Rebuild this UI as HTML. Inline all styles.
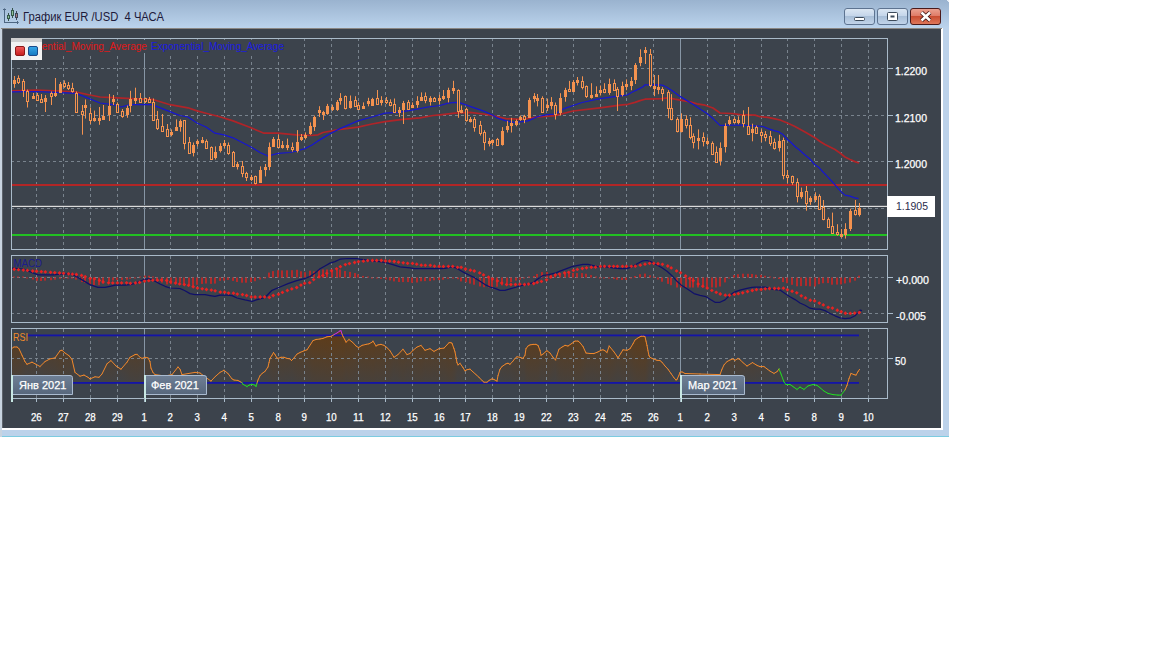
<!DOCTYPE html>
<html><head><meta charset="utf-8">
<style>
html,body{margin:0;padding:0;background:#fff;width:1152px;height:648px;overflow:hidden}
svg{display:block;position:absolute;left:0;top:0}
text{font-family:"Liberation Sans",sans-serif}
</style></head><body>
<svg width="1152" height="648" viewBox="0 0 1152 648">
<defs>
<linearGradient id="tb" x1="0" y1="0" x2="0" y2="1">
<stop offset="0" stop-color="#9ab3cf"/><stop offset="1" stop-color="#bbd3ec"/>
</linearGradient>
<linearGradient id="colg" x1="0" y1="0" x2="0" y2="1"><stop offset="0" stop-color="#6a3a08" stop-opacity="0.75"/><stop offset="1" stop-color="#6a3a08" stop-opacity="0.3"/></linearGradient>
<linearGradient id="rsifill" gradientUnits="userSpaceOnUse" x1="0" y1="330" x2="0" y2="384">
<stop offset="0" stop-color="#5e3810"/><stop offset="0.5" stop-color="#4e3b26"/><stop offset="1" stop-color="#42403e"/>
</linearGradient>
<linearGradient id="btn" x1="0" y1="0" x2="0" y2="1">
<stop offset="0" stop-color="#dce7f3"/><stop offset="0.45" stop-color="#c5d6ea"/><stop offset="0.5" stop-color="#a9bfd8"/><stop offset="1" stop-color="#c3d5ea"/>
</linearGradient>
<linearGradient id="btnc" x1="0" y1="0" x2="0" y2="1">
<stop offset="0" stop-color="#eba393"/><stop offset="0.45" stop-color="#e07c68"/><stop offset="0.5" stop-color="#c94d32"/><stop offset="1" stop-color="#e07a5c"/>
</linearGradient>
<linearGradient id="lbl" x1="0" y1="0" x2="0" y2="1">
<stop offset="0" stop-color="#6e7f95"/><stop offset="1" stop-color="#57677c"/>
</linearGradient>
<linearGradient id="sqr" x1="0" y1="0" x2="0" y2="1">
<stop offset="0" stop-color="#f25a5a"/><stop offset="1" stop-color="#c41c1c"/>
</linearGradient>
<linearGradient id="sqb" x1="0" y1="0" x2="0" y2="1">
<stop offset="0" stop-color="#38a8e8"/><stop offset="1" stop-color="#1478c0"/>
</linearGradient>
<clipPath id="cmain"><rect x="12" y="39" width="875" height="210"/></clipPath>
<clipPath id="cmacd"><rect x="12" y="256" width="875" height="66"/></clipPath>
<clipPath id="crsi"><rect x="12" y="329" width="875" height="69"/></clipPath>
</defs>

<rect x="0" y="0" width="949" height="437" fill="#bcd2ea"/>
<rect x="0" y="0" width="949" height="28" fill="url(#tb)"/>
<rect x="0" y="436" width="949" height="1" fill="#7ccbe0"/>
<rect x="947" y="0" width="2" height="1" fill="#e8f0f8"/><rect x="948" y="1" width="1" height="1" fill="#e8f0f8"/>
<rect x="0" y="28" width="2" height="409" fill="#c8d4e0"/>
<rect x="2" y="28" width="941" height="402" fill="#ffffff"/>
<rect x="1" y="28" width="941" height="1" fill="#8a8682"/>
<rect x="2" y="29" width="939" height="399" fill="#3c434c"/>
<rect x="2" y="29" width="1" height="399" fill="#5e646c"/>
<g shape-rendering="crispEdges">
<rect x="4" y="9" width="1" height="14" fill="#4d6682"/><rect x="3" y="9" width="3" height="1" fill="#4d6682"/><rect x="4" y="8" width="1" height="1" fill="#6f86a0"/>
<rect x="4" y="22" width="15" height="1" fill="#4d6682"/><rect x="17" y="21" width="1" height="3" fill="#4d6682"/><rect x="18" y="22" width="1" height="1" fill="#6f86a0"/>
<rect x="8" y="13" width="1" height="8" fill="#35524a"/><rect x="7" y="15" width="3" height="4" fill="#35584a"/><rect x="8" y="16" width="1" height="2" fill="#90c098"/>
<rect x="12" y="8" width="1" height="10" fill="#35524a"/><rect x="11" y="10" width="3" height="6" fill="#35584a"/><rect x="12" y="11" width="1" height="4" fill="#90c098"/>
<rect x="16" y="11" width="1" height="9" fill="#3c4656"/><rect x="15" y="13" width="3" height="5" fill="#3c4656"/><rect x="16" y="14" width="1" height="3" fill="#a87880"/>
</g>

<text x="23" y="21" font-size="12" fill="#1e1a3a" textLength="141" lengthAdjust="spacingAndGlyphs">График EUR /USD&#160; 4 ЧАСА</text>
<rect x="844.5" y="8.5" width="30" height="16" rx="2.5" fill="url(#btn)" stroke="#5d7390"/>
<rect x="854.5" y="17.5" width="10" height="3" rx="1" fill="#fff" stroke="#3c4a5a"/>
<rect x="877.5" y="8.5" width="30" height="16" rx="2.5" fill="url(#btn)" stroke="#5d7390"/>
<rect x="887.5" y="12.5" width="10" height="8" rx="1" fill="#fff" stroke="#3c4a5a"/><rect x="890.5" y="15.5" width="4" height="2" fill="#3c4a5a"/>
<rect x="910.5" y="8.5" width="30" height="16" rx="2.5" fill="url(#btnc)" stroke="#4a1a1a"/>
<path d="M921.5 12.5 L930 20.5 M930 12.5 L921.5 20.5" stroke="#3a1010" stroke-width="4.2"/>
<path d="M921.5 12.5 L930 20.5 M930 12.5 L921.5 20.5" stroke="#ffffff" stroke-width="2.6"/>
<line x1="36.5" y1="38" x2="36.5" y2="249" stroke="#79838d" stroke-width="1" stroke-dasharray="3,3"/>
<line x1="63.5" y1="38" x2="63.5" y2="249" stroke="#79838d" stroke-width="1" stroke-dasharray="3,3"/>
<line x1="90.5" y1="38" x2="90.5" y2="249" stroke="#79838d" stroke-width="1" stroke-dasharray="3,3"/>
<line x1="117.5" y1="38" x2="117.5" y2="249" stroke="#79838d" stroke-width="1" stroke-dasharray="3,3"/>
<line x1="144.5" y1="38" x2="144.5" y2="249" stroke="#8796a5" stroke-width="1"/>
<line x1="170.5" y1="38" x2="170.5" y2="249" stroke="#79838d" stroke-width="1" stroke-dasharray="3,3"/>
<line x1="197.5" y1="38" x2="197.5" y2="249" stroke="#79838d" stroke-width="1" stroke-dasharray="3,3"/>
<line x1="224.5" y1="38" x2="224.5" y2="249" stroke="#79838d" stroke-width="1" stroke-dasharray="3,3"/>
<line x1="251.5" y1="38" x2="251.5" y2="249" stroke="#79838d" stroke-width="1" stroke-dasharray="3,3"/>
<line x1="278.5" y1="38" x2="278.5" y2="249" stroke="#79838d" stroke-width="1" stroke-dasharray="3,3"/>
<line x1="304.5" y1="38" x2="304.5" y2="249" stroke="#79838d" stroke-width="1" stroke-dasharray="3,3"/>
<line x1="331.5" y1="38" x2="331.5" y2="249" stroke="#79838d" stroke-width="1" stroke-dasharray="3,3"/>
<line x1="358.5" y1="38" x2="358.5" y2="249" stroke="#79838d" stroke-width="1" stroke-dasharray="3,3"/>
<line x1="385.5" y1="38" x2="385.5" y2="249" stroke="#79838d" stroke-width="1" stroke-dasharray="3,3"/>
<line x1="412.5" y1="38" x2="412.5" y2="249" stroke="#79838d" stroke-width="1" stroke-dasharray="3,3"/>
<line x1="439.5" y1="38" x2="439.5" y2="249" stroke="#79838d" stroke-width="1" stroke-dasharray="3,3"/>
<line x1="465.5" y1="38" x2="465.5" y2="249" stroke="#79838d" stroke-width="1" stroke-dasharray="3,3"/>
<line x1="492.5" y1="38" x2="492.5" y2="249" stroke="#79838d" stroke-width="1" stroke-dasharray="3,3"/>
<line x1="519.5" y1="38" x2="519.5" y2="249" stroke="#79838d" stroke-width="1" stroke-dasharray="3,3"/>
<line x1="546.5" y1="38" x2="546.5" y2="249" stroke="#79838d" stroke-width="1" stroke-dasharray="3,3"/>
<line x1="573.5" y1="38" x2="573.5" y2="249" stroke="#79838d" stroke-width="1" stroke-dasharray="3,3"/>
<line x1="600.5" y1="38" x2="600.5" y2="249" stroke="#79838d" stroke-width="1" stroke-dasharray="3,3"/>
<line x1="626.5" y1="38" x2="626.5" y2="249" stroke="#79838d" stroke-width="1" stroke-dasharray="3,3"/>
<line x1="653.5" y1="38" x2="653.5" y2="249" stroke="#79838d" stroke-width="1" stroke-dasharray="3,3"/>
<line x1="680.5" y1="38" x2="680.5" y2="249" stroke="#8796a5" stroke-width="1"/>
<line x1="707.5" y1="38" x2="707.5" y2="249" stroke="#79838d" stroke-width="1" stroke-dasharray="3,3"/>
<line x1="734.5" y1="38" x2="734.5" y2="249" stroke="#79838d" stroke-width="1" stroke-dasharray="3,3"/>
<line x1="761.5" y1="38" x2="761.5" y2="249" stroke="#79838d" stroke-width="1" stroke-dasharray="3,3"/>
<line x1="787.5" y1="38" x2="787.5" y2="249" stroke="#79838d" stroke-width="1" stroke-dasharray="3,3"/>
<line x1="814.5" y1="38" x2="814.5" y2="249" stroke="#79838d" stroke-width="1" stroke-dasharray="3,3"/>
<line x1="841.5" y1="38" x2="841.5" y2="249" stroke="#79838d" stroke-width="1" stroke-dasharray="3,3"/>
<line x1="868.5" y1="38" x2="868.5" y2="249" stroke="#79838d" stroke-width="1" stroke-dasharray="3,3"/>
<line x1="11" y1="68.5" x2="887" y2="68.5" stroke="#79838d" stroke-width="1" stroke-dasharray="3,3"/>
<line x1="11" y1="115.5" x2="887" y2="115.5" stroke="#79838d" stroke-width="1" stroke-dasharray="3,3"/>
<line x1="11" y1="161.5" x2="887" y2="161.5" stroke="#79838d" stroke-width="1" stroke-dasharray="3,3"/>
<line x1="11" y1="208.5" x2="887" y2="208.5" stroke="#79838d" stroke-width="1" stroke-dasharray="3,3"/>
<rect x="12" y="184" width="875" height="2" fill="#b22626"/>
<rect x="12" y="206" width="875" height="1" fill="#dcdcdc"/><rect x="12" y="205" width="875" height="1" fill="#5c6168"/>
<rect x="12" y="234" width="875" height="2" fill="#22c022"/>
<g clip-path="url(#cmain)">
<polyline points="11,91 36,90 60,91 76,92 90,95 100,97 113,97.7 145,99.3 152,99.3 170,104.7 188,107.8 197,110.9 206,113.2 218,116.2 233,120.9 251,127.8 264,133.2 278,133.2 296,134.8 311,135.5 318,134.8 323,132.5 340,129.4 358,127.1 372,124 385,121.7 403,119.4 420,117.8 433,115.5 440,114.8 455,113.2 470,112.4 483,114 492,115.5 506,118.6 520,119.4 538,117 555,115.6 573,111 600,107.9 620,105.2 628,104.3 635,102.4 640,100.6 645,99.2 655,98.9 662,98.7 668,97.8 675,99.2 683,100.6 690,101.9 697,103.8 705,105.2 713,108 720,113 732,113.5 740,114.6 755,115.1 760,116.7 768,117.3 775,118.9 780,120 788,123.2 795,126.5 805,131.9 815,137.8 820,141.5 825,144.5 830,147 835,149.5 840,153 845,157 850,159.5 855,161.6 859,163" fill="none" stroke="#b02428" stroke-width="1.7" stroke-linejoin="round"/>
<polyline points="11,91.9 36,91.5 60,92.7 76,93.3 90,98.9 100,103 113,104.7 121,107 130,104.7 145,104.7 152,104.7 170,111.6 175,113.7 180,115.5 188,117 197,123 206,127 215,133.2 224,134.8 233,137.8 251,147 260,152.5 268,156 278,153.3 290,152.5 296.7,151 305,148.6 312,145 318,140.9 323,137.9 331,133.3 340,128.6 358,120.9 372,117 385,113.2 398,112.4 412,110.1 428,107 440,105.5 448,103.2 455,102.4 461,103.2 470,106.3 483,110.9 492,114.8 497,117.8 506,120.9 515,122.5 528,120.9 538,116.5 546,114.8 555,114 564,108.7 582,102.5 600,98.6 620,95.9 627,95 632,92.2 638,89.4 643,86.7 645,84.8 660,84.8 663,85.3 668,88 673,91.3 680,96.4 687,100.6 693,104.3 700,108.9 707,113.5 713,118.6 720,125.4 740,125 755,125.9 763,126.5 768,128.6 775,130.8 779,131.9 783,134.6 788,140 790,141.5 795,146.5 800,150.5 805,155 810,159 814.6,164.6 819,167.6 823,172 828,177.1 833,182.6 837,187.1 841,191.6 845,195.1 850,196.1 854,197.6 858.5,198.6" fill="none" stroke="#1616d0" stroke-width="1.25" stroke-linejoin="round"/>
<line x1="14.5" y1="76" x2="14.5" y2="87.8" stroke="#f4924f" stroke-width="1"/>
<rect x="13" y="80" width="3" height="4" fill="#f4924f"/>
<line x1="18.5" y1="75.4" x2="18.5" y2="84" stroke="#f4924f" stroke-width="1"/>
<rect x="17.5" y="78.5" width="2" height="4" fill="#3c434c" stroke="#f4924f" stroke-width="1"/>
<line x1="23.5" y1="79" x2="23.5" y2="97" stroke="#f4924f" stroke-width="1"/>
<rect x="22.5" y="81.5" width="2" height="9" fill="#3c434c" stroke="#f4924f" stroke-width="1"/>
<line x1="27.5" y1="89.6" x2="27.5" y2="107.5" stroke="#f4924f" stroke-width="1"/>
<rect x="26.5" y="91.5" width="2" height="10" fill="#3c434c" stroke="#f4924f" stroke-width="1"/>
<line x1="33.5" y1="93" x2="33.5" y2="99" stroke="#f4924f" stroke-width="1"/>
<rect x="32" y="96" width="3" height="3" fill="#f4924f"/>
<line x1="37.5" y1="93" x2="37.5" y2="100.7" stroke="#f4924f" stroke-width="1"/>
<rect x="36.5" y="95.5" width="2" height="5" fill="#3c434c" stroke="#f4924f" stroke-width="1"/>
<line x1="41.5" y1="94" x2="41.5" y2="103" stroke="#f4924f" stroke-width="1"/>
<rect x="40.5" y="99.5" width="2" height="3" fill="#3c434c" stroke="#f4924f" stroke-width="1"/>
<line x1="45.5" y1="95" x2="45.5" y2="112" stroke="#f4924f" stroke-width="1"/>
<rect x="44" y="98" width="3" height="4" fill="#f4924f"/>
<line x1="51.5" y1="91.5" x2="51.5" y2="105" stroke="#f4924f" stroke-width="1"/>
<rect x="50.5" y="93.5" width="2" height="3" fill="#3c434c" stroke="#f4924f" stroke-width="1"/>
<line x1="55.5" y1="78" x2="55.5" y2="97" stroke="#f4924f" stroke-width="1"/>
<rect x="54" y="93" width="3" height="3" fill="#f4924f"/>
<line x1="60.5" y1="82" x2="60.5" y2="92" stroke="#f4924f" stroke-width="1"/>
<rect x="59" y="84" width="3" height="9" fill="#f4924f"/>
<line x1="64.5" y1="80.4" x2="64.5" y2="87.8" stroke="#f4924f" stroke-width="1"/>
<rect x="63.5" y="83.5" width="2" height="3" fill="#3c434c" stroke="#f4924f" stroke-width="1"/>
<line x1="68.5" y1="82" x2="68.5" y2="90" stroke="#f4924f" stroke-width="1"/>
<rect x="67.5" y="85.5" width="2" height="3" fill="#3c434c" stroke="#f4924f" stroke-width="1"/>
<line x1="72.5" y1="82.8" x2="72.5" y2="92.7" stroke="#f4924f" stroke-width="1"/>
<rect x="71.5" y="88.5" width="2" height="3" fill="#3c434c" stroke="#f4924f" stroke-width="1"/>
<line x1="76.5" y1="91.5" x2="76.5" y2="112.5" stroke="#f4924f" stroke-width="1"/>
<rect x="75.5" y="93.5" width="2" height="19" fill="#3c434c" stroke="#f4924f" stroke-width="1"/>
<line x1="82.5" y1="105" x2="82.5" y2="134.7" stroke="#f4924f" stroke-width="1"/>
<rect x="81.5" y="111.5" width="2" height="3" fill="#3c434c" stroke="#f4924f" stroke-width="1"/>
<line x1="85.5" y1="99.5" x2="85.5" y2="118.6" stroke="#f4924f" stroke-width="1"/>
<rect x="84" y="105" width="3" height="3" fill="#f4924f"/>
<line x1="90.5" y1="107.5" x2="90.5" y2="124" stroke="#f4924f" stroke-width="1"/>
<rect x="89.5" y="113.5" width="2" height="7" fill="#3c434c" stroke="#f4924f" stroke-width="1"/>
<line x1="94.5" y1="110.6" x2="94.5" y2="121.7" stroke="#f4924f" stroke-width="1"/>
<rect x="93" y="118" width="3" height="3" fill="#f4924f"/>
<line x1="99.5" y1="107" x2="99.5" y2="124.8" stroke="#f4924f" stroke-width="1"/>
<rect x="98" y="118" width="3" height="3" fill="#f4924f"/>
<line x1="103.5" y1="105" x2="103.5" y2="120" stroke="#f4924f" stroke-width="1"/>
<rect x="102" y="116" width="3" height="4" fill="#f4924f"/>
<line x1="109.5" y1="94" x2="109.5" y2="121" stroke="#f4924f" stroke-width="1"/>
<rect x="108" y="106" width="3" height="9" fill="#f4924f"/>
<line x1="113.5" y1="95" x2="113.5" y2="105" stroke="#f4924f" stroke-width="1"/>
<rect x="112" y="99" width="3" height="3" fill="#f4924f"/>
<line x1="117.5" y1="102.4" x2="117.5" y2="113" stroke="#f4924f" stroke-width="1"/>
<rect x="116.5" y="104.5" width="2" height="8" fill="#3c434c" stroke="#f4924f" stroke-width="1"/>
<line x1="122.5" y1="109" x2="122.5" y2="117.8" stroke="#f4924f" stroke-width="1"/>
<rect x="121.5" y="111.5" width="2" height="5" fill="#3c434c" stroke="#f4924f" stroke-width="1"/>
<line x1="127.5" y1="105.5" x2="127.5" y2="117.8" stroke="#f4924f" stroke-width="1"/>
<rect x="126" y="108" width="3" height="7" fill="#f4924f"/>
<line x1="130.5" y1="90.8" x2="130.5" y2="112.4" stroke="#f4924f" stroke-width="1"/>
<rect x="129" y="99" width="3" height="7" fill="#f4924f"/>
<line x1="135.5" y1="87.7" x2="135.5" y2="104" stroke="#f4924f" stroke-width="1"/>
<rect x="134" y="98" width="3" height="3" fill="#f4924f"/>
<line x1="140.5" y1="93" x2="140.5" y2="103" stroke="#f4924f" stroke-width="1"/>
<rect x="139.5" y="98.5" width="2" height="4" fill="#3c434c" stroke="#f4924f" stroke-width="1"/>
<line x1="145.5" y1="97.7" x2="145.5" y2="103" stroke="#f4924f" stroke-width="1"/>
<rect x="144.5" y="98.5" width="2" height="3" fill="#3c434c" stroke="#f4924f" stroke-width="1"/>
<line x1="149.5" y1="97" x2="149.5" y2="103" stroke="#f4924f" stroke-width="1"/>
<rect x="148.5" y="99.5" width="2" height="3" fill="#3c434c" stroke="#f4924f" stroke-width="1"/>
<line x1="153.5" y1="98.5" x2="153.5" y2="121" stroke="#f4924f" stroke-width="1"/>
<rect x="152.5" y="102.5" width="2" height="18" fill="#3c434c" stroke="#f4924f" stroke-width="1"/>
<line x1="157.5" y1="110.9" x2="157.5" y2="130" stroke="#f4924f" stroke-width="1"/>
<rect x="156.5" y="119.5" width="2" height="9" fill="#3c434c" stroke="#f4924f" stroke-width="1"/>
<line x1="162.5" y1="114" x2="162.5" y2="131.7" stroke="#f4924f" stroke-width="1"/>
<rect x="161.5" y="126.5" width="2" height="5" fill="#3c434c" stroke="#f4924f" stroke-width="1"/>
<line x1="167.5" y1="124" x2="167.5" y2="136.3" stroke="#f4924f" stroke-width="1"/>
<rect x="166.5" y="129.5" width="2" height="7" fill="#3c434c" stroke="#f4924f" stroke-width="1"/>
<line x1="171.5" y1="129.4" x2="171.5" y2="136.3" stroke="#f4924f" stroke-width="1"/>
<rect x="170" y="132" width="3" height="3" fill="#f4924f"/>
<line x1="176.5" y1="119.4" x2="176.5" y2="131" stroke="#f4924f" stroke-width="1"/>
<rect x="175" y="127" width="3" height="4" fill="#f4924f"/>
<line x1="180.5" y1="119.4" x2="180.5" y2="131.7" stroke="#f4924f" stroke-width="1"/>
<rect x="179" y="121" width="3" height="6" fill="#f4924f"/>
<line x1="184.5" y1="120" x2="184.5" y2="149.4" stroke="#f4924f" stroke-width="1"/>
<rect x="183.5" y="120.5" width="2" height="23" fill="#3c434c" stroke="#f4924f" stroke-width="1"/>
<line x1="189.5" y1="137" x2="189.5" y2="154" stroke="#f4924f" stroke-width="1"/>
<rect x="188.5" y="142.5" width="2" height="11" fill="#3c434c" stroke="#f4924f" stroke-width="1"/>
<line x1="193.5" y1="142.5" x2="193.5" y2="156.4" stroke="#f4924f" stroke-width="1"/>
<rect x="192" y="145" width="3" height="8" fill="#f4924f"/>
<line x1="197.5" y1="139.4" x2="197.5" y2="146.4" stroke="#f4924f" stroke-width="1"/>
<rect x="196" y="141" width="3" height="3" fill="#f4924f"/>
<line x1="202.5" y1="137" x2="202.5" y2="143.3" stroke="#f4924f" stroke-width="1"/>
<rect x="201" y="140" width="3" height="3" fill="#f4924f"/>
<line x1="206.5" y1="139.4" x2="206.5" y2="148.7" stroke="#f4924f" stroke-width="1"/>
<rect x="205.5" y="141.5" width="2" height="7" fill="#3c434c" stroke="#f4924f" stroke-width="1"/>
<line x1="211.5" y1="146.4" x2="211.5" y2="159.5" stroke="#f4924f" stroke-width="1"/>
<rect x="210.5" y="147.5" width="2" height="12" fill="#3c434c" stroke="#f4924f" stroke-width="1"/>
<line x1="215.5" y1="146.4" x2="215.5" y2="159.5" stroke="#f4924f" stroke-width="1"/>
<rect x="214" y="152" width="3" height="6" fill="#f4924f"/>
<line x1="220.5" y1="143.2" x2="220.5" y2="152.5" stroke="#f4924f" stroke-width="1"/>
<rect x="219" y="146" width="3" height="5" fill="#f4924f"/>
<line x1="224.5" y1="140" x2="224.5" y2="147.9" stroke="#f4924f" stroke-width="1"/>
<rect x="223" y="143" width="3" height="3" fill="#f4924f"/>
<line x1="228.5" y1="142.5" x2="228.5" y2="154.8" stroke="#f4924f" stroke-width="1"/>
<rect x="227.5" y="145.5" width="2" height="8" fill="#3c434c" stroke="#f4924f" stroke-width="1"/>
<line x1="233.5" y1="151" x2="233.5" y2="167" stroke="#f4924f" stroke-width="1"/>
<rect x="232.5" y="152.5" width="2" height="14" fill="#3c434c" stroke="#f4924f" stroke-width="1"/>
<line x1="237.5" y1="161.8" x2="237.5" y2="169.5" stroke="#f4924f" stroke-width="1"/>
<rect x="236" y="164" width="3" height="3" fill="#f4924f"/>
<line x1="242.5" y1="161" x2="242.5" y2="177.2" stroke="#f4924f" stroke-width="1"/>
<rect x="241.5" y="166.5" width="2" height="7" fill="#3c434c" stroke="#f4924f" stroke-width="1"/>
<line x1="246.5" y1="171.8" x2="246.5" y2="181" stroke="#f4924f" stroke-width="1"/>
<rect x="245.5" y="173.5" width="2" height="4" fill="#3c434c" stroke="#f4924f" stroke-width="1"/>
<line x1="251.5" y1="174.9" x2="251.5" y2="181" stroke="#f4924f" stroke-width="1"/>
<rect x="250" y="177" width="3" height="3" fill="#f4924f"/>
<line x1="255.5" y1="175.6" x2="255.5" y2="184.4" stroke="#f4924f" stroke-width="1"/>
<rect x="254.5" y="176.5" width="2" height="7" fill="#3c434c" stroke="#f4924f" stroke-width="1"/>
<line x1="260.5" y1="166.4" x2="260.5" y2="182.6" stroke="#f4924f" stroke-width="1"/>
<rect x="259" y="170" width="3" height="13" fill="#f4924f"/>
<line x1="265.5" y1="164" x2="265.5" y2="176.4" stroke="#f4924f" stroke-width="1"/>
<rect x="264" y="167" width="3" height="3" fill="#f4924f"/>
<line x1="269.5" y1="142.5" x2="269.5" y2="170.2" stroke="#f4924f" stroke-width="1"/>
<rect x="268" y="147" width="3" height="20" fill="#f4924f"/>
<line x1="273.5" y1="137" x2="273.5" y2="147" stroke="#f4924f" stroke-width="1"/>
<rect x="272" y="139" width="3" height="8" fill="#f4924f"/>
<line x1="278.5" y1="134.8" x2="278.5" y2="147.9" stroke="#f4924f" stroke-width="1"/>
<rect x="277.5" y="139.5" width="2" height="8" fill="#3c434c" stroke="#f4924f" stroke-width="1"/>
<line x1="282.5" y1="141" x2="282.5" y2="148.6" stroke="#f4924f" stroke-width="1"/>
<rect x="281" y="145" width="3" height="3" fill="#f4924f"/>
<line x1="287.5" y1="138.6" x2="287.5" y2="150.2" stroke="#f4924f" stroke-width="1"/>
<rect x="286" y="145" width="3" height="3" fill="#f4924f"/>
<line x1="292.5" y1="142.5" x2="292.5" y2="151.7" stroke="#f4924f" stroke-width="1"/>
<rect x="291.5" y="147.5" width="2" height="2" fill="#3c434c" stroke="#f4924f" stroke-width="1"/>
<line x1="297.5" y1="130.1" x2="297.5" y2="152.5" stroke="#f4924f" stroke-width="1"/>
<rect x="296" y="142" width="3" height="9" fill="#f4924f"/>
<line x1="301.5" y1="134" x2="301.5" y2="141" stroke="#f4924f" stroke-width="1"/>
<rect x="300" y="137" width="3" height="3" fill="#f4924f"/>
<line x1="305.5" y1="132.4" x2="305.5" y2="139.4" stroke="#f4924f" stroke-width="1"/>
<rect x="304" y="135" width="3" height="3" fill="#f4924f"/>
<line x1="310.5" y1="122.4" x2="310.5" y2="134.8" stroke="#f4924f" stroke-width="1"/>
<rect x="309" y="126" width="3" height="8" fill="#f4924f"/>
<line x1="314.5" y1="115.5" x2="314.5" y2="130.9" stroke="#f4924f" stroke-width="1"/>
<rect x="313" y="117" width="3" height="10" fill="#f4924f"/>
<line x1="319.5" y1="106.2" x2="319.5" y2="117" stroke="#f4924f" stroke-width="1"/>
<rect x="318" y="110" width="3" height="3" fill="#f4924f"/>
<line x1="323.5" y1="110.8" x2="323.5" y2="120" stroke="#f4924f" stroke-width="1"/>
<rect x="322" y="112" width="3" height="3" fill="#f4924f"/>
<line x1="327.5" y1="103.9" x2="327.5" y2="114.8" stroke="#f4924f" stroke-width="1"/>
<rect x="326" y="106" width="3" height="8" fill="#f4924f"/>
<line x1="332.5" y1="104.7" x2="332.5" y2="110.9" stroke="#f4924f" stroke-width="1"/>
<rect x="331" y="107" width="3" height="3" fill="#f4924f"/>
<line x1="337.5" y1="100" x2="337.5" y2="110.9" stroke="#f4924f" stroke-width="1"/>
<rect x="336" y="102" width="3" height="8" fill="#f4924f"/>
<line x1="340.5" y1="93.1" x2="340.5" y2="104.7" stroke="#f4924f" stroke-width="1"/>
<rect x="339" y="98" width="3" height="3" fill="#f4924f"/>
<line x1="345.5" y1="95.5" x2="345.5" y2="109.4" stroke="#f4924f" stroke-width="1"/>
<rect x="344.5" y="96.5" width="2" height="12" fill="#3c434c" stroke="#f4924f" stroke-width="1"/>
<line x1="350.5" y1="95.5" x2="350.5" y2="108.6" stroke="#f4924f" stroke-width="1"/>
<rect x="349" y="101" width="3" height="7" fill="#f4924f"/>
<line x1="355.5" y1="96.2" x2="355.5" y2="106.3" stroke="#f4924f" stroke-width="1"/>
<rect x="354.5" y="100.5" width="2" height="6" fill="#3c434c" stroke="#f4924f" stroke-width="1"/>
<line x1="358.5" y1="102.4" x2="358.5" y2="108.6" stroke="#f4924f" stroke-width="1"/>
<rect x="357.5" y="105.5" width="2" height="4" fill="#3c434c" stroke="#f4924f" stroke-width="1"/>
<line x1="363.5" y1="102.4" x2="363.5" y2="108.6" stroke="#f4924f" stroke-width="1"/>
<rect x="362" y="106" width="3" height="3" fill="#f4924f"/>
<line x1="368.5" y1="97.8" x2="368.5" y2="106.3" stroke="#f4924f" stroke-width="1"/>
<rect x="367" y="101" width="3" height="3" fill="#f4924f"/>
<line x1="372.5" y1="97.8" x2="372.5" y2="105.5" stroke="#f4924f" stroke-width="1"/>
<rect x="371" y="99" width="3" height="7" fill="#f4924f"/>
<line x1="377.5" y1="90" x2="377.5" y2="104.7" stroke="#f4924f" stroke-width="1"/>
<rect x="376.5" y="98.5" width="2" height="6" fill="#3c434c" stroke="#f4924f" stroke-width="1"/>
<line x1="381.5" y1="96.2" x2="381.5" y2="105.5" stroke="#f4924f" stroke-width="1"/>
<rect x="380" y="100" width="3" height="3" fill="#f4924f"/>
<line x1="386.5" y1="97" x2="386.5" y2="104" stroke="#f4924f" stroke-width="1"/>
<rect x="385.5" y="100.5" width="2" height="2" fill="#3c434c" stroke="#f4924f" stroke-width="1"/>
<line x1="390.5" y1="99.3" x2="390.5" y2="106.3" stroke="#f4924f" stroke-width="1"/>
<rect x="389.5" y="102.5" width="2" height="3" fill="#3c434c" stroke="#f4924f" stroke-width="1"/>
<line x1="394.5" y1="98.5" x2="394.5" y2="112.4" stroke="#f4924f" stroke-width="1"/>
<rect x="393.5" y="104.5" width="2" height="8" fill="#3c434c" stroke="#f4924f" stroke-width="1"/>
<line x1="399.5" y1="107" x2="399.5" y2="117" stroke="#f4924f" stroke-width="1"/>
<rect x="398" y="110" width="3" height="3" fill="#f4924f"/>
<line x1="403.5" y1="100.9" x2="403.5" y2="124" stroke="#f4924f" stroke-width="1"/>
<rect x="402" y="103" width="3" height="7" fill="#f4924f"/>
<line x1="408.5" y1="100" x2="408.5" y2="110.1" stroke="#f4924f" stroke-width="1"/>
<rect x="407.5" y="102.5" width="2" height="7" fill="#3c434c" stroke="#f4924f" stroke-width="1"/>
<line x1="412.5" y1="102.4" x2="412.5" y2="107" stroke="#f4924f" stroke-width="1"/>
<rect x="411" y="105" width="3" height="3" fill="#f4924f"/>
<line x1="417.5" y1="96.2" x2="417.5" y2="107.8" stroke="#f4924f" stroke-width="1"/>
<rect x="416" y="101" width="3" height="4" fill="#f4924f"/>
<line x1="421.5" y1="92.4" x2="421.5" y2="100.9" stroke="#f4924f" stroke-width="1"/>
<rect x="420" y="97" width="3" height="4" fill="#f4924f"/>
<line x1="425.5" y1="92.4" x2="425.5" y2="103.2" stroke="#f4924f" stroke-width="1"/>
<rect x="424.5" y="96.5" width="2" height="4" fill="#3c434c" stroke="#f4924f" stroke-width="1"/>
<line x1="430.5" y1="96.2" x2="430.5" y2="105.5" stroke="#f4924f" stroke-width="1"/>
<rect x="429" y="98" width="3" height="4" fill="#f4924f"/>
<line x1="434.5" y1="97" x2="434.5" y2="101.6" stroke="#f4924f" stroke-width="1"/>
<rect x="433.5" y="98.5" width="2" height="3" fill="#3c434c" stroke="#f4924f" stroke-width="1"/>
<line x1="439.5" y1="94.7" x2="439.5" y2="104" stroke="#f4924f" stroke-width="1"/>
<rect x="438" y="98" width="3" height="3" fill="#f4924f"/>
<line x1="443.5" y1="90" x2="443.5" y2="100" stroke="#f4924f" stroke-width="1"/>
<rect x="442" y="96" width="3" height="3" fill="#f4924f"/>
<line x1="448.5" y1="87.7" x2="448.5" y2="102.4" stroke="#f4924f" stroke-width="1"/>
<rect x="447" y="90" width="3" height="8" fill="#f4924f"/>
<line x1="453.5" y1="80.8" x2="453.5" y2="93.9" stroke="#f4924f" stroke-width="1"/>
<rect x="452" y="88" width="3" height="3" fill="#f4924f"/>
<line x1="458.5" y1="89.3" x2="458.5" y2="117.8" stroke="#f4924f" stroke-width="1"/>
<rect x="457.5" y="90.5" width="2" height="21" fill="#3c434c" stroke="#f4924f" stroke-width="1"/>
<line x1="461.5" y1="105.5" x2="461.5" y2="113.2" stroke="#f4924f" stroke-width="1"/>
<rect x="460" y="110" width="3" height="3" fill="#f4924f"/>
<line x1="466.5" y1="107.8" x2="466.5" y2="121.7" stroke="#f4924f" stroke-width="1"/>
<rect x="465.5" y="109.5" width="2" height="11" fill="#3c434c" stroke="#f4924f" stroke-width="1"/>
<line x1="470.5" y1="117" x2="470.5" y2="122.5" stroke="#f4924f" stroke-width="1"/>
<rect x="469" y="119" width="3" height="3" fill="#f4924f"/>
<line x1="474.5" y1="117" x2="474.5" y2="131.7" stroke="#f4924f" stroke-width="1"/>
<rect x="473.5" y="119.5" width="2" height="8" fill="#3c434c" stroke="#f4924f" stroke-width="1"/>
<line x1="480.5" y1="120.9" x2="480.5" y2="135.6" stroke="#f4924f" stroke-width="1"/>
<rect x="479.5" y="125.5" width="2" height="8" fill="#3c434c" stroke="#f4924f" stroke-width="1"/>
<line x1="484.5" y1="130.2" x2="484.5" y2="150.2" stroke="#f4924f" stroke-width="1"/>
<rect x="483.5" y="132.5" width="2" height="10" fill="#3c434c" stroke="#f4924f" stroke-width="1"/>
<line x1="489.5" y1="137.9" x2="489.5" y2="146.4" stroke="#f4924f" stroke-width="1"/>
<rect x="488" y="141" width="3" height="3" fill="#f4924f"/>
<line x1="492.5" y1="139.4" x2="492.5" y2="145.6" stroke="#f4924f" stroke-width="1"/>
<rect x="491" y="140" width="3" height="3" fill="#f4924f"/>
<line x1="497.5" y1="137.9" x2="497.5" y2="145.6" stroke="#f4924f" stroke-width="1"/>
<rect x="496.5" y="139.5" width="2" height="6" fill="#3c434c" stroke="#f4924f" stroke-width="1"/>
<line x1="502.5" y1="127.1" x2="502.5" y2="145.6" stroke="#f4924f" stroke-width="1"/>
<rect x="501" y="131" width="3" height="14" fill="#f4924f"/>
<line x1="507.5" y1="120.9" x2="507.5" y2="132.5" stroke="#f4924f" stroke-width="1"/>
<rect x="506" y="126" width="3" height="4" fill="#f4924f"/>
<line x1="511.5" y1="117.8" x2="511.5" y2="132.5" stroke="#f4924f" stroke-width="1"/>
<rect x="510" y="123" width="3" height="3" fill="#f4924f"/>
<line x1="516.5" y1="119.4" x2="516.5" y2="126.3" stroke="#f4924f" stroke-width="1"/>
<rect x="515" y="121" width="3" height="4" fill="#f4924f"/>
<line x1="520.5" y1="115.5" x2="520.5" y2="120.9" stroke="#f4924f" stroke-width="1"/>
<rect x="519" y="117" width="3" height="3" fill="#f4924f"/>
<line x1="524.5" y1="114.8" x2="524.5" y2="123.2" stroke="#f4924f" stroke-width="1"/>
<rect x="523.5" y="116.5" width="2" height="3" fill="#3c434c" stroke="#f4924f" stroke-width="1"/>
<line x1="529.5" y1="97.8" x2="529.5" y2="117.8" stroke="#f4924f" stroke-width="1"/>
<rect x="528" y="100" width="3" height="18" fill="#f4924f"/>
<line x1="534.5" y1="93.1" x2="534.5" y2="102.4" stroke="#f4924f" stroke-width="1"/>
<rect x="533" y="96" width="3" height="3" fill="#f4924f"/>
<line x1="537.5" y1="94" x2="537.5" y2="106.4" stroke="#f4924f" stroke-width="1"/>
<rect x="536" y="98" width="3" height="3" fill="#f4924f"/>
<line x1="542.5" y1="96.3" x2="542.5" y2="112.5" stroke="#f4924f" stroke-width="1"/>
<rect x="541.5" y="98.5" width="2" height="14" fill="#3c434c" stroke="#f4924f" stroke-width="1"/>
<line x1="547.5" y1="98.6" x2="547.5" y2="111" stroke="#f4924f" stroke-width="1"/>
<rect x="546" y="105" width="3" height="3" fill="#f4924f"/>
<line x1="551.5" y1="97.1" x2="551.5" y2="109.4" stroke="#f4924f" stroke-width="1"/>
<rect x="550" y="102" width="3" height="4" fill="#f4924f"/>
<line x1="555.5" y1="102.5" x2="555.5" y2="119.5" stroke="#f4924f" stroke-width="1"/>
<rect x="554.5" y="105.5" width="2" height="9" fill="#3c434c" stroke="#f4924f" stroke-width="1"/>
<line x1="560.5" y1="93.2" x2="560.5" y2="115.6" stroke="#f4924f" stroke-width="1"/>
<rect x="559" y="98" width="3" height="15" fill="#f4924f"/>
<line x1="565.5" y1="87.8" x2="565.5" y2="101.7" stroke="#f4924f" stroke-width="1"/>
<rect x="564" y="90" width="3" height="7" fill="#f4924f"/>
<line x1="569.5" y1="80.9" x2="569.5" y2="91.7" stroke="#f4924f" stroke-width="1"/>
<rect x="568.5" y="89.5" width="2" height="2" fill="#3c434c" stroke="#f4924f" stroke-width="1"/>
<line x1="573.5" y1="80.1" x2="573.5" y2="91.7" stroke="#f4924f" stroke-width="1"/>
<rect x="572" y="82" width="3" height="10" fill="#f4924f"/>
<line x1="577.5" y1="77" x2="577.5" y2="85.5" stroke="#f4924f" stroke-width="1"/>
<rect x="576" y="80" width="3" height="3" fill="#f4924f"/>
<line x1="582.5" y1="76.3" x2="582.5" y2="89.4" stroke="#f4924f" stroke-width="1"/>
<rect x="581.5" y="81.5" width="2" height="6" fill="#3c434c" stroke="#f4924f" stroke-width="1"/>
<line x1="586.5" y1="85.5" x2="586.5" y2="97.9" stroke="#f4924f" stroke-width="1"/>
<rect x="585.5" y="86.5" width="2" height="10" fill="#3c434c" stroke="#f4924f" stroke-width="1"/>
<line x1="591.5" y1="83.2" x2="591.5" y2="98.6" stroke="#f4924f" stroke-width="1"/>
<rect x="590" y="95" width="3" height="3" fill="#f4924f"/>
<line x1="596.5" y1="86.3" x2="596.5" y2="96.3" stroke="#f4924f" stroke-width="1"/>
<rect x="595" y="94" width="3" height="3" fill="#f4924f"/>
<line x1="600.5" y1="85.5" x2="600.5" y2="95.5" stroke="#f4924f" stroke-width="1"/>
<rect x="599" y="90" width="3" height="3" fill="#f4924f"/>
<line x1="604.5" y1="83.2" x2="604.5" y2="93.2" stroke="#f4924f" stroke-width="1"/>
<rect x="603.5" y="89.5" width="2" height="3" fill="#3c434c" stroke="#f4924f" stroke-width="1"/>
<line x1="609.5" y1="78.6" x2="609.5" y2="94.8" stroke="#f4924f" stroke-width="1"/>
<rect x="608" y="84" width="3" height="9" fill="#f4924f"/>
<line x1="614.5" y1="79.4" x2="614.5" y2="90.9" stroke="#f4924f" stroke-width="1"/>
<rect x="613.5" y="83.5" width="2" height="7" fill="#3c434c" stroke="#f4924f" stroke-width="1"/>
<line x1="617.5" y1="87" x2="617.5" y2="111" stroke="#f4924f" stroke-width="1"/>
<rect x="616.5" y="89.5" width="2" height="7" fill="#3c434c" stroke="#f4924f" stroke-width="1"/>
<line x1="622.5" y1="81.7" x2="622.5" y2="96.3" stroke="#f4924f" stroke-width="1"/>
<rect x="621" y="86" width="3" height="9" fill="#f4924f"/>
<line x1="626.5" y1="79.4" x2="626.5" y2="90.2" stroke="#f4924f" stroke-width="1"/>
<rect x="625" y="84" width="3" height="3" fill="#f4924f"/>
<line x1="631.5" y1="77" x2="631.5" y2="90.2" stroke="#f4924f" stroke-width="1"/>
<rect x="630" y="81" width="3" height="5" fill="#f4924f"/>
<line x1="635.5" y1="63.1" x2="635.5" y2="84" stroke="#f4924f" stroke-width="1"/>
<rect x="634" y="65" width="3" height="15" fill="#f4924f"/>
<line x1="640.5" y1="49.3" x2="640.5" y2="66.2" stroke="#f4924f" stroke-width="1"/>
<rect x="639" y="57" width="3" height="6" fill="#f4924f"/>
<line x1="645.5" y1="47" x2="645.5" y2="64" stroke="#f4924f" stroke-width="1"/>
<rect x="644" y="50" width="3" height="3" fill="#f4924f"/>
<line x1="650.5" y1="49" x2="650.5" y2="87.2" stroke="#f4924f" stroke-width="1"/>
<rect x="649.5" y="54.5" width="2" height="31" fill="#3c434c" stroke="#f4924f" stroke-width="1"/>
<line x1="654.5" y1="75" x2="654.5" y2="96.2" stroke="#f4924f" stroke-width="1"/>
<rect x="653" y="86" width="3" height="3" fill="#f4924f"/>
<line x1="658.5" y1="75" x2="658.5" y2="94.2" stroke="#f4924f" stroke-width="1"/>
<rect x="657" y="87" width="3" height="3" fill="#f4924f"/>
<line x1="662.5" y1="87.2" x2="662.5" y2="101.2" stroke="#f4924f" stroke-width="1"/>
<rect x="661.5" y="89.5" width="2" height="4" fill="#3c434c" stroke="#f4924f" stroke-width="1"/>
<line x1="668.5" y1="90.2" x2="668.5" y2="118.3" stroke="#f4924f" stroke-width="1"/>
<rect x="667.5" y="92.5" width="2" height="16" fill="#3c434c" stroke="#f4924f" stroke-width="1"/>
<line x1="671.5" y1="94.2" x2="671.5" y2="120.3" stroke="#f4924f" stroke-width="1"/>
<rect x="670.5" y="108.5" width="2" height="11" fill="#3c434c" stroke="#f4924f" stroke-width="1"/>
<line x1="677.5" y1="117.3" x2="677.5" y2="132.4" stroke="#f4924f" stroke-width="1"/>
<rect x="676.5" y="119.5" width="2" height="12" fill="#3c434c" stroke="#f4924f" stroke-width="1"/>
<line x1="681.5" y1="113.3" x2="681.5" y2="132.4" stroke="#f4924f" stroke-width="1"/>
<rect x="680" y="119" width="3" height="13" fill="#f4924f"/>
<line x1="686.5" y1="115.3" x2="686.5" y2="128.4" stroke="#f4924f" stroke-width="1"/>
<rect x="685.5" y="119.5" width="2" height="6" fill="#3c434c" stroke="#f4924f" stroke-width="1"/>
<line x1="690.5" y1="117.3" x2="690.5" y2="139.4" stroke="#f4924f" stroke-width="1"/>
<rect x="689.5" y="125.5" width="2" height="12" fill="#3c434c" stroke="#f4924f" stroke-width="1"/>
<line x1="693.5" y1="133.4" x2="693.5" y2="148.4" stroke="#f4924f" stroke-width="1"/>
<rect x="692.5" y="136.5" width="2" height="6" fill="#3c434c" stroke="#f4924f" stroke-width="1"/>
<line x1="698.5" y1="129.4" x2="698.5" y2="149.4" stroke="#f4924f" stroke-width="1"/>
<rect x="697" y="138" width="3" height="3" fill="#f4924f"/>
<line x1="703.5" y1="132.4" x2="703.5" y2="146.4" stroke="#f4924f" stroke-width="1"/>
<rect x="702.5" y="137.5" width="2" height="4" fill="#3c434c" stroke="#f4924f" stroke-width="1"/>
<line x1="707.5" y1="137.4" x2="707.5" y2="145.4" stroke="#f4924f" stroke-width="1"/>
<rect x="706" y="141" width="3" height="3" fill="#f4924f"/>
<line x1="712.5" y1="141.4" x2="712.5" y2="154.5" stroke="#f4924f" stroke-width="1"/>
<rect x="711.5" y="143.5" width="2" height="11" fill="#3c434c" stroke="#f4924f" stroke-width="1"/>
<line x1="716.5" y1="146.4" x2="716.5" y2="162.5" stroke="#f4924f" stroke-width="1"/>
<rect x="715.5" y="152.5" width="2" height="10" fill="#3c434c" stroke="#f4924f" stroke-width="1"/>
<line x1="720.5" y1="142.4" x2="720.5" y2="165.5" stroke="#f4924f" stroke-width="1"/>
<rect x="719" y="148" width="3" height="13" fill="#f4924f"/>
<line x1="725.5" y1="123.3" x2="725.5" y2="152.5" stroke="#f4924f" stroke-width="1"/>
<rect x="724" y="126" width="3" height="21" fill="#f4924f"/>
<line x1="729.5" y1="116.3" x2="729.5" y2="125.3" stroke="#f4924f" stroke-width="1"/>
<rect x="728" y="120" width="3" height="4" fill="#f4924f"/>
<line x1="734.5" y1="117.3" x2="734.5" y2="123.3" stroke="#f4924f" stroke-width="1"/>
<rect x="733.5" y="119.5" width="2" height="3" fill="#3c434c" stroke="#f4924f" stroke-width="1"/>
<line x1="738.5" y1="116.3" x2="738.5" y2="124.3" stroke="#f4924f" stroke-width="1"/>
<rect x="737" y="120" width="3" height="3" fill="#f4924f"/>
<line x1="743.5" y1="110.3" x2="743.5" y2="127.3" stroke="#f4924f" stroke-width="1"/>
<rect x="742.5" y="115.5" width="2" height="8" fill="#3c434c" stroke="#f4924f" stroke-width="1"/>
<line x1="748.5" y1="107" x2="748.5" y2="134.8" stroke="#f4924f" stroke-width="1"/>
<rect x="747.5" y="126.5" width="2" height="8" fill="#3c434c" stroke="#f4924f" stroke-width="1"/>
<line x1="752.5" y1="123.7" x2="752.5" y2="141.3" stroke="#f4924f" stroke-width="1"/>
<rect x="751" y="129" width="3" height="4" fill="#f4924f"/>
<line x1="756.5" y1="125.6" x2="756.5" y2="133.9" stroke="#f4924f" stroke-width="1"/>
<rect x="755.5" y="127.5" width="2" height="6" fill="#3c434c" stroke="#f4924f" stroke-width="1"/>
<line x1="761.5" y1="129.3" x2="761.5" y2="142.2" stroke="#f4924f" stroke-width="1"/>
<rect x="760.5" y="132.5" width="2" height="3" fill="#3c434c" stroke="#f4924f" stroke-width="1"/>
<line x1="765.5" y1="131.1" x2="765.5" y2="141.3" stroke="#f4924f" stroke-width="1"/>
<rect x="764.5" y="134.5" width="2" height="3" fill="#3c434c" stroke="#f4924f" stroke-width="1"/>
<line x1="770.5" y1="131.1" x2="770.5" y2="145.9" stroke="#f4924f" stroke-width="1"/>
<rect x="769.5" y="136.5" width="2" height="7" fill="#3c434c" stroke="#f4924f" stroke-width="1"/>
<line x1="774.5" y1="138.5" x2="774.5" y2="149.6" stroke="#f4924f" stroke-width="1"/>
<rect x="773.5" y="142.5" width="2" height="6" fill="#3c434c" stroke="#f4924f" stroke-width="1"/>
<line x1="779.5" y1="134.8" x2="779.5" y2="151.5" stroke="#f4924f" stroke-width="1"/>
<rect x="778" y="141" width="3" height="7" fill="#f4924f"/>
<line x1="783.5" y1="137.6" x2="783.5" y2="179.3" stroke="#f4924f" stroke-width="1"/>
<rect x="782.5" y="140.5" width="2" height="35" fill="#3c434c" stroke="#f4924f" stroke-width="1"/>
<line x1="787.5" y1="170" x2="787.5" y2="183" stroke="#f4924f" stroke-width="1"/>
<rect x="786.5" y="175.5" width="2" height="2" fill="#3c434c" stroke="#f4924f" stroke-width="1"/>
<line x1="792.5" y1="175.6" x2="792.5" y2="184.8" stroke="#f4924f" stroke-width="1"/>
<rect x="791.5" y="176.5" width="2" height="6" fill="#3c434c" stroke="#f4924f" stroke-width="1"/>
<line x1="797.5" y1="178.3" x2="797.5" y2="202.4" stroke="#f4924f" stroke-width="1"/>
<rect x="796.5" y="182.5" width="2" height="14" fill="#3c434c" stroke="#f4924f" stroke-width="1"/>
<line x1="801.5" y1="187.6" x2="801.5" y2="198.7" stroke="#f4924f" stroke-width="1"/>
<rect x="800" y="192" width="3" height="5" fill="#f4924f"/>
<line x1="806.5" y1="186" x2="806.5" y2="210.7" stroke="#f4924f" stroke-width="1"/>
<rect x="805.5" y="191.5" width="2" height="12" fill="#3c434c" stroke="#f4924f" stroke-width="1"/>
<line x1="810.5" y1="196.2" x2="810.5" y2="204.9" stroke="#f4924f" stroke-width="1"/>
<rect x="809" y="198" width="3" height="4" fill="#f4924f"/>
<line x1="815.5" y1="192.3" x2="815.5" y2="202" stroke="#f4924f" stroke-width="1"/>
<rect x="814" y="196" width="3" height="4" fill="#f4924f"/>
<line x1="819.5" y1="194.3" x2="819.5" y2="209.7" stroke="#f4924f" stroke-width="1"/>
<rect x="818.5" y="196.5" width="2" height="13" fill="#3c434c" stroke="#f4924f" stroke-width="1"/>
<line x1="823.5" y1="200" x2="823.5" y2="220.3" stroke="#f4924f" stroke-width="1"/>
<rect x="822.5" y="207.5" width="2" height="12" fill="#3c434c" stroke="#f4924f" stroke-width="1"/>
<line x1="828.5" y1="217.4" x2="828.5" y2="228" stroke="#f4924f" stroke-width="1"/>
<rect x="827.5" y="219.5" width="2" height="8" fill="#3c434c" stroke="#f4924f" stroke-width="1"/>
<line x1="832.5" y1="212.6" x2="832.5" y2="233.8" stroke="#f4924f" stroke-width="1"/>
<rect x="831.5" y="226.5" width="2" height="7" fill="#3c434c" stroke="#f4924f" stroke-width="1"/>
<line x1="837.5" y1="224.2" x2="837.5" y2="235.7" stroke="#f4924f" stroke-width="1"/>
<rect x="836.5" y="232.5" width="2" height="2" fill="#3c434c" stroke="#f4924f" stroke-width="1"/>
<line x1="841.5" y1="229" x2="841.5" y2="237.7" stroke="#f4924f" stroke-width="1"/>
<rect x="840" y="234" width="3" height="3" fill="#f4924f"/>
<line x1="845.5" y1="223.2" x2="845.5" y2="238.6" stroke="#f4924f" stroke-width="1"/>
<rect x="844" y="229" width="3" height="6" fill="#f4924f"/>
<line x1="850.5" y1="208.7" x2="850.5" y2="231" stroke="#f4924f" stroke-width="1"/>
<rect x="849" y="211" width="3" height="18" fill="#f4924f"/>
<line x1="855.5" y1="200" x2="855.5" y2="215.5" stroke="#f4924f" stroke-width="1"/>
<rect x="854.5" y="210.5" width="2" height="4" fill="#3c434c" stroke="#f4924f" stroke-width="1"/>
<line x1="859.5" y1="203" x2="859.5" y2="216.5" stroke="#f4924f" stroke-width="1"/>
<rect x="858" y="208" width="3" height="7" fill="#f4924f"/>
</g>
<rect x="11.5" y="38.5" width="876" height="211" fill="none" stroke="#a9bac9" stroke-width="1"/>
<rect x="11" y="38" width="31" height="22" fill="#f2f2f2"/><rect x="11" y="38" width="31" height="4" fill="#cfcfcf"/>
<rect x="15.5" y="46.5" width="9" height="9" rx="1.5" fill="url(#sqr)" stroke="#8a1a1a"/>
<rect x="28.5" y="46.5" width="9" height="9" rx="1.5" fill="url(#sqb)" stroke="#1a4a8a"/>
<clipPath id="leg"><rect x="42" y="38" width="300" height="21"/></clipPath>
<rect x="42" y="40" width="244" height="13" fill="#3c434c"/>
<text x="13" y="50" font-size="11" fill="#e01818" clip-path="url(#leg)" textLength="134" lengthAdjust="spacingAndGlyphs">Exponential_Moving_Average</text>
<text x="151" y="50" font-size="11" fill="#1a1ae0" textLength="133" lengthAdjust="spacingAndGlyphs">Exponential_Moving_Average</text>
<line x1="888" y1="68.5" x2="893" y2="68.5" stroke="#a9bac9"/>
<text x="895" y="75" font-size="11" fill="#ffffff" stroke="#ffffff" stroke-width="0.25" textLength="32" lengthAdjust="spacingAndGlyphs">1.2200</text>
<line x1="888" y1="115.5" x2="893" y2="115.5" stroke="#a9bac9"/>
<text x="895" y="122" font-size="11" fill="#ffffff" stroke="#ffffff" stroke-width="0.25" textLength="32" lengthAdjust="spacingAndGlyphs">1.2100</text>
<line x1="888" y1="161.5" x2="893" y2="161.5" stroke="#a9bac9"/>
<text x="895" y="168" font-size="11" fill="#ffffff" stroke="#ffffff" stroke-width="0.25" textLength="32" lengthAdjust="spacingAndGlyphs">1.2000</text>
<rect x="887" y="196" width="48" height="21" fill="#ffffff"/>
<text x="896" y="210" font-size="11" fill="#2a2a4a" textLength="32" lengthAdjust="spacingAndGlyphs">1.1905</text>
<line x1="36.5" y1="256" x2="36.5" y2="322" stroke="#79838d" stroke-width="1" stroke-dasharray="3,3"/>
<line x1="63.5" y1="256" x2="63.5" y2="322" stroke="#79838d" stroke-width="1" stroke-dasharray="3,3"/>
<line x1="90.5" y1="256" x2="90.5" y2="322" stroke="#79838d" stroke-width="1" stroke-dasharray="3,3"/>
<line x1="117.5" y1="256" x2="117.5" y2="322" stroke="#79838d" stroke-width="1" stroke-dasharray="3,3"/>
<line x1="144.5" y1="256" x2="144.5" y2="322" stroke="#8796a5" stroke-width="1"/>
<line x1="170.5" y1="256" x2="170.5" y2="322" stroke="#79838d" stroke-width="1" stroke-dasharray="3,3"/>
<line x1="197.5" y1="256" x2="197.5" y2="322" stroke="#79838d" stroke-width="1" stroke-dasharray="3,3"/>
<line x1="224.5" y1="256" x2="224.5" y2="322" stroke="#79838d" stroke-width="1" stroke-dasharray="3,3"/>
<line x1="251.5" y1="256" x2="251.5" y2="322" stroke="#79838d" stroke-width="1" stroke-dasharray="3,3"/>
<line x1="278.5" y1="256" x2="278.5" y2="322" stroke="#79838d" stroke-width="1" stroke-dasharray="3,3"/>
<line x1="304.5" y1="256" x2="304.5" y2="322" stroke="#79838d" stroke-width="1" stroke-dasharray="3,3"/>
<line x1="331.5" y1="256" x2="331.5" y2="322" stroke="#79838d" stroke-width="1" stroke-dasharray="3,3"/>
<line x1="358.5" y1="256" x2="358.5" y2="322" stroke="#79838d" stroke-width="1" stroke-dasharray="3,3"/>
<line x1="385.5" y1="256" x2="385.5" y2="322" stroke="#79838d" stroke-width="1" stroke-dasharray="3,3"/>
<line x1="412.5" y1="256" x2="412.5" y2="322" stroke="#79838d" stroke-width="1" stroke-dasharray="3,3"/>
<line x1="439.5" y1="256" x2="439.5" y2="322" stroke="#79838d" stroke-width="1" stroke-dasharray="3,3"/>
<line x1="465.5" y1="256" x2="465.5" y2="322" stroke="#79838d" stroke-width="1" stroke-dasharray="3,3"/>
<line x1="492.5" y1="256" x2="492.5" y2="322" stroke="#79838d" stroke-width="1" stroke-dasharray="3,3"/>
<line x1="519.5" y1="256" x2="519.5" y2="322" stroke="#79838d" stroke-width="1" stroke-dasharray="3,3"/>
<line x1="546.5" y1="256" x2="546.5" y2="322" stroke="#79838d" stroke-width="1" stroke-dasharray="3,3"/>
<line x1="573.5" y1="256" x2="573.5" y2="322" stroke="#79838d" stroke-width="1" stroke-dasharray="3,3"/>
<line x1="600.5" y1="256" x2="600.5" y2="322" stroke="#79838d" stroke-width="1" stroke-dasharray="3,3"/>
<line x1="626.5" y1="256" x2="626.5" y2="322" stroke="#79838d" stroke-width="1" stroke-dasharray="3,3"/>
<line x1="653.5" y1="256" x2="653.5" y2="322" stroke="#79838d" stroke-width="1" stroke-dasharray="3,3"/>
<line x1="680.5" y1="256" x2="680.5" y2="322" stroke="#8796a5" stroke-width="1"/>
<line x1="707.5" y1="256" x2="707.5" y2="322" stroke="#79838d" stroke-width="1" stroke-dasharray="3,3"/>
<line x1="734.5" y1="256" x2="734.5" y2="322" stroke="#79838d" stroke-width="1" stroke-dasharray="3,3"/>
<line x1="761.5" y1="256" x2="761.5" y2="322" stroke="#79838d" stroke-width="1" stroke-dasharray="3,3"/>
<line x1="787.5" y1="256" x2="787.5" y2="322" stroke="#79838d" stroke-width="1" stroke-dasharray="3,3"/>
<line x1="814.5" y1="256" x2="814.5" y2="322" stroke="#79838d" stroke-width="1" stroke-dasharray="3,3"/>
<line x1="841.5" y1="256" x2="841.5" y2="322" stroke="#79838d" stroke-width="1" stroke-dasharray="3,3"/>
<line x1="868.5" y1="256" x2="868.5" y2="322" stroke="#79838d" stroke-width="1" stroke-dasharray="3,3"/>
<line x1="11" y1="277.5" x2="887" y2="277.5" stroke="#79838d" stroke-width="1" stroke-dasharray="3,3"/>
<line x1="11" y1="313.5" x2="887" y2="313.5" stroke="#79838d" stroke-width="1" stroke-dasharray="3,3"/>
<g clip-path="url(#cmacd)">
<rect x="13" y="276.5" width="2" height="1" fill="#b32a2a"/>
<rect x="17" y="276.4" width="2" height="1.1" fill="#b32a2a"/>
<rect x="22" y="276.5" width="2" height="1" fill="#b32a2a"/>
<rect x="26" y="277.5" width="2" height="1" fill="#b32a2a"/>
<rect x="32" y="277.5" width="2" height="2" fill="#b32a2a"/>
<rect x="36" y="277.5" width="2" height="3.3" fill="#b32a2a"/>
<rect x="40" y="277.5" width="2" height="3.5" fill="#b32a2a"/>
<rect x="44" y="277.5" width="2" height="3.1" fill="#b32a2a"/>
<rect x="50" y="277.5" width="2" height="2.7" fill="#b32a2a"/>
<rect x="54" y="277.5" width="2" height="2.2" fill="#b32a2a"/>
<rect x="59" y="277.5" width="2" height="1.3" fill="#b32a2a"/>
<rect x="63" y="277.5" width="2" height="1" fill="#b32a2a"/>
<rect x="67" y="277.5" width="2" height="1" fill="#b32a2a"/>
<rect x="71" y="277.5" width="2" height="1" fill="#b32a2a"/>
<rect x="75" y="277.5" width="2" height="2.1" fill="#b32a2a"/>
<rect x="81" y="277.5" width="2" height="4.6" fill="#b32a2a"/>
<rect x="84" y="277.5" width="2" height="5.5" fill="#b32a2a"/>
<rect x="89" y="277.5" width="2" height="6.7" fill="#b32a2a"/>
<rect x="93" y="277.5" width="2" height="7.9" fill="#b32a2a"/>
<rect x="98" y="277.5" width="2" height="7.7" fill="#b32a2a"/>
<rect x="102" y="277.5" width="2" height="6.1" fill="#b32a2a"/>
<rect x="108" y="277.5" width="2" height="4.1" fill="#b32a2a"/>
<rect x="112" y="277.5" width="2" height="3" fill="#b32a2a"/>
<rect x="116" y="277.5" width="2" height="2.4" fill="#b32a2a"/>
<rect x="121" y="277.5" width="2" height="2.4" fill="#b32a2a"/>
<rect x="126" y="277.5" width="2" height="2.2" fill="#b32a2a"/>
<rect x="129" y="277.5" width="2" height="1.3" fill="#b32a2a"/>
<rect x="134" y="277.5" width="2" height="1" fill="#b32a2a"/>
<rect x="139" y="276.5" width="2" height="1" fill="#b32a2a"/>
<rect x="144" y="275.6" width="2" height="1.9" fill="#b32a2a"/>
<rect x="148" y="275.7" width="2" height="1.8" fill="#b32a2a"/>
<rect x="152" y="276.5" width="2" height="1" fill="#b32a2a"/>
<rect x="156" y="277.5" width="2" height="2.7" fill="#b32a2a"/>
<rect x="161" y="277.5" width="2" height="5.1" fill="#b32a2a"/>
<rect x="166" y="277.5" width="2" height="6.9" fill="#b32a2a"/>
<rect x="170" y="277.5" width="2" height="6.7" fill="#b32a2a"/>
<rect x="175" y="277.5" width="2" height="5.8" fill="#b32a2a"/>
<rect x="179" y="277.5" width="2" height="5" fill="#b32a2a"/>
<rect x="183" y="277.5" width="2" height="6.6" fill="#b32a2a"/>
<rect x="188" y="277.5" width="2" height="8.2" fill="#b32a2a"/>
<rect x="192" y="277.5" width="2" height="8.3" fill="#b32a2a"/>
<rect x="196" y="277.5" width="2" height="7.3" fill="#b32a2a"/>
<rect x="201" y="277.5" width="2" height="6.4" fill="#b32a2a"/>
<rect x="205" y="277.5" width="2" height="6" fill="#b32a2a"/>
<rect x="210" y="277.5" width="2" height="6.4" fill="#b32a2a"/>
<rect x="214" y="277.5" width="2" height="6.1" fill="#b32a2a"/>
<rect x="219" y="277.5" width="2" height="3.4" fill="#b32a2a"/>
<rect x="223" y="277.5" width="2" height="3.2" fill="#b32a2a"/>
<rect x="227" y="277.5" width="2" height="2.4" fill="#b32a2a"/>
<rect x="232" y="277.5" width="2" height="3.4" fill="#b32a2a"/>
<rect x="236" y="277.5" width="2" height="4.5" fill="#b32a2a"/>
<rect x="241" y="277.5" width="2" height="5.2" fill="#b32a2a"/>
<rect x="245" y="277.5" width="2" height="5.2" fill="#b32a2a"/>
<rect x="250" y="277.5" width="2" height="4.6" fill="#b32a2a"/>
<rect x="254" y="277.5" width="2" height="3.7" fill="#b32a2a"/>
<rect x="259" y="277.5" width="2" height="2" fill="#b32a2a"/>
<rect x="264" y="277.5" width="2" height="1" fill="#b32a2a"/>
<rect x="268" y="272.6" width="2" height="4.9" fill="#b32a2a"/>
<rect x="272" y="271.1" width="2" height="6.4" fill="#b32a2a"/>
<rect x="277" y="270.2" width="2" height="7.3" fill="#b32a2a"/>
<rect x="281" y="270.4" width="2" height="7.1" fill="#b32a2a"/>
<rect x="286" y="270.3" width="2" height="7.2" fill="#b32a2a"/>
<rect x="291" y="270.2" width="2" height="7.3" fill="#b32a2a"/>
<rect x="296" y="269.8" width="2" height="7.7" fill="#b32a2a"/>
<rect x="300" y="271.3" width="2" height="6.2" fill="#b32a2a"/>
<rect x="304" y="272.2" width="2" height="5.3" fill="#b32a2a"/>
<rect x="309" y="270.7" width="2" height="6.8" fill="#b32a2a"/>
<rect x="313" y="271.3" width="2" height="6.2" fill="#b32a2a"/>
<rect x="318" y="269.5" width="2" height="8" fill="#b32a2a"/>
<rect x="322" y="269.5" width="2" height="8" fill="#b32a2a"/>
<rect x="326" y="269.5" width="2" height="8" fill="#b32a2a"/>
<rect x="331" y="269.5" width="2" height="8" fill="#b32a2a"/>
<rect x="336" y="269.5" width="2" height="8" fill="#b32a2a"/>
<rect x="339" y="269.5" width="2" height="8" fill="#b32a2a"/>
<rect x="344" y="271" width="2" height="6.5" fill="#b32a2a"/>
<rect x="349" y="271.9" width="2" height="5.6" fill="#b32a2a"/>
<rect x="354" y="273" width="2" height="4.5" fill="#b32a2a"/>
<rect x="357" y="274.4" width="2" height="3.1" fill="#b32a2a"/>
<rect x="362" y="275.9" width="2" height="1.6" fill="#b32a2a"/>
<rect x="367" y="276.5" width="2" height="1" fill="#b32a2a"/>
<rect x="371" y="277.5" width="2" height="1" fill="#b32a2a"/>
<rect x="376" y="277.5" width="2" height="1" fill="#b32a2a"/>
<rect x="380" y="277.5" width="2" height="1.4" fill="#b32a2a"/>
<rect x="385" y="277.5" width="2" height="1.8" fill="#b32a2a"/>
<rect x="389" y="277.5" width="2" height="2.9" fill="#b32a2a"/>
<rect x="393" y="277.5" width="2" height="3.9" fill="#b32a2a"/>
<rect x="398" y="277.5" width="2" height="4.5" fill="#b32a2a"/>
<rect x="402" y="277.5" width="2" height="4.6" fill="#b32a2a"/>
<rect x="407" y="277.5" width="2" height="4.6" fill="#b32a2a"/>
<rect x="411" y="277.5" width="2" height="5.3" fill="#b32a2a"/>
<rect x="416" y="277.5" width="2" height="5" fill="#b32a2a"/>
<rect x="420" y="277.5" width="2" height="3.8" fill="#b32a2a"/>
<rect x="424" y="277.5" width="2" height="3.6" fill="#b32a2a"/>
<rect x="429" y="277.5" width="2" height="3.6" fill="#b32a2a"/>
<rect x="433" y="277.5" width="2" height="2.8" fill="#b32a2a"/>
<rect x="438" y="277.5" width="2" height="2.6" fill="#b32a2a"/>
<rect x="442" y="277.5" width="2" height="2.2" fill="#b32a2a"/>
<rect x="447" y="277.5" width="2" height="1.3" fill="#b32a2a"/>
<rect x="452" y="277.5" width="2" height="1" fill="#b32a2a"/>
<rect x="457" y="277.5" width="2" height="1.7" fill="#b32a2a"/>
<rect x="460" y="277.5" width="2" height="3.9" fill="#b32a2a"/>
<rect x="465" y="277.5" width="2" height="4.7" fill="#b32a2a"/>
<rect x="469" y="277.5" width="2" height="6.1" fill="#b32a2a"/>
<rect x="473" y="277.5" width="2" height="7.2" fill="#b32a2a"/>
<rect x="479" y="277.5" width="2" height="8.9" fill="#b32a2a"/>
<rect x="483" y="277.5" width="2" height="9.7" fill="#b32a2a"/>
<rect x="488" y="277.5" width="2" height="10" fill="#b32a2a"/>
<rect x="491" y="277.5" width="2" height="9.4" fill="#b32a2a"/>
<rect x="496" y="277.5" width="2" height="9.2" fill="#b32a2a"/>
<rect x="501" y="277.5" width="2" height="7.9" fill="#b32a2a"/>
<rect x="506" y="277.5" width="2" height="5.8" fill="#b32a2a"/>
<rect x="510" y="277.5" width="2" height="4.5" fill="#b32a2a"/>
<rect x="515" y="277.5" width="2" height="3.1" fill="#b32a2a"/>
<rect x="519" y="277.5" width="2" height="2.1" fill="#b32a2a"/>
<rect x="523" y="277.5" width="2" height="1" fill="#b32a2a"/>
<rect x="528" y="276.5" width="2" height="1" fill="#b32a2a"/>
<rect x="533" y="276" width="2" height="1.5" fill="#b32a2a"/>
<rect x="536" y="274" width="2" height="3.5" fill="#b32a2a"/>
<rect x="541" y="272.1" width="2" height="5.4" fill="#b32a2a"/>
<rect x="546" y="272.1" width="2" height="5.4" fill="#b32a2a"/>
<rect x="550" y="274.3" width="2" height="3.2" fill="#b32a2a"/>
<rect x="554" y="275.3" width="2" height="2.2" fill="#b32a2a"/>
<rect x="559" y="274.5" width="2" height="3" fill="#b32a2a"/>
<rect x="564" y="273.6" width="2" height="3.9" fill="#b32a2a"/>
<rect x="568" y="272.6" width="2" height="4.9" fill="#b32a2a"/>
<rect x="572" y="273" width="2" height="4.5" fill="#b32a2a"/>
<rect x="576" y="273.1" width="2" height="4.4" fill="#b32a2a"/>
<rect x="581" y="273.1" width="2" height="4.4" fill="#b32a2a"/>
<rect x="585" y="273.7" width="2" height="3.8" fill="#b32a2a"/>
<rect x="590" y="275.1" width="2" height="2.4" fill="#b32a2a"/>
<rect x="595" y="276.5" width="2" height="1" fill="#b32a2a"/>
<rect x="599" y="277.5" width="2" height="1" fill="#b32a2a"/>
<rect x="603" y="277.5" width="2" height="1" fill="#b32a2a"/>
<rect x="608" y="277.5" width="2" height="1" fill="#b32a2a"/>
<rect x="613" y="277.5" width="2" height="1.6" fill="#b32a2a"/>
<rect x="616" y="277.5" width="2" height="2.2" fill="#b32a2a"/>
<rect x="621" y="277.5" width="2" height="2.5" fill="#b32a2a"/>
<rect x="625" y="277.5" width="2" height="2.5" fill="#b32a2a"/>
<rect x="630" y="277.5" width="2" height="1" fill="#b32a2a"/>
<rect x="634" y="276" width="2" height="1.5" fill="#b32a2a"/>
<rect x="639" y="274.2" width="2" height="3.3" fill="#b32a2a"/>
<rect x="644" y="273.6" width="2" height="3.9" fill="#b32a2a"/>
<rect x="649" y="275.3" width="2" height="2.2" fill="#b32a2a"/>
<rect x="653" y="276.5" width="2" height="1" fill="#b32a2a"/>
<rect x="657" y="277.5" width="2" height="2" fill="#b32a2a"/>
<rect x="661" y="277.5" width="2" height="4.2" fill="#b32a2a"/>
<rect x="667" y="277.5" width="2" height="6.4" fill="#b32a2a"/>
<rect x="670" y="277.5" width="2" height="7.7" fill="#b32a2a"/>
<rect x="676" y="277.5" width="2" height="10" fill="#b32a2a"/>
<rect x="680" y="277.5" width="2" height="10" fill="#b32a2a"/>
<rect x="685" y="277.5" width="2" height="10" fill="#b32a2a"/>
<rect x="689" y="277.5" width="2" height="10" fill="#b32a2a"/>
<rect x="692" y="277.5" width="2" height="10" fill="#b32a2a"/>
<rect x="697" y="277.5" width="2" height="10" fill="#b32a2a"/>
<rect x="702" y="277.5" width="2" height="10" fill="#b32a2a"/>
<rect x="706" y="277.5" width="2" height="10" fill="#b32a2a"/>
<rect x="711" y="277.5" width="2" height="10" fill="#b32a2a"/>
<rect x="715" y="277.5" width="2" height="10" fill="#b32a2a"/>
<rect x="719" y="277.5" width="2" height="9" fill="#b32a2a"/>
<rect x="724" y="277.5" width="2" height="4.9" fill="#b32a2a"/>
<rect x="728" y="277.5" width="2" height="1" fill="#b32a2a"/>
<rect x="733" y="275.1" width="2" height="2.4" fill="#b32a2a"/>
<rect x="737" y="274.2" width="2" height="3.3" fill="#b32a2a"/>
<rect x="742" y="273.7" width="2" height="3.8" fill="#b32a2a"/>
<rect x="747" y="273.8" width="2" height="3.7" fill="#b32a2a"/>
<rect x="751" y="274" width="2" height="3.5" fill="#b32a2a"/>
<rect x="755" y="274.7" width="2" height="2.8" fill="#b32a2a"/>
<rect x="760" y="274.9" width="2" height="2.6" fill="#b32a2a"/>
<rect x="764" y="275.8" width="2" height="1.7" fill="#b32a2a"/>
<rect x="769" y="276.5" width="2" height="1" fill="#b32a2a"/>
<rect x="773" y="277.5" width="2" height="1" fill="#b32a2a"/>
<rect x="778" y="277.5" width="2" height="1.5" fill="#b32a2a"/>
<rect x="782" y="277.5" width="2" height="4.6" fill="#b32a2a"/>
<rect x="786" y="277.5" width="2" height="5.7" fill="#b32a2a"/>
<rect x="791" y="277.5" width="2" height="7.3" fill="#b32a2a"/>
<rect x="796" y="277.5" width="2" height="8.8" fill="#b32a2a"/>
<rect x="800" y="277.5" width="2" height="8.6" fill="#b32a2a"/>
<rect x="805" y="277.5" width="2" height="8.4" fill="#b32a2a"/>
<rect x="809" y="277.5" width="2" height="8.8" fill="#b32a2a"/>
<rect x="814" y="277.5" width="2" height="9" fill="#b32a2a"/>
<rect x="818" y="277.5" width="2" height="6.7" fill="#b32a2a"/>
<rect x="822" y="277.5" width="2" height="5.7" fill="#b32a2a"/>
<rect x="827" y="277.5" width="2" height="5.6" fill="#b32a2a"/>
<rect x="831" y="277.5" width="2" height="7.2" fill="#b32a2a"/>
<rect x="836" y="277.5" width="2" height="7.1" fill="#b32a2a"/>
<rect x="840" y="277.5" width="2" height="6.9" fill="#b32a2a"/>
<rect x="844" y="277.5" width="2" height="5.9" fill="#b32a2a"/>
<rect x="849" y="277.5" width="2" height="5" fill="#b32a2a"/>
<rect x="854" y="277.5" width="2" height="3.2" fill="#b32a2a"/>
<rect x="858" y="275.7" width="2" height="1.8" fill="#b32a2a"/>
<polyline points="11,268.1 23,269 38,274.8 53,274.8 63,273.9 72,273.9 80,278.6 90,284.6 95,286.3 98,287.4 105,287.4 110,286.3 115,285.1 125,285.1 130,284.6 135,283.4 140,281.2 144,279.5 148,278.9 152,279.5 156,281.8 160,284 165,286.3 170,288 180,288.5 185,290.8 190,293.6 195,294.7 205,294.7 210,295.6 215,296.4 220,295.1 227,295.1 232,295.6 237,298 245,299.9 252,301.3 258,299.4 265,297.5 272,290.3 280,287 288,283.7 296,280.8 305,278.4 310,276.5 315,273.1 320,268.8 325,266 330,263.1 335,261.6 340,259.2 348,258.5 357,258.5 360,259.2 370,260.6 380,261.6 385,262.5 392,264.4 400,266.8 410,267.8 414,268.7 425,268.7 440,268.7 445,268.4 452,266.9 456,267.9 460,270.3 465,273.1 470,275.5 475,277.9 480,281.3 485,284.6 490,287 495,288.4 500,290.3 505,290.3 510,288.9 515,287.5 520,286 525,284.6 530,283.7 533,282.7 537,279.4 543,275.5 549,274.6 556,272.9 560,271.2 566,268.9 572,266.7 578,265.3 583,264.4 588,264.4 592,265.3 597,266.7 605,266.7 613,267.8 620,268.7 627,268.7 632,266.7 638,263.3 643,260.8 647,260.5 652,262.2 657,265 662,267.8 667,271.2 672,275.7 677,281.3 681,284.9 687,288.8 694,293.6 700,295.3 706,296.7 710,299.2 715,302.3 720,302.3 725,299.9 730,295 735,291.9 740,290.1 747,288.4 752,287.4 755,287.2 765,287.2 770,288.6 775,289.6 780,290.1 785,293.4 790,296.7 795,299.6 800,303 805,305.3 810,308.2 815,309.2 820,309.2 825,310.6 830,313.5 835,315.8 840,317.8 845,318.7 850,318.2 855,315.8 858,312.5 860,310.1 862,310.6" fill="none" stroke="#10106a" stroke-width="1.25" stroke-linejoin="round"/>
<rect x="12.8" y="267.9" width="2.7" height="2.7" fill="#e82222" transform="rotate(45 14.2 269.3)"/>
<rect x="17.1" y="268.3" width="2.7" height="2.7" fill="#e82222" transform="rotate(45 18.5 269.7)"/>
<rect x="22" y="268.8" width="2.7" height="2.7" fill="#e82222" transform="rotate(45 23.4 270.1)"/>
<rect x="26" y="269.1" width="2.7" height="2.7" fill="#e82222" transform="rotate(45 27.4 270.5)"/>
<rect x="31.4" y="269.6" width="2.7" height="2.7" fill="#e82222" transform="rotate(45 32.7 270.9)"/>
<rect x="35.2" y="269.9" width="2.7" height="2.7" fill="#e82222" transform="rotate(45 36.6 271.3)"/>
<rect x="39.9" y="270.3" width="2.7" height="2.7" fill="#e82222" transform="rotate(45 41.3 271.7)"/>
<rect x="43.9" y="270.6" width="2.7" height="2.7" fill="#e82222" transform="rotate(45 45.3 272)"/>
<rect x="49.2" y="271" width="2.7" height="2.7" fill="#e82222" transform="rotate(45 50.6 272.4)"/>
<rect x="53.4" y="271.3" width="2.7" height="2.7" fill="#e82222" transform="rotate(45 54.7 272.7)"/>
<rect x="58.2" y="271.7" width="2.7" height="2.7" fill="#e82222" transform="rotate(45 59.6 273)"/>
<rect x="62.2" y="272" width="2.7" height="2.7" fill="#e82222" transform="rotate(45 63.6 273.4)"/>
<rect x="67.2" y="272.4" width="2.7" height="2.7" fill="#e82222" transform="rotate(45 68.5 273.8)"/>
<rect x="71.1" y="272.8" width="2.7" height="2.7" fill="#e82222" transform="rotate(45 72.4 274.1)"/>
<rect x="75" y="273.1" width="2.7" height="2.7" fill="#e82222" transform="rotate(45 76.3 274.5)"/>
<rect x="80.2" y="274" width="2.7" height="2.7" fill="#e82222" transform="rotate(45 81.5 275.4)"/>
<rect x="83.9" y="275.4" width="2.7" height="2.7" fill="#e82222" transform="rotate(45 85.2 276.7)"/>
<rect x="88.8" y="277.2" width="2.7" height="2.7" fill="#e82222" transform="rotate(45 90.1 278.6)"/>
<rect x="93.1" y="277.5" width="2.7" height="2.7" fill="#e82222" transform="rotate(45 94.4 278.9)"/>
<rect x="98.1" y="279" width="2.7" height="2.7" fill="#e82222" transform="rotate(45 99.4 280.4)"/>
<rect x="101.7" y="280.5" width="2.7" height="2.7" fill="#e82222" transform="rotate(45 103 281.9)"/>
<rect x="107.2" y="281.5" width="2.7" height="2.7" fill="#e82222" transform="rotate(45 108.6 282.9)"/>
<rect x="111.4" y="281.5" width="2.7" height="2.7" fill="#e82222" transform="rotate(45 112.7 282.9)"/>
<rect x="116" y="281.5" width="2.7" height="2.7" fill="#e82222" transform="rotate(45 117.3 282.9)"/>
<rect x="120.2" y="281.5" width="2.7" height="2.7" fill="#e82222" transform="rotate(45 121.5 282.9)"/>
<rect x="125.2" y="281.5" width="2.7" height="2.7" fill="#e82222" transform="rotate(45 126.6 282.9)"/>
<rect x="129.1" y="282" width="2.7" height="2.7" fill="#e82222" transform="rotate(45 130.4 283.3)"/>
<rect x="134.1" y="281.5" width="2.7" height="2.7" fill="#e82222" transform="rotate(45 135.4 282.9)"/>
<rect x="138.2" y="281" width="2.7" height="2.7" fill="#e82222" transform="rotate(45 139.5 282.4)"/>
<rect x="143.2" y="279.8" width="2.7" height="2.7" fill="#e82222" transform="rotate(45 144.6 281.1)"/>
<rect x="147.5" y="279.3" width="2.7" height="2.7" fill="#e82222" transform="rotate(45 148.8 280.6)"/>
<rect x="151.5" y="278.8" width="2.7" height="2.7" fill="#e82222" transform="rotate(45 152.8 280.1)"/>
<rect x="156.1" y="278.8" width="2.7" height="2.7" fill="#e82222" transform="rotate(45 157.4 280.1)"/>
<rect x="160.2" y="278.8" width="2.7" height="2.7" fill="#e82222" transform="rotate(45 161.6 280.1)"/>
<rect x="165.3" y="279.2" width="2.7" height="2.7" fill="#e82222" transform="rotate(45 166.7 280.6)"/>
<rect x="169.2" y="280.6" width="2.7" height="2.7" fill="#e82222" transform="rotate(45 170.6 281.9)"/>
<rect x="174.2" y="281.7" width="2.7" height="2.7" fill="#e82222" transform="rotate(45 175.5 283)"/>
<rect x="178.3" y="282.6" width="2.7" height="2.7" fill="#e82222" transform="rotate(45 179.7 283.9)"/>
<rect x="183" y="283.2" width="2.7" height="2.7" fill="#e82222" transform="rotate(45 184.3 284.5)"/>
<rect x="187.2" y="284" width="2.7" height="2.7" fill="#e82222" transform="rotate(45 188.6 285.4)"/>
<rect x="191.8" y="285.4" width="2.7" height="2.7" fill="#e82222" transform="rotate(45 193.2 286.8)"/>
<rect x="196.1" y="286.7" width="2.7" height="2.7" fill="#e82222" transform="rotate(45 197.4 288.1)"/>
<rect x="200.8" y="287.5" width="2.7" height="2.7" fill="#e82222" transform="rotate(45 202.2 288.9)"/>
<rect x="205.1" y="288.1" width="2.7" height="2.7" fill="#e82222" transform="rotate(45 206.4 289.5)"/>
<rect x="210" y="288.7" width="2.7" height="2.7" fill="#e82222" transform="rotate(45 211.3 290)"/>
<rect x="213.8" y="289.5" width="2.7" height="2.7" fill="#e82222" transform="rotate(45 215.2 290.8)"/>
<rect x="219" y="290.7" width="2.7" height="2.7" fill="#e82222" transform="rotate(45 220.3 292)"/>
<rect x="223.2" y="290.8" width="2.7" height="2.7" fill="#e82222" transform="rotate(45 224.5 292.2)"/>
<rect x="227.2" y="291.7" width="2.7" height="2.7" fill="#e82222" transform="rotate(45 228.5 293.1)"/>
<rect x="232.1" y="291.8" width="2.7" height="2.7" fill="#e82222" transform="rotate(45 233.4 293.2)"/>
<rect x="236" y="292.7" width="2.7" height="2.7" fill="#e82222" transform="rotate(45 237.3 294)"/>
<rect x="241.1" y="293.2" width="2.7" height="2.7" fill="#e82222" transform="rotate(45 242.4 294.6)"/>
<rect x="245.2" y="294.1" width="2.7" height="2.7" fill="#e82222" transform="rotate(45 246.5 295.5)"/>
<rect x="249.8" y="295.6" width="2.7" height="2.7" fill="#e82222" transform="rotate(45 251.2 297)"/>
<rect x="253.7" y="295.6" width="2.7" height="2.7" fill="#e82222" transform="rotate(45 255 297)"/>
<rect x="258.8" y="295.6" width="2.7" height="2.7" fill="#e82222" transform="rotate(45 260.1 297)"/>
<rect x="263.2" y="295.6" width="2.7" height="2.7" fill="#e82222" transform="rotate(45 264.6 297)"/>
<rect x="268" y="296.1" width="2.7" height="2.7" fill="#e82222" transform="rotate(45 269.4 297.4)"/>
<rect x="271.8" y="294.2" width="2.7" height="2.7" fill="#e82222" transform="rotate(45 273.2 295.6)"/>
<rect x="277.1" y="292.9" width="2.7" height="2.7" fill="#e82222" transform="rotate(45 278.5 294.3)"/>
<rect x="281.1" y="291.1" width="2.7" height="2.7" fill="#e82222" transform="rotate(45 282.5 292.4)"/>
<rect x="286" y="289.2" width="2.7" height="2.7" fill="#e82222" transform="rotate(45 287.4 290.5)"/>
<rect x="290.4" y="287.6" width="2.7" height="2.7" fill="#e82222" transform="rotate(45 291.8 289)"/>
<rect x="295.3" y="286.2" width="2.7" height="2.7" fill="#e82222" transform="rotate(45 296.7 287.6)"/>
<rect x="299.6" y="283.8" width="2.7" height="2.7" fill="#e82222" transform="rotate(45 301 285.1)"/>
<rect x="303.3" y="282" width="2.7" height="2.7" fill="#e82222" transform="rotate(45 304.7 283.3)"/>
<rect x="308.4" y="281.4" width="2.7" height="2.7" fill="#e82222" transform="rotate(45 309.8 282.7)"/>
<rect x="312.3" y="278.3" width="2.7" height="2.7" fill="#e82222" transform="rotate(45 313.7 279.6)"/>
<rect x="317.6" y="275.6" width="2.7" height="2.7" fill="#e82222" transform="rotate(45 319 277)"/>
<rect x="321.5" y="274.2" width="2.7" height="2.7" fill="#e82222" transform="rotate(45 322.9 275.5)"/>
<rect x="325.4" y="272" width="2.7" height="2.7" fill="#e82222" transform="rotate(45 326.8 273.4)"/>
<rect x="330.1" y="269.5" width="2.7" height="2.7" fill="#e82222" transform="rotate(45 331.5 270.9)"/>
<rect x="335.2" y="267.5" width="2.7" height="2.7" fill="#e82222" transform="rotate(45 336.6 268.9)"/>
<rect x="339" y="265.3" width="2.7" height="2.7" fill="#e82222" transform="rotate(45 340.4 266.7)"/>
<rect x="344" y="263.3" width="2.7" height="2.7" fill="#e82222" transform="rotate(45 345.4 264.6)"/>
<rect x="348.1" y="262.3" width="2.7" height="2.7" fill="#e82222" transform="rotate(45 349.5 263.6)"/>
<rect x="353.2" y="261.2" width="2.7" height="2.7" fill="#e82222" transform="rotate(45 354.6 262.6)"/>
<rect x="357.1" y="260.4" width="2.7" height="2.7" fill="#e82222" transform="rotate(45 358.5 261.7)"/>
<rect x="362" y="259.8" width="2.7" height="2.7" fill="#e82222" transform="rotate(45 363.4 261.2)"/>
<rect x="366.4" y="259.3" width="2.7" height="2.7" fill="#e82222" transform="rotate(45 367.8 260.6)"/>
<rect x="371" y="259.2" width="2.7" height="2.7" fill="#e82222" transform="rotate(45 372.4 260.6)"/>
<rect x="375.3" y="259.2" width="2.7" height="2.7" fill="#e82222" transform="rotate(45 376.7 260.6)"/>
<rect x="379.9" y="259.2" width="2.7" height="2.7" fill="#e82222" transform="rotate(45 381.3 260.6)"/>
<rect x="384.1" y="259.7" width="2.7" height="2.7" fill="#e82222" transform="rotate(45 385.5 261)"/>
<rect x="388.3" y="259.8" width="2.7" height="2.7" fill="#e82222" transform="rotate(45 389.7 261.1)"/>
<rect x="392.9" y="260.2" width="2.7" height="2.7" fill="#e82222" transform="rotate(45 394.3 261.5)"/>
<rect x="397.2" y="260.9" width="2.7" height="2.7" fill="#e82222" transform="rotate(45 398.6 262.2)"/>
<rect x="401.8" y="261.5" width="2.7" height="2.7" fill="#e82222" transform="rotate(45 403.2 262.9)"/>
<rect x="406.2" y="262" width="2.7" height="2.7" fill="#e82222" transform="rotate(45 407.6 263.4)"/>
<rect x="411.1" y="262.1" width="2.7" height="2.7" fill="#e82222" transform="rotate(45 412.5 263.5)"/>
<rect x="415.3" y="262.8" width="2.7" height="2.7" fill="#e82222" transform="rotate(45 416.7 264.2)"/>
<rect x="419.9" y="263.9" width="2.7" height="2.7" fill="#e82222" transform="rotate(45 421.3 265.2)"/>
<rect x="423.9" y="264" width="2.7" height="2.7" fill="#e82222" transform="rotate(45 425.3 265.4)"/>
<rect x="428.9" y="264" width="2.7" height="2.7" fill="#e82222" transform="rotate(45 430.3 265.4)"/>
<rect x="433.1" y="264.8" width="2.7" height="2.7" fill="#e82222" transform="rotate(45 434.5 266.2)"/>
<rect x="437.8" y="264.9" width="2.7" height="2.7" fill="#e82222" transform="rotate(45 439.1 266.3)"/>
<rect x="442" y="265.1" width="2.7" height="2.7" fill="#e82222" transform="rotate(45 443.4 266.5)"/>
<rect x="447" y="265.1" width="2.7" height="2.7" fill="#e82222" transform="rotate(45 448.4 266.5)"/>
<rect x="451.3" y="265.1" width="2.7" height="2.7" fill="#e82222" transform="rotate(45 452.7 266.5)"/>
<rect x="456.2" y="266" width="2.7" height="2.7" fill="#e82222" transform="rotate(45 457.6 267.3)"/>
<rect x="459.8" y="266" width="2.7" height="2.7" fill="#e82222" transform="rotate(45 461.2 267.4)"/>
<rect x="464.1" y="267.7" width="2.7" height="2.7" fill="#e82222" transform="rotate(45 465.5 269.1)"/>
<rect x="469" y="268.8" width="2.7" height="2.7" fill="#e82222" transform="rotate(45 470.4 270.2)"/>
<rect x="472.9" y="269.7" width="2.7" height="2.7" fill="#e82222" transform="rotate(45 474.3 271)"/>
<rect x="478.3" y="271.6" width="2.7" height="2.7" fill="#e82222" transform="rotate(45 479.7 273)"/>
<rect x="482.2" y="273.6" width="2.7" height="2.7" fill="#e82222" transform="rotate(45 483.6 274.9)"/>
<rect x="487.2" y="275.9" width="2.7" height="2.7" fill="#e82222" transform="rotate(45 488.6 277.2)"/>
<rect x="491.1" y="277.8" width="2.7" height="2.7" fill="#e82222" transform="rotate(45 492.5 279.1)"/>
<rect x="496" y="279.6" width="2.7" height="2.7" fill="#e82222" transform="rotate(45 497.4 281)"/>
<rect x="500.4" y="281.8" width="2.7" height="2.7" fill="#e82222" transform="rotate(45 501.8 283.1)"/>
<rect x="505.3" y="283.2" width="2.7" height="2.7" fill="#e82222" transform="rotate(45 506.7 284.5)"/>
<rect x="509.5" y="283.2" width="2.7" height="2.7" fill="#e82222" transform="rotate(45 510.9 284.6)"/>
<rect x="514.1" y="283.2" width="2.7" height="2.7" fill="#e82222" transform="rotate(45 515.5 284.5)"/>
<rect x="518.4" y="282.8" width="2.7" height="2.7" fill="#e82222" transform="rotate(45 519.8 284.2)"/>
<rect x="523.1" y="283.2" width="2.7" height="2.7" fill="#e82222" transform="rotate(45 524.5 284.6)"/>
<rect x="527.2" y="282.8" width="2.7" height="2.7" fill="#e82222" transform="rotate(45 528.6 284.1)"/>
<rect x="532.4" y="282.1" width="2.7" height="2.7" fill="#e82222" transform="rotate(45 533.7 283.5)"/>
<rect x="535.9" y="281.1" width="2.7" height="2.7" fill="#e82222" transform="rotate(45 537.3 282.4)"/>
<rect x="540.1" y="280.1" width="2.7" height="2.7" fill="#e82222" transform="rotate(45 541.5 281.4)"/>
<rect x="545.2" y="278.5" width="2.7" height="2.7" fill="#e82222" transform="rotate(45 546.6 279.9)"/>
<rect x="549.4" y="275.7" width="2.7" height="2.7" fill="#e82222" transform="rotate(45 550.7 277.1)"/>
<rect x="554" y="273.7" width="2.7" height="2.7" fill="#e82222" transform="rotate(45 555.4 275)"/>
<rect x="558.1" y="272.8" width="2.7" height="2.7" fill="#e82222" transform="rotate(45 559.5 274.1)"/>
<rect x="563.2" y="271.6" width="2.7" height="2.7" fill="#e82222" transform="rotate(45 564.6 273)"/>
<rect x="567.4" y="271" width="2.7" height="2.7" fill="#e82222" transform="rotate(45 568.8 272.3)"/>
<rect x="572" y="269.1" width="2.7" height="2.7" fill="#e82222" transform="rotate(45 573.4 270.5)"/>
<rect x="576" y="268.1" width="2.7" height="2.7" fill="#e82222" transform="rotate(45 577.4 269.4)"/>
<rect x="581" y="267.2" width="2.7" height="2.7" fill="#e82222" transform="rotate(45 582.4 268.5)"/>
<rect x="585.1" y="266.5" width="2.7" height="2.7" fill="#e82222" transform="rotate(45 586.5 267.9)"/>
<rect x="589.9" y="265.9" width="2.7" height="2.7" fill="#e82222" transform="rotate(45 591.3 267.3)"/>
<rect x="594.1" y="265.8" width="2.7" height="2.7" fill="#e82222" transform="rotate(45 595.5 267.2)"/>
<rect x="599" y="265.1" width="2.7" height="2.7" fill="#e82222" transform="rotate(45 600.4 266.5)"/>
<rect x="603.1" y="265" width="2.7" height="2.7" fill="#e82222" transform="rotate(45 604.5 266.4)"/>
<rect x="608" y="265" width="2.7" height="2.7" fill="#e82222" transform="rotate(45 609.4 266.4)"/>
<rect x="612.2" y="265" width="2.7" height="2.7" fill="#e82222" transform="rotate(45 613.6 266.4)"/>
<rect x="616" y="265" width="2.7" height="2.7" fill="#e82222" transform="rotate(45 617.4 266.4)"/>
<rect x="621.1" y="265" width="2.7" height="2.7" fill="#e82222" transform="rotate(45 622.5 266.4)"/>
<rect x="625" y="265" width="2.7" height="2.7" fill="#e82222" transform="rotate(45 626.4 266.4)"/>
<rect x="629.9" y="265" width="2.7" height="2.7" fill="#e82222" transform="rotate(45 631.3 266.4)"/>
<rect x="633.9" y="264.8" width="2.7" height="2.7" fill="#e82222" transform="rotate(45 635.3 266.2)"/>
<rect x="638.9" y="263.8" width="2.7" height="2.7" fill="#e82222" transform="rotate(45 640.3 265.2)"/>
<rect x="643.6" y="262.8" width="2.7" height="2.7" fill="#e82222" transform="rotate(45 645 264.2)"/>
<rect x="648.2" y="262" width="2.7" height="2.7" fill="#e82222" transform="rotate(45 649.6 263.4)"/>
<rect x="652.4" y="261.9" width="2.7" height="2.7" fill="#e82222" transform="rotate(45 653.7 263.3)"/>
<rect x="656.6" y="262.4" width="2.7" height="2.7" fill="#e82222" transform="rotate(45 658 263.8)"/>
<rect x="661.1" y="263" width="2.7" height="2.7" fill="#e82222" transform="rotate(45 662.5 264.3)"/>
<rect x="666.4" y="264.6" width="2.7" height="2.7" fill="#e82222" transform="rotate(45 667.7 266)"/>
<rect x="669.8" y="266.5" width="2.7" height="2.7" fill="#e82222" transform="rotate(45 671.1 267.9)"/>
<rect x="675.2" y="269.6" width="2.7" height="2.7" fill="#e82222" transform="rotate(45 676.6 271)"/>
<rect x="679.2" y="271.5" width="2.7" height="2.7" fill="#e82222" transform="rotate(45 680.6 272.8)"/>
<rect x="684.2" y="274.6" width="2.7" height="2.7" fill="#e82222" transform="rotate(45 685.6 276)"/>
<rect x="688.2" y="277.1" width="2.7" height="2.7" fill="#e82222" transform="rotate(45 689.6 278.5)"/>
<rect x="691.9" y="279.3" width="2.7" height="2.7" fill="#e82222" transform="rotate(45 693.2 280.6)"/>
<rect x="696.9" y="282.7" width="2.7" height="2.7" fill="#e82222" transform="rotate(45 698.2 284)"/>
<rect x="701.4" y="284.8" width="2.7" height="2.7" fill="#e82222" transform="rotate(45 702.7 286.2)"/>
<rect x="705.9" y="286.8" width="2.7" height="2.7" fill="#e82222" transform="rotate(45 707.3 288.1)"/>
<rect x="710.5" y="289.1" width="2.7" height="2.7" fill="#e82222" transform="rotate(45 711.9 290.4)"/>
<rect x="714.9" y="291" width="2.7" height="2.7" fill="#e82222" transform="rotate(45 716.3 292.3)"/>
<rect x="718.9" y="292.7" width="2.7" height="2.7" fill="#e82222" transform="rotate(45 720.3 294)"/>
<rect x="723.9" y="293.8" width="2.7" height="2.7" fill="#e82222" transform="rotate(45 725.3 295.2)"/>
<rect x="728" y="293.9" width="2.7" height="2.7" fill="#e82222" transform="rotate(45 729.4 295.3)"/>
<rect x="733" y="293.1" width="2.7" height="2.7" fill="#e82222" transform="rotate(45 734.4 294.4)"/>
<rect x="737" y="292.4" width="2.7" height="2.7" fill="#e82222" transform="rotate(45 738.4 293.7)"/>
<rect x="741.4" y="291.5" width="2.7" height="2.7" fill="#e82222" transform="rotate(45 742.8 292.8)"/>
<rect x="746.2" y="290.3" width="2.7" height="2.7" fill="#e82222" transform="rotate(45 747.6 291.6)"/>
<rect x="750.9" y="289.2" width="2.7" height="2.7" fill="#e82222" transform="rotate(45 752.3 290.6)"/>
<rect x="755.1" y="288.4" width="2.7" height="2.7" fill="#e82222" transform="rotate(45 756.5 289.7)"/>
<rect x="759.8" y="288.2" width="2.7" height="2.7" fill="#e82222" transform="rotate(45 761.1 289.6)"/>
<rect x="763.9" y="287.4" width="2.7" height="2.7" fill="#e82222" transform="rotate(45 765.2 288.8)"/>
<rect x="768.1" y="287.2" width="2.7" height="2.7" fill="#e82222" transform="rotate(45 769.5 288.6)"/>
<rect x="773.1" y="287.2" width="2.7" height="2.7" fill="#e82222" transform="rotate(45 774.5 288.6)"/>
<rect x="777.2" y="287.2" width="2.7" height="2.7" fill="#e82222" transform="rotate(45 778.6 288.6)"/>
<rect x="782" y="286.8" width="2.7" height="2.7" fill="#e82222" transform="rotate(45 783.4 288.2)"/>
<rect x="786" y="288.4" width="2.7" height="2.7" fill="#e82222" transform="rotate(45 787.4 289.8)"/>
<rect x="790.8" y="289.9" width="2.7" height="2.7" fill="#e82222" transform="rotate(45 792.1 291.2)"/>
<rect x="795.4" y="291.4" width="2.7" height="2.7" fill="#e82222" transform="rotate(45 796.7 292.8)"/>
<rect x="799.9" y="294.5" width="2.7" height="2.7" fill="#e82222" transform="rotate(45 801.3 295.8)"/>
<rect x="804.1" y="296.6" width="2.7" height="2.7" fill="#e82222" transform="rotate(45 805.5 298)"/>
<rect x="808.9" y="298.9" width="2.7" height="2.7" fill="#e82222" transform="rotate(45 810.3 300.3)"/>
<rect x="813.2" y="299.6" width="2.7" height="2.7" fill="#e82222" transform="rotate(45 814.6 301)"/>
<rect x="818" y="301.8" width="2.7" height="2.7" fill="#e82222" transform="rotate(45 819.4 303.1)"/>
<rect x="821.9" y="303.6" width="2.7" height="2.7" fill="#e82222" transform="rotate(45 823.3 305)"/>
<rect x="826.8" y="305.9" width="2.7" height="2.7" fill="#e82222" transform="rotate(45 828.1 307.3)"/>
<rect x="831.1" y="306.8" width="2.7" height="2.7" fill="#e82222" transform="rotate(45 832.5 308.1)"/>
<rect x="835.9" y="308.9" width="2.7" height="2.7" fill="#e82222" transform="rotate(45 837.3 310.3)"/>
<rect x="839.9" y="310.4" width="2.7" height="2.7" fill="#e82222" transform="rotate(45 841.2 311.7)"/>
<rect x="844" y="311.9" width="2.7" height="2.7" fill="#e82222" transform="rotate(45 845.4 313.3)"/>
<rect x="848.9" y="312.1" width="2.7" height="2.7" fill="#e82222" transform="rotate(45 850.3 313.5)"/>
<rect x="853.4" y="311.7" width="2.7" height="2.7" fill="#e82222" transform="rotate(45 854.7 313)"/>
<rect x="857.9" y="311.2" width="2.7" height="2.7" fill="#e82222" transform="rotate(45 859.3 312.6)"/>
</g>
<rect x="11.5" y="255.5" width="876" height="67" fill="none" stroke="#a9bac9" stroke-width="1"/>
<text x="13.5" y="267" font-size="11" fill="#1c1c8c" textLength="28.5" lengthAdjust="spacingAndGlyphs">MACD</text>
<line x1="888" y1="277.5" x2="893" y2="277.5" stroke="#a9bac9"/>
<line x1="888" y1="313.5" x2="893" y2="313.5" stroke="#a9bac9"/>
<text x="896" y="284" font-size="11" fill="#ffffff" stroke="#ffffff" stroke-width="0.25" textLength="33" lengthAdjust="spacingAndGlyphs">+0.000</text>
<text x="896" y="320" font-size="11" fill="#ffffff" stroke="#ffffff" stroke-width="0.25" textLength="30" lengthAdjust="spacingAndGlyphs">-0.005</text>
<g clip-path="url(#crsi)">
<g fill="url(#colg)"><rect x="12" y="348" width="1" height="35" fill-opacity="0.73"/><rect x="13" y="347.3" width="1" height="35.7" fill-opacity="0.74"/><rect x="14" y="347" width="1" height="36" fill-opacity="0.75"/><rect x="15" y="347" width="1" height="36" fill-opacity="0.75"/><rect x="16" y="347" width="1" height="36" fill-opacity="0.75"/><rect x="17" y="347.4" width="1" height="35.6" fill-opacity="0.74"/><rect x="18" y="348.3" width="1" height="34.7" fill-opacity="0.72"/><rect x="19" y="349.8" width="1" height="33.2" fill-opacity="0.69"/><rect x="20" y="351.9" width="1" height="31.1" fill-opacity="0.65"/><rect x="21" y="354.1" width="1" height="28.9" fill-opacity="0.60"/><rect x="22" y="356.3" width="1" height="26.7" fill-opacity="0.56"/><rect x="23" y="358.4" width="1" height="24.6" fill-opacity="0.51"/><rect x="24" y="360.5" width="1" height="22.5" fill-opacity="0.47"/><rect x="25" y="362.3" width="1" height="20.7" fill-opacity="0.43"/><rect x="26" y="363.6" width="1" height="19.4" fill-opacity="0.40"/><rect x="27" y="364.1" width="1" height="18.9" fill-opacity="0.39"/><rect x="28" y="363.7" width="1" height="19.3" fill-opacity="0.40"/><rect x="29" y="363.2" width="1" height="19.8" fill-opacity="0.41"/><rect x="30" y="362.8" width="1" height="20.2" fill-opacity="0.42"/><rect x="31" y="362.4" width="1" height="20.6" fill-opacity="0.43"/><rect x="32" y="362.5" width="1" height="20.5" fill-opacity="0.43"/><rect x="33" y="363" width="1" height="20" fill-opacity="0.42"/><rect x="34" y="363.5" width="1" height="19.5" fill-opacity="0.41"/><rect x="35" y="364" width="1" height="19" fill-opacity="0.40"/><rect x="36" y="364.6" width="1" height="18.4" fill-opacity="0.38"/><rect x="37" y="365.1" width="1" height="17.9" fill-opacity="0.37"/><rect x="38" y="365.7" width="1" height="17.3" fill-opacity="0.36"/><rect x="39" y="366.2" width="1" height="16.8" fill-opacity="0.35"/><rect x="40" y="366" width="1" height="17" fill-opacity="0.35"/><rect x="41" y="365" width="1" height="18" fill-opacity="0.37"/><rect x="42" y="364.1" width="1" height="18.9" fill-opacity="0.39"/><rect x="43" y="363.1" width="1" height="19.9" fill-opacity="0.42"/><rect x="44" y="362.1" width="1" height="20.9" fill-opacity="0.44"/><rect x="45" y="361.3" width="1" height="21.7" fill-opacity="0.45"/><rect x="46" y="360.8" width="1" height="22.2" fill-opacity="0.46"/><rect x="47" y="360.2" width="1" height="22.8" fill-opacity="0.47"/><rect x="48" y="359.7" width="1" height="23.3" fill-opacity="0.49"/><rect x="49" y="359.2" width="1" height="23.8" fill-opacity="0.50"/><rect x="50" y="358.8" width="1" height="24.2" fill-opacity="0.50"/><rect x="51" y="358.6" width="1" height="24.4" fill-opacity="0.51"/><rect x="52" y="358.4" width="1" height="24.6" fill-opacity="0.51"/><rect x="53" y="358.2" width="1" height="24.8" fill-opacity="0.52"/><rect x="54" y="358" width="1" height="25" fill-opacity="0.52"/><rect x="55" y="357.2" width="1" height="25.8" fill-opacity="0.54"/><rect x="56" y="355.8" width="1" height="27.2" fill-opacity="0.57"/><rect x="57" y="354.4" width="1" height="28.6" fill-opacity="0.60"/><rect x="58" y="352.9" width="1" height="30.1" fill-opacity="0.63"/><rect x="59" y="351.5" width="1" height="31.5" fill-opacity="0.66"/><rect x="60" y="350.7" width="1" height="32.3" fill-opacity="0.67"/><rect x="61" y="350.4" width="1" height="32.6" fill-opacity="0.68"/><rect x="62" y="350.8" width="1" height="32.2" fill-opacity="0.67"/><rect x="63" y="351.6" width="1" height="31.4" fill-opacity="0.65"/><rect x="64" y="352.6" width="1" height="30.4" fill-opacity="0.63"/><rect x="65" y="353.3" width="1" height="29.7" fill-opacity="0.62"/><rect x="66" y="354" width="1" height="29" fill-opacity="0.60"/><rect x="67" y="354.7" width="1" height="28.3" fill-opacity="0.59"/><rect x="68" y="355.4" width="1" height="27.6" fill-opacity="0.58"/><rect x="69" y="356.3" width="1" height="26.7" fill-opacity="0.56"/><rect x="70" y="357.6" width="1" height="25.4" fill-opacity="0.53"/><rect x="71" y="358.9" width="1" height="24.1" fill-opacity="0.50"/><rect x="72" y="361.6" width="1" height="21.4" fill-opacity="0.44"/><rect x="73" y="365.9" width="1" height="17.1" fill-opacity="0.36"/><rect x="74" y="370.2" width="1" height="12.8" fill-opacity="0.27"/><rect x="75" y="372.8" width="1" height="10.2" fill-opacity="0.21"/><rect x="76" y="373.5" width="1" height="9.5" fill-opacity="0.20"/><rect x="77" y="374.3" width="1" height="8.7" fill-opacity="0.18"/><rect x="78" y="375.1" width="1" height="7.9" fill-opacity="0.17"/><rect x="79" y="375.8" width="1" height="7.2" fill-opacity="0.15"/><rect x="80" y="376.1" width="1" height="6.9" fill-opacity="0.14"/><rect x="81" y="375.8" width="1" height="7.2" fill-opacity="0.15"/><rect x="82" y="375.5" width="1" height="7.5" fill-opacity="0.16"/><rect x="83" y="375.2" width="1" height="7.8" fill-opacity="0.16"/><rect x="84" y="375.4" width="1" height="7.6" fill-opacity="0.16"/><rect x="85" y="375.9" width="1" height="7.1" fill-opacity="0.15"/><rect x="86" y="376.5" width="1" height="6.5" fill-opacity="0.14"/><rect x="87" y="377" width="1" height="6" fill-opacity="0.12"/><rect x="88" y="377.7" width="1" height="5.3" fill-opacity="0.11"/><rect x="89" y="378.5" width="1" height="4.5" fill-opacity="0.09"/><rect x="90" y="378.7" width="1" height="4.3" fill-opacity="0.09"/><rect x="91" y="378.3" width="1" height="4.7" fill-opacity="0.10"/><rect x="92" y="377.9" width="1" height="5.1" fill-opacity="0.11"/><rect x="93" y="377.4" width="1" height="5.6" fill-opacity="0.12"/><rect x="94" y="377" width="1" height="6" fill-opacity="0.12"/><rect x="95" y="376.9" width="1" height="6.1" fill-opacity="0.13"/><rect x="96" y="377" width="1" height="6" fill-opacity="0.13"/><rect x="97" y="377.1" width="1" height="5.9" fill-opacity="0.12"/><rect x="98" y="377.2" width="1" height="5.8" fill-opacity="0.12"/><rect x="99" y="376.8" width="1" height="6.2" fill-opacity="0.13"/><rect x="100" y="375.6" width="1" height="7.4" fill-opacity="0.15"/><rect x="101" y="374.6" width="1" height="8.4" fill-opacity="0.18"/><rect x="102" y="373" width="1" height="10" fill-opacity="0.21"/><rect x="103" y="370.9" width="1" height="12.1" fill-opacity="0.25"/><rect x="104" y="368.9" width="1" height="14.1" fill-opacity="0.29"/><rect x="105" y="366.9" width="1" height="16.1" fill-opacity="0.34"/><rect x="106" y="364.8" width="1" height="18.2" fill-opacity="0.38"/><rect x="107" y="363.4" width="1" height="19.6" fill-opacity="0.41"/><rect x="108" y="362.6" width="1" height="20.4" fill-opacity="0.42"/><rect x="109" y="361.8" width="1" height="21.2" fill-opacity="0.44"/><rect x="110" y="361" width="1" height="22" fill-opacity="0.46"/><rect x="111" y="361.1" width="1" height="21.9" fill-opacity="0.46"/><rect x="112" y="362.2" width="1" height="20.8" fill-opacity="0.43"/><rect x="113" y="363.3" width="1" height="19.7" fill-opacity="0.41"/><rect x="114" y="364.4" width="1" height="18.6" fill-opacity="0.39"/><rect x="115" y="365.5" width="1" height="17.5" fill-opacity="0.37"/><rect x="116" y="366.3" width="1" height="16.7" fill-opacity="0.35"/><rect x="117" y="367" width="1" height="16" fill-opacity="0.33"/><rect x="118" y="367.6" width="1" height="15.4" fill-opacity="0.32"/><rect x="119" y="368.2" width="1" height="14.8" fill-opacity="0.31"/><rect x="120" y="368.9" width="1" height="14.1" fill-opacity="0.29"/><rect x="121" y="368.6" width="1" height="14.4" fill-opacity="0.30"/><rect x="122" y="367.4" width="1" height="15.6" fill-opacity="0.32"/><rect x="123" y="366.3" width="1" height="16.7" fill-opacity="0.35"/><rect x="124" y="365.1" width="1" height="17.9" fill-opacity="0.37"/><rect x="125" y="363.9" width="1" height="19.1" fill-opacity="0.40"/><rect x="126" y="362.8" width="1" height="20.2" fill-opacity="0.42"/><rect x="127" y="361.4" width="1" height="21.6" fill-opacity="0.45"/><rect x="128" y="359.8" width="1" height="23.2" fill-opacity="0.48"/><rect x="129" y="358.1" width="1" height="24.9" fill-opacity="0.52"/><rect x="130" y="357" width="1" height="26" fill-opacity="0.54"/><rect x="131" y="356.5" width="1" height="26.5" fill-opacity="0.55"/><rect x="132" y="356" width="1" height="27" fill-opacity="0.56"/><rect x="133" y="355.4" width="1" height="27.6" fill-opacity="0.57"/><rect x="134" y="354.9" width="1" height="28.1" fill-opacity="0.59"/><rect x="135" y="354.5" width="1" height="28.5" fill-opacity="0.59"/><rect x="136" y="354.4" width="1" height="28.6" fill-opacity="0.60"/><rect x="137" y="354.8" width="1" height="28.2" fill-opacity="0.59"/><rect x="138" y="355.8" width="1" height="27.2" fill-opacity="0.57"/><rect x="139" y="356.8" width="1" height="26.2" fill-opacity="0.55"/><rect x="140" y="357.6" width="1" height="25.4" fill-opacity="0.53"/><rect x="141" y="358.1" width="1" height="24.9" fill-opacity="0.52"/><rect x="142" y="358.2" width="1" height="24.8" fill-opacity="0.52"/><rect x="143" y="357.9" width="1" height="25.1" fill-opacity="0.52"/><rect x="144" y="357.5" width="1" height="25.5" fill-opacity="0.53"/><rect x="145" y="357.4" width="1" height="25.6" fill-opacity="0.53"/><rect x="146" y="357.6" width="1" height="25.4" fill-opacity="0.53"/><rect x="147" y="357.8" width="1" height="25.2" fill-opacity="0.53"/><rect x="148" y="358.8" width="1" height="24.2" fill-opacity="0.50"/><rect x="149" y="360.7" width="1" height="22.3" fill-opacity="0.47"/><rect x="150" y="364.9" width="1" height="18.1" fill-opacity="0.38"/><rect x="151" y="369.2" width="1" height="13.8" fill-opacity="0.29"/><rect x="152" y="371.3" width="1" height="11.7" fill-opacity="0.24"/><rect x="153" y="372.9" width="1" height="10.1" fill-opacity="0.21"/><rect x="154" y="374.1" width="1" height="8.9" fill-opacity="0.19"/><rect x="155" y="374.7" width="1" height="8.3" fill-opacity="0.17"/><rect x="156" y="374.8" width="1" height="8.2" fill-opacity="0.17"/><rect x="157" y="375" width="1" height="8" fill-opacity="0.17"/><rect x="158" y="375.1" width="1" height="7.9" fill-opacity="0.16"/><rect x="159" y="375.2" width="1" height="7.8" fill-opacity="0.16"/><rect x="160" y="375.4" width="1" height="7.6" fill-opacity="0.16"/><rect x="161" y="375.5" width="1" height="7.5" fill-opacity="0.16"/><rect x="162" y="375.6" width="1" height="7.4" fill-opacity="0.15"/><rect x="163" y="375.8" width="1" height="7.2" fill-opacity="0.15"/><rect x="164" y="375.9" width="1" height="7.1" fill-opacity="0.15"/><rect x="165" y="375.9" width="1" height="7.1" fill-opacity="0.15"/><rect x="166" y="375.7" width="1" height="7.3" fill-opacity="0.15"/><rect x="167" y="375.5" width="1" height="7.5" fill-opacity="0.16"/><rect x="168" y="375.3" width="1" height="7.7" fill-opacity="0.16"/><rect x="169" y="375.1" width="1" height="7.9" fill-opacity="0.16"/><rect x="170" y="374.9" width="1" height="8.1" fill-opacity="0.17"/><rect x="171" y="374.7" width="1" height="8.3" fill-opacity="0.17"/><rect x="172" y="374" width="1" height="9" fill-opacity="0.19"/><rect x="173" y="372.7" width="1" height="10.3" fill-opacity="0.21"/><rect x="174" y="371.4" width="1" height="11.6" fill-opacity="0.24"/><rect x="175" y="370.2" width="1" height="12.8" fill-opacity="0.27"/><rect x="176" y="368.9" width="1" height="14.1" fill-opacity="0.29"/><rect x="177" y="367.6" width="1" height="15.4" fill-opacity="0.32"/><rect x="178" y="367.6" width="1" height="15.4" fill-opacity="0.32"/><rect x="179" y="368.6" width="1" height="14.4" fill-opacity="0.30"/><rect x="180" y="370.6" width="1" height="12.4" fill-opacity="0.26"/><rect x="181" y="373.2" width="1" height="9.8" fill-opacity="0.20"/><rect x="182" y="374.5" width="1" height="8.5" fill-opacity="0.18"/><rect x="183" y="374.3" width="1" height="8.7" fill-opacity="0.18"/><rect x="184" y="374.2" width="1" height="8.8" fill-opacity="0.18"/><rect x="185" y="374" width="1" height="9" fill-opacity="0.19"/><rect x="186" y="373.8" width="1" height="9.2" fill-opacity="0.19"/><rect x="187" y="373.7" width="1" height="9.3" fill-opacity="0.19"/><rect x="188" y="373.5" width="1" height="9.5" fill-opacity="0.20"/><rect x="189" y="373.3" width="1" height="9.7" fill-opacity="0.20"/><rect x="190" y="373.2" width="1" height="9.8" fill-opacity="0.20"/><rect x="191" y="373" width="1" height="10" fill-opacity="0.21"/><rect x="192" y="372.8" width="1" height="10.2" fill-opacity="0.21"/><rect x="193" y="372.7" width="1" height="10.3" fill-opacity="0.22"/><rect x="194" y="372.5" width="1" height="10.5" fill-opacity="0.22"/><rect x="195" y="372.5" width="1" height="10.5" fill-opacity="0.22"/><rect x="196" y="372.6" width="1" height="10.4" fill-opacity="0.22"/><rect x="197" y="372.7" width="1" height="10.3" fill-opacity="0.21"/><rect x="198" y="372.8" width="1" height="10.2" fill-opacity="0.21"/><rect x="199" y="372.9" width="1" height="10.1" fill-opacity="0.21"/><rect x="200" y="373.4" width="1" height="9.6" fill-opacity="0.20"/><rect x="201" y="374.1" width="1" height="8.9" fill-opacity="0.18"/><rect x="202" y="374.9" width="1" height="8.1" fill-opacity="0.17"/><rect x="203" y="375.7" width="1" height="7.3" fill-opacity="0.15"/><rect x="204" y="376.4" width="1" height="6.6" fill-opacity="0.14"/><rect x="205" y="377.2" width="1" height="5.8" fill-opacity="0.12"/><rect x="206" y="377.9" width="1" height="5.1" fill-opacity="0.11"/><rect x="207" y="378.6" width="1" height="4.4" fill-opacity="0.09"/><rect x="208" y="379.3" width="1" height="3.7" fill-opacity="0.08"/><rect x="209" y="380" width="1" height="3" fill-opacity="0.06"/><rect x="210" y="380.7" width="1" height="2.3" fill-opacity="0.05"/><rect x="211" y="380.6" width="1" height="2.4" fill-opacity="0.05"/><rect x="212" y="379.5" width="1" height="3.5" fill-opacity="0.07"/><rect x="213" y="378.4" width="1" height="4.6" fill-opacity="0.10"/><rect x="214" y="377.3" width="1" height="5.7" fill-opacity="0.12"/><rect x="215" y="376.4" width="1" height="6.6" fill-opacity="0.14"/><rect x="216" y="375.5" width="1" height="7.5" fill-opacity="0.16"/><rect x="217" y="374.6" width="1" height="8.4" fill-opacity="0.17"/><rect x="218" y="373.7" width="1" height="9.3" fill-opacity="0.19"/><rect x="219" y="372.8" width="1" height="10.2" fill-opacity="0.21"/><rect x="220" y="372.1" width="1" height="10.9" fill-opacity="0.23"/><rect x="221" y="371.6" width="1" height="11.4" fill-opacity="0.24"/><rect x="222" y="371.1" width="1" height="11.9" fill-opacity="0.25"/><rect x="223" y="370.6" width="1" height="12.4" fill-opacity="0.26"/><rect x="224" y="370.7" width="1" height="12.3" fill-opacity="0.26"/><rect x="225" y="371.5" width="1" height="11.5" fill-opacity="0.24"/><rect x="226" y="372.3" width="1" height="10.7" fill-opacity="0.22"/><rect x="227" y="373.1" width="1" height="9.9" fill-opacity="0.21"/><rect x="228" y="374.2" width="1" height="8.8" fill-opacity="0.18"/><rect x="229" y="375.5" width="1" height="7.5" fill-opacity="0.16"/><rect x="230" y="376.9" width="1" height="6.1" fill-opacity="0.13"/><rect x="231" y="378.2" width="1" height="4.8" fill-opacity="0.10"/><rect x="232" y="379.2" width="1" height="3.8" fill-opacity="0.08"/><rect x="233" y="379.7" width="1" height="3.3" fill-opacity="0.07"/><rect x="234" y="380.1" width="1" height="2.9" fill-opacity="0.06"/><rect x="235" y="380.2" width="1" height="2.8" fill-opacity="0.06"/><rect x="236" y="380.3" width="1" height="2.7" fill-opacity="0.06"/><rect x="237" y="380.4" width="1" height="2.6" fill-opacity="0.05"/><rect x="238" y="380.8" width="1" height="2.2" fill-opacity="0.05"/><rect x="239" y="381.3" width="1" height="1.7" fill-opacity="0.03"/><rect x="240" y="381.9" width="1" height="1.1" fill-opacity="0.02"/><rect x="241" y="382.4" width="1" height="0.6" fill-opacity="0.01"/><rect x="257" y="381.6" width="1" height="1.4" fill-opacity="0.03"/><rect x="258" y="378.9" width="1" height="4.1" fill-opacity="0.08"/><rect x="259" y="376.8" width="1" height="6.2" fill-opacity="0.13"/><rect x="260" y="375.1" width="1" height="7.9" fill-opacity="0.16"/><rect x="261" y="374.1" width="1" height="8.9" fill-opacity="0.19"/><rect x="262" y="373.1" width="1" height="9.9" fill-opacity="0.21"/><rect x="263" y="372.4" width="1" height="10.6" fill-opacity="0.22"/><rect x="264" y="371.8" width="1" height="11.2" fill-opacity="0.23"/><rect x="265" y="370.7" width="1" height="12.3" fill-opacity="0.26"/><rect x="266" y="369.2" width="1" height="13.8" fill-opacity="0.29"/><rect x="267" y="367.7" width="1" height="15.3" fill-opacity="0.32"/><rect x="268" y="364.9" width="1" height="18.1" fill-opacity="0.38"/><rect x="269" y="360.5" width="1" height="22.5" fill-opacity="0.47"/><rect x="270" y="357.6" width="1" height="25.4" fill-opacity="0.53"/><rect x="271" y="356" width="1" height="27" fill-opacity="0.56"/><rect x="272" y="354.3" width="1" height="28.7" fill-opacity="0.60"/><rect x="273" y="352.5" width="1" height="30.5" fill-opacity="0.64"/><rect x="274" y="353.9" width="1" height="29.1" fill-opacity="0.61"/><rect x="275" y="355.4" width="1" height="27.6" fill-opacity="0.57"/><rect x="276" y="357.1" width="1" height="25.9" fill-opacity="0.54"/><rect x="277" y="358.1" width="1" height="24.9" fill-opacity="0.52"/><rect x="278" y="358.2" width="1" height="24.8" fill-opacity="0.52"/><rect x="279" y="357.9" width="1" height="25.1" fill-opacity="0.52"/><rect x="280" y="357.5" width="1" height="25.5" fill-opacity="0.53"/><rect x="281" y="357.3" width="1" height="25.7" fill-opacity="0.54"/><rect x="282" y="357.3" width="1" height="25.7" fill-opacity="0.54"/><rect x="283" y="357.3" width="1" height="25.7" fill-opacity="0.54"/><rect x="284" y="357.5" width="1" height="25.5" fill-opacity="0.53"/><rect x="285" y="357.9" width="1" height="25.1" fill-opacity="0.52"/><rect x="286" y="358.2" width="1" height="24.8" fill-opacity="0.52"/><rect x="287" y="358.5" width="1" height="24.5" fill-opacity="0.51"/><rect x="288" y="358.6" width="1" height="24.4" fill-opacity="0.51"/><rect x="289" y="358.8" width="1" height="24.2" fill-opacity="0.50"/><rect x="290" y="359.5" width="1" height="23.5" fill-opacity="0.49"/><rect x="291" y="360.6" width="1" height="22.4" fill-opacity="0.47"/><rect x="292" y="359.5" width="1" height="23.5" fill-opacity="0.49"/><rect x="293" y="358.4" width="1" height="24.6" fill-opacity="0.51"/><rect x="294" y="357.3" width="1" height="25.7" fill-opacity="0.54"/><rect x="295" y="356" width="1" height="27" fill-opacity="0.56"/><rect x="296" y="354.7" width="1" height="28.3" fill-opacity="0.59"/><rect x="297" y="353.8" width="1" height="29.2" fill-opacity="0.61"/><rect x="298" y="353.3" width="1" height="29.7" fill-opacity="0.62"/><rect x="299" y="352.8" width="1" height="30.2" fill-opacity="0.63"/><rect x="300" y="352.3" width="1" height="30.7" fill-opacity="0.64"/><rect x="301" y="351.9" width="1" height="31.1" fill-opacity="0.65"/><rect x="302" y="351.4" width="1" height="31.6" fill-opacity="0.66"/><rect x="303" y="351" width="1" height="32" fill-opacity="0.67"/><rect x="304" y="350.6" width="1" height="32.4" fill-opacity="0.67"/><rect x="305" y="350.3" width="1" height="32.7" fill-opacity="0.68"/><rect x="306" y="350" width="1" height="33" fill-opacity="0.69"/><rect x="307" y="349" width="1" height="34" fill-opacity="0.71"/><rect x="308" y="347.5" width="1" height="35.5" fill-opacity="0.74"/><rect x="309" y="346" width="1" height="37" fill-opacity="0.77"/><rect x="310" y="344.4" width="1" height="38.6" fill-opacity="0.80"/><rect x="311" y="342.9" width="1" height="40.1" fill-opacity="0.84"/><rect x="312" y="341.4" width="1" height="41.6" fill-opacity="0.87"/><rect x="313" y="340.4" width="1" height="42.6" fill-opacity="0.89"/><rect x="314" y="340.1" width="1" height="42.9" fill-opacity="0.89"/><rect x="315" y="339.7" width="1" height="43.3" fill-opacity="0.90"/><rect x="316" y="339.4" width="1" height="43.6" fill-opacity="0.91"/><rect x="317" y="339.3" width="1" height="43.7" fill-opacity="0.91"/><rect x="318" y="339.2" width="1" height="43.8" fill-opacity="0.91"/><rect x="319" y="339.1" width="1" height="43.9" fill-opacity="0.92"/><rect x="320" y="338.9" width="1" height="44.1" fill-opacity="0.92"/><rect x="321" y="338.7" width="1" height="44.3" fill-opacity="0.92"/><rect x="322" y="338.5" width="1" height="44.5" fill-opacity="0.93"/><rect x="323" y="338.2" width="1" height="44.8" fill-opacity="0.93"/><rect x="324" y="337.8" width="1" height="45.2" fill-opacity="0.94"/><rect x="325" y="337.4" width="1" height="45.6" fill-opacity="0.95"/><rect x="326" y="337" width="1" height="46" fill-opacity="0.96"/><rect x="327" y="336.7" width="1" height="46.3" fill-opacity="0.96"/><rect x="328" y="336.6" width="1" height="46.4" fill-opacity="0.97"/><rect x="329" y="336.5" width="1" height="46.5" fill-opacity="0.97"/><rect x="330" y="336.4" width="1" height="46.6" fill-opacity="0.97"/><rect x="331" y="336" width="1" height="47" fill-opacity="0.98"/><rect x="332" y="335.5" width="1" height="47.5" fill-opacity="0.99"/><rect x="333" y="334.9" width="1" height="48.1" fill-opacity="1.00"/><rect x="334" y="334.3" width="1" height="48.7" fill-opacity="1.00"/><rect x="335" y="333.8" width="1" height="49.2" fill-opacity="1.00"/><rect x="336" y="333.3" width="1" height="49.7" fill-opacity="1.00"/><rect x="337" y="332.6" width="1" height="50.4" fill-opacity="1.00"/><rect x="338" y="331.9" width="1" height="51.1" fill-opacity="1.00"/><rect x="339" y="331.2" width="1" height="51.8" fill-opacity="1.00"/><rect x="340" y="330.9" width="1" height="52.1" fill-opacity="1.00"/><rect x="341" y="332.5" width="1" height="50.5" fill-opacity="1.00"/><rect x="342" y="335.2" width="1" height="47.8" fill-opacity="1.00"/><rect x="343" y="337.2" width="1" height="45.8" fill-opacity="0.95"/><rect x="344" y="339.1" width="1" height="43.9" fill-opacity="0.92"/><rect x="345" y="341.1" width="1" height="41.9" fill-opacity="0.87"/><rect x="346" y="341.8" width="1" height="41.2" fill-opacity="0.86"/><rect x="347" y="340.9" width="1" height="42.1" fill-opacity="0.88"/><rect x="348" y="339.9" width="1" height="43.1" fill-opacity="0.90"/><rect x="349" y="339.9" width="1" height="43.1" fill-opacity="0.90"/><rect x="350" y="340.7" width="1" height="42.3" fill-opacity="0.88"/><rect x="351" y="341.5" width="1" height="41.5" fill-opacity="0.86"/><rect x="352" y="342.3" width="1" height="40.7" fill-opacity="0.85"/><rect x="353" y="343.2" width="1" height="39.8" fill-opacity="0.83"/><rect x="354" y="344.4" width="1" height="38.6" fill-opacity="0.81"/><rect x="355" y="345.4" width="1" height="37.6" fill-opacity="0.78"/><rect x="356" y="346.3" width="1" height="36.7" fill-opacity="0.76"/><rect x="357" y="347" width="1" height="36" fill-opacity="0.75"/><rect x="358" y="347.6" width="1" height="35.4" fill-opacity="0.74"/><rect x="359" y="347" width="1" height="36" fill-opacity="0.75"/><rect x="360" y="346.3" width="1" height="36.7" fill-opacity="0.76"/><rect x="361" y="345.7" width="1" height="37.3" fill-opacity="0.78"/><rect x="362" y="345.3" width="1" height="37.7" fill-opacity="0.79"/><rect x="363" y="345" width="1" height="38" fill-opacity="0.79"/><rect x="364" y="344.8" width="1" height="38.2" fill-opacity="0.80"/><rect x="365" y="344.5" width="1" height="38.5" fill-opacity="0.80"/><rect x="366" y="344.3" width="1" height="38.7" fill-opacity="0.81"/><rect x="367" y="344.1" width="1" height="38.9" fill-opacity="0.81"/><rect x="368" y="343.9" width="1" height="39.1" fill-opacity="0.81"/><rect x="369" y="343.5" width="1" height="39.5" fill-opacity="0.82"/><rect x="370" y="343" width="1" height="40" fill-opacity="0.83"/><rect x="371" y="342.5" width="1" height="40.5" fill-opacity="0.84"/><rect x="372" y="341.6" width="1" height="41.4" fill-opacity="0.86"/><rect x="373" y="341.9" width="1" height="41.1" fill-opacity="0.86"/><rect x="374" y="343.6" width="1" height="39.4" fill-opacity="0.82"/><rect x="375" y="345.2" width="1" height="37.8" fill-opacity="0.79"/><rect x="376" y="345.7" width="1" height="37.3" fill-opacity="0.78"/><rect x="377" y="345.2" width="1" height="37.8" fill-opacity="0.79"/><rect x="378" y="344.8" width="1" height="38.2" fill-opacity="0.80"/><rect x="379" y="344.6" width="1" height="38.4" fill-opacity="0.80"/><rect x="380" y="344.5" width="1" height="38.5" fill-opacity="0.80"/><rect x="381" y="344.6" width="1" height="38.4" fill-opacity="0.80"/><rect x="382" y="344.9" width="1" height="38.1" fill-opacity="0.79"/><rect x="383" y="345.2" width="1" height="37.8" fill-opacity="0.79"/><rect x="384" y="345.8" width="1" height="37.2" fill-opacity="0.78"/><rect x="385" y="346.5" width="1" height="36.5" fill-opacity="0.76"/><rect x="386" y="347.2" width="1" height="35.8" fill-opacity="0.75"/><rect x="387" y="348.1" width="1" height="34.9" fill-opacity="0.73"/><rect x="388" y="349.2" width="1" height="33.8" fill-opacity="0.70"/><rect x="389" y="350.3" width="1" height="32.7" fill-opacity="0.68"/><rect x="390" y="351.6" width="1" height="31.4" fill-opacity="0.65"/><rect x="391" y="353.2" width="1" height="29.8" fill-opacity="0.62"/><rect x="392" y="354.9" width="1" height="28.1" fill-opacity="0.59"/><rect x="393" y="356.5" width="1" height="26.5" fill-opacity="0.55"/><rect x="394" y="357" width="1" height="26" fill-opacity="0.54"/><rect x="395" y="356.3" width="1" height="26.7" fill-opacity="0.56"/><rect x="396" y="355.6" width="1" height="27.4" fill-opacity="0.57"/><rect x="397" y="354.9" width="1" height="28.1" fill-opacity="0.58"/><rect x="398" y="354.1" width="1" height="28.9" fill-opacity="0.60"/><rect x="399" y="353" width="1" height="30" fill-opacity="0.63"/><rect x="400" y="351.9" width="1" height="31.1" fill-opacity="0.65"/><rect x="401" y="350.8" width="1" height="32.2" fill-opacity="0.67"/><rect x="402" y="349.7" width="1" height="33.3" fill-opacity="0.69"/><rect x="403" y="349.9" width="1" height="33.1" fill-opacity="0.69"/><rect x="404" y="351.2" width="1" height="31.8" fill-opacity="0.66"/><rect x="405" y="352.6" width="1" height="30.4" fill-opacity="0.63"/><rect x="406" y="353.9" width="1" height="29.1" fill-opacity="0.61"/><rect x="407" y="354.4" width="1" height="28.6" fill-opacity="0.60"/><rect x="408" y="354.1" width="1" height="28.9" fill-opacity="0.60"/><rect x="409" y="353.7" width="1" height="29.3" fill-opacity="0.61"/><rect x="410" y="353" width="1" height="30" fill-opacity="0.63"/><rect x="411" y="351.9" width="1" height="31.1" fill-opacity="0.65"/><rect x="412" y="350.8" width="1" height="32.2" fill-opacity="0.67"/><rect x="413" y="349.9" width="1" height="33.1" fill-opacity="0.69"/><rect x="414" y="349.1" width="1" height="33.9" fill-opacity="0.71"/><rect x="415" y="348.3" width="1" height="34.7" fill-opacity="0.72"/><rect x="416" y="347.5" width="1" height="35.5" fill-opacity="0.74"/><rect x="417" y="346.9" width="1" height="36.1" fill-opacity="0.75"/><rect x="418" y="346.5" width="1" height="36.5" fill-opacity="0.76"/><rect x="419" y="346" width="1" height="37" fill-opacity="0.77"/><rect x="420" y="345.6" width="1" height="37.4" fill-opacity="0.78"/><rect x="421" y="346" width="1" height="37" fill-opacity="0.77"/><rect x="422" y="347.2" width="1" height="35.8" fill-opacity="0.75"/><rect x="423" y="348.5" width="1" height="34.5" fill-opacity="0.72"/><rect x="424" y="349.7" width="1" height="33.3" fill-opacity="0.69"/><rect x="425" y="350.1" width="1" height="32.9" fill-opacity="0.68"/><rect x="426" y="349.8" width="1" height="33.2" fill-opacity="0.69"/><rect x="427" y="349.5" width="1" height="33.5" fill-opacity="0.70"/><rect x="428" y="349.2" width="1" height="33.8" fill-opacity="0.70"/><rect x="429" y="348.9" width="1" height="34.1" fill-opacity="0.71"/><rect x="430" y="349" width="1" height="34" fill-opacity="0.71"/><rect x="431" y="349.7" width="1" height="33.3" fill-opacity="0.69"/><rect x="432" y="350.4" width="1" height="32.6" fill-opacity="0.68"/><rect x="433" y="351.1" width="1" height="31.9" fill-opacity="0.67"/><rect x="434" y="351.1" width="1" height="31.9" fill-opacity="0.66"/><rect x="435" y="350.6" width="1" height="32.4" fill-opacity="0.68"/><rect x="436" y="350" width="1" height="33" fill-opacity="0.69"/><rect x="437" y="349.5" width="1" height="33.5" fill-opacity="0.70"/><rect x="438" y="349" width="1" height="34" fill-opacity="0.71"/><rect x="439" y="348.6" width="1" height="34.4" fill-opacity="0.72"/><rect x="440" y="348.5" width="1" height="34.5" fill-opacity="0.72"/><rect x="441" y="348.4" width="1" height="34.6" fill-opacity="0.72"/><rect x="442" y="348.3" width="1" height="34.7" fill-opacity="0.72"/><rect x="443" y="348.2" width="1" height="34.8" fill-opacity="0.73"/><rect x="444" y="347.6" width="1" height="35.4" fill-opacity="0.74"/><rect x="445" y="346.5" width="1" height="36.5" fill-opacity="0.76"/><rect x="446" y="345.4" width="1" height="37.6" fill-opacity="0.78"/><rect x="447" y="344.3" width="1" height="38.7" fill-opacity="0.81"/><rect x="448" y="343.2" width="1" height="39.8" fill-opacity="0.83"/><rect x="449" y="342.7" width="1" height="40.3" fill-opacity="0.84"/><rect x="450" y="342.7" width="1" height="40.3" fill-opacity="0.84"/><rect x="451" y="343" width="1" height="40" fill-opacity="0.83"/><rect x="452" y="344.6" width="1" height="38.4" fill-opacity="0.80"/><rect x="453" y="347.4" width="1" height="35.6" fill-opacity="0.74"/><rect x="454" y="350.3" width="1" height="32.7" fill-opacity="0.68"/><rect x="455" y="354.6" width="1" height="28.4" fill-opacity="0.59"/><rect x="456" y="360" width="1" height="23" fill-opacity="0.48"/><rect x="457" y="363.8" width="1" height="19.2" fill-opacity="0.40"/><rect x="458" y="364.5" width="1" height="18.5" fill-opacity="0.39"/><rect x="459" y="363.7" width="1" height="19.3" fill-opacity="0.40"/><rect x="460" y="364" width="1" height="19" fill-opacity="0.40"/><rect x="461" y="365.5" width="1" height="17.5" fill-opacity="0.37"/><rect x="462" y="366.9" width="1" height="16.1" fill-opacity="0.34"/><rect x="463" y="368.4" width="1" height="14.6" fill-opacity="0.30"/><rect x="464" y="370" width="1" height="13" fill-opacity="0.27"/><rect x="465" y="370.5" width="1" height="12.5" fill-opacity="0.26"/><rect x="466" y="370" width="1" height="13" fill-opacity="0.27"/><rect x="467" y="369.6" width="1" height="13.4" fill-opacity="0.28"/><rect x="468" y="369.4" width="1" height="13.6" fill-opacity="0.28"/><rect x="469" y="369.3" width="1" height="13.7" fill-opacity="0.29"/><rect x="470" y="369.6" width="1" height="13.4" fill-opacity="0.28"/><rect x="471" y="370.5" width="1" height="12.5" fill-opacity="0.26"/><rect x="472" y="371.4" width="1" height="11.6" fill-opacity="0.24"/><rect x="473" y="372.3" width="1" height="10.7" fill-opacity="0.22"/><rect x="474" y="373.2" width="1" height="9.8" fill-opacity="0.20"/><rect x="475" y="374.2" width="1" height="8.8" fill-opacity="0.18"/><rect x="476" y="375.1" width="1" height="7.9" fill-opacity="0.17"/><rect x="477" y="376" width="1" height="7" fill-opacity="0.15"/><rect x="478" y="376.9" width="1" height="6.1" fill-opacity="0.13"/><rect x="479" y="377.8" width="1" height="5.2" fill-opacity="0.11"/><rect x="480" y="378.9" width="1" height="4.1" fill-opacity="0.09"/><rect x="481" y="380" width="1" height="3" fill-opacity="0.06"/><rect x="482" y="380.9" width="1" height="2.1" fill-opacity="0.04"/><rect x="483" y="381.8" width="1" height="1.2" fill-opacity="0.03"/><rect x="484" y="382.2" width="1" height="0.8" fill-opacity="0.02"/><rect x="485" y="382.2" width="1" height="0.8" fill-opacity="0.02"/><rect x="486" y="382.2" width="1" height="0.8" fill-opacity="0.02"/><rect x="487" y="381.8" width="1" height="1.2" fill-opacity="0.03"/><rect x="488" y="380.9" width="1" height="2.1" fill-opacity="0.04"/><rect x="489" y="380.2" width="1" height="2.8" fill-opacity="0.06"/><rect x="490" y="379.7" width="1" height="3.3" fill-opacity="0.07"/><rect x="491" y="379.2" width="1" height="3.8" fill-opacity="0.08"/><rect x="492" y="379" width="1" height="4" fill-opacity="0.08"/><rect x="493" y="379.4" width="1" height="3.6" fill-opacity="0.08"/><rect x="494" y="379.8" width="1" height="3.2" fill-opacity="0.07"/><rect x="495" y="380.3" width="1" height="2.7" fill-opacity="0.06"/><rect x="496" y="380.8" width="1" height="2.2" fill-opacity="0.05"/><rect x="497" y="378.4" width="1" height="4.6" fill-opacity="0.10"/><rect x="498" y="374.1" width="1" height="8.9" fill-opacity="0.19"/><rect x="499" y="370.8" width="1" height="12.2" fill-opacity="0.25"/><rect x="500" y="368.5" width="1" height="14.5" fill-opacity="0.30"/><rect x="501" y="367.2" width="1" height="15.8" fill-opacity="0.33"/><rect x="502" y="366.2" width="1" height="16.8" fill-opacity="0.35"/><rect x="503" y="365.5" width="1" height="17.5" fill-opacity="0.36"/><rect x="504" y="364.8" width="1" height="18.2" fill-opacity="0.38"/><rect x="505" y="364.1" width="1" height="18.9" fill-opacity="0.39"/><rect x="506" y="363.7" width="1" height="19.3" fill-opacity="0.40"/><rect x="507" y="363.4" width="1" height="19.6" fill-opacity="0.41"/><rect x="508" y="363.6" width="1" height="19.4" fill-opacity="0.41"/><rect x="509" y="364.1" width="1" height="18.9" fill-opacity="0.39"/><rect x="510" y="363.8" width="1" height="19.2" fill-opacity="0.40"/><rect x="511" y="362.7" width="1" height="20.3" fill-opacity="0.42"/><rect x="512" y="361.6" width="1" height="21.4" fill-opacity="0.45"/><rect x="513" y="360.4" width="1" height="22.6" fill-opacity="0.47"/><rect x="514" y="359.1" width="1" height="23.9" fill-opacity="0.50"/><rect x="515" y="358" width="1" height="25" fill-opacity="0.52"/><rect x="516" y="357.2" width="1" height="25.8" fill-opacity="0.54"/><rect x="517" y="356.9" width="1" height="26.1" fill-opacity="0.54"/><rect x="518" y="357.1" width="1" height="25.9" fill-opacity="0.54"/><rect x="519" y="357.2" width="1" height="25.8" fill-opacity="0.54"/><rect x="520" y="357.5" width="1" height="25.5" fill-opacity="0.53"/><rect x="521" y="357.9" width="1" height="25.1" fill-opacity="0.52"/><rect x="522" y="358.2" width="1" height="24.8" fill-opacity="0.52"/><rect x="523" y="357.6" width="1" height="25.4" fill-opacity="0.53"/><rect x="524" y="356" width="1" height="27" fill-opacity="0.56"/><rect x="525" y="351.9" width="1" height="31.1" fill-opacity="0.65"/><rect x="526" y="348" width="1" height="35" fill-opacity="0.73"/><rect x="527" y="346.7" width="1" height="36.3" fill-opacity="0.76"/><rect x="528" y="345.7" width="1" height="37.3" fill-opacity="0.78"/><rect x="529" y="345.2" width="1" height="37.8" fill-opacity="0.79"/><rect x="530" y="344.8" width="1" height="38.2" fill-opacity="0.80"/><rect x="531" y="344.6" width="1" height="38.4" fill-opacity="0.80"/><rect x="532" y="344.5" width="1" height="38.5" fill-opacity="0.80"/><rect x="533" y="344.4" width="1" height="38.6" fill-opacity="0.80"/><rect x="534" y="344.4" width="1" height="38.6" fill-opacity="0.80"/><rect x="535" y="344.4" width="1" height="38.6" fill-opacity="0.80"/><rect x="536" y="344.6" width="1" height="38.4" fill-opacity="0.80"/><rect x="537" y="345.1" width="1" height="37.9" fill-opacity="0.79"/><rect x="538" y="346.6" width="1" height="36.4" fill-opacity="0.76"/><rect x="539" y="349.1" width="1" height="33.9" fill-opacity="0.71"/><rect x="540" y="352.8" width="1" height="30.2" fill-opacity="0.63"/><rect x="541" y="354.9" width="1" height="28.1" fill-opacity="0.58"/><rect x="542" y="354.4" width="1" height="28.6" fill-opacity="0.60"/><rect x="543" y="353.7" width="1" height="29.3" fill-opacity="0.61"/><rect x="544" y="352.8" width="1" height="30.2" fill-opacity="0.63"/><rect x="545" y="351.8" width="1" height="31.2" fill-opacity="0.65"/><rect x="546" y="351.1" width="1" height="31.9" fill-opacity="0.66"/><rect x="547" y="351.2" width="1" height="31.8" fill-opacity="0.66"/><rect x="548" y="351.9" width="1" height="31.1" fill-opacity="0.65"/><rect x="549" y="352.6" width="1" height="30.4" fill-opacity="0.63"/><rect x="550" y="353.7" width="1" height="29.3" fill-opacity="0.61"/><rect x="551" y="355.1" width="1" height="27.9" fill-opacity="0.58"/><rect x="552" y="356.6" width="1" height="26.4" fill-opacity="0.55"/><rect x="553" y="357.8" width="1" height="25.2" fill-opacity="0.52"/><rect x="554" y="358.9" width="1" height="24.1" fill-opacity="0.50"/><rect x="555" y="360" width="1" height="23" fill-opacity="0.48"/><rect x="556" y="356.8" width="1" height="26.2" fill-opacity="0.55"/><rect x="557" y="353.7" width="1" height="29.3" fill-opacity="0.61"/><rect x="558" y="350.7" width="1" height="32.3" fill-opacity="0.67"/><rect x="559" y="348.9" width="1" height="34.1" fill-opacity="0.71"/><rect x="560" y="348.1" width="1" height="34.9" fill-opacity="0.73"/><rect x="561" y="347.5" width="1" height="35.5" fill-opacity="0.74"/><rect x="562" y="346.8" width="1" height="36.2" fill-opacity="0.75"/><rect x="563" y="346.2" width="1" height="36.8" fill-opacity="0.77"/><rect x="564" y="345.7" width="1" height="37.3" fill-opacity="0.78"/><rect x="565" y="345.5" width="1" height="37.5" fill-opacity="0.78"/><rect x="566" y="345.7" width="1" height="37.3" fill-opacity="0.78"/><rect x="567" y="345.9" width="1" height="37.1" fill-opacity="0.77"/><rect x="568" y="345.7" width="1" height="37.3" fill-opacity="0.78"/><rect x="569" y="345" width="1" height="38" fill-opacity="0.79"/><rect x="570" y="344.3" width="1" height="38.7" fill-opacity="0.81"/><rect x="571" y="343.6" width="1" height="39.4" fill-opacity="0.82"/><rect x="572" y="342.9" width="1" height="40.1" fill-opacity="0.83"/><rect x="573" y="342.2" width="1" height="40.8" fill-opacity="0.85"/><rect x="574" y="341.5" width="1" height="41.5" fill-opacity="0.87"/><rect x="575" y="341.1" width="1" height="41.9" fill-opacity="0.87"/><rect x="576" y="341.1" width="1" height="41.9" fill-opacity="0.87"/><rect x="577" y="341.1" width="1" height="41.9" fill-opacity="0.87"/><rect x="578" y="341.5" width="1" height="41.5" fill-opacity="0.86"/><rect x="579" y="342.3" width="1" height="40.7" fill-opacity="0.85"/><rect x="580" y="343.3" width="1" height="39.7" fill-opacity="0.83"/><rect x="581" y="344.6" width="1" height="38.4" fill-opacity="0.80"/><rect x="582" y="345.9" width="1" height="37.1" fill-opacity="0.77"/><rect x="583" y="347.6" width="1" height="35.4" fill-opacity="0.74"/><rect x="584" y="349.8" width="1" height="33.2" fill-opacity="0.69"/><rect x="585" y="351.9" width="1" height="31.1" fill-opacity="0.65"/><rect x="586" y="353.1" width="1" height="29.9" fill-opacity="0.62"/><rect x="587" y="353.2" width="1" height="29.8" fill-opacity="0.62"/><rect x="588" y="353.3" width="1" height="29.7" fill-opacity="0.62"/><rect x="589" y="353.4" width="1" height="29.6" fill-opacity="0.62"/><rect x="590" y="353.5" width="1" height="29.5" fill-opacity="0.61"/><rect x="591" y="353.5" width="1" height="29.5" fill-opacity="0.61"/><rect x="592" y="353.5" width="1" height="29.5" fill-opacity="0.61"/><rect x="593" y="353.5" width="1" height="29.5" fill-opacity="0.61"/><rect x="594" y="353.3" width="1" height="29.7" fill-opacity="0.62"/><rect x="595" y="352.9" width="1" height="30.1" fill-opacity="0.63"/><rect x="596" y="352.5" width="1" height="30.5" fill-opacity="0.64"/><rect x="597" y="352.1" width="1" height="30.9" fill-opacity="0.64"/><rect x="598" y="351.6" width="1" height="31.4" fill-opacity="0.65"/><rect x="599" y="351.1" width="1" height="31.9" fill-opacity="0.66"/><rect x="600" y="350.6" width="1" height="32.4" fill-opacity="0.68"/><rect x="601" y="350.2" width="1" height="32.8" fill-opacity="0.68"/><rect x="602" y="349.9" width="1" height="33.1" fill-opacity="0.69"/><rect x="603" y="350.1" width="1" height="32.9" fill-opacity="0.69"/><rect x="604" y="350.6" width="1" height="32.4" fill-opacity="0.68"/><rect x="605" y="351.2" width="1" height="31.8" fill-opacity="0.66"/><rect x="606" y="352.1" width="1" height="30.9" fill-opacity="0.64"/><rect x="607" y="351" width="1" height="32" fill-opacity="0.67"/><rect x="608" y="348.1" width="1" height="34.9" fill-opacity="0.73"/><rect x="609" y="346.4" width="1" height="36.6" fill-opacity="0.76"/><rect x="610" y="347.6" width="1" height="35.4" fill-opacity="0.74"/><rect x="611" y="348.8" width="1" height="34.2" fill-opacity="0.71"/><rect x="612" y="350.1" width="1" height="32.9" fill-opacity="0.69"/><rect x="613" y="351.3" width="1" height="31.7" fill-opacity="0.66"/><rect x="614" y="352.6" width="1" height="30.4" fill-opacity="0.63"/><rect x="615" y="354" width="1" height="29" fill-opacity="0.60"/><rect x="616" y="355.5" width="1" height="27.5" fill-opacity="0.57"/><rect x="617" y="357" width="1" height="26" fill-opacity="0.54"/><rect x="618" y="357.1" width="1" height="25.9" fill-opacity="0.54"/><rect x="619" y="355.4" width="1" height="27.6" fill-opacity="0.57"/><rect x="620" y="353.8" width="1" height="29.2" fill-opacity="0.61"/><rect x="621" y="352.2" width="1" height="30.8" fill-opacity="0.64"/><rect x="622" y="350.6" width="1" height="32.4" fill-opacity="0.67"/><rect x="623" y="349.9" width="1" height="33.1" fill-opacity="0.69"/><rect x="624" y="350" width="1" height="33" fill-opacity="0.69"/><rect x="625" y="350.1" width="1" height="32.9" fill-opacity="0.69"/><rect x="626" y="350.2" width="1" height="32.8" fill-opacity="0.68"/><rect x="627" y="350" width="1" height="33" fill-opacity="0.69"/><rect x="628" y="349.5" width="1" height="33.5" fill-opacity="0.70"/><rect x="629" y="349" width="1" height="34" fill-opacity="0.71"/><rect x="630" y="347.9" width="1" height="35.1" fill-opacity="0.73"/><rect x="631" y="346.2" width="1" height="36.8" fill-opacity="0.77"/><rect x="632" y="344.6" width="1" height="38.4" fill-opacity="0.80"/><rect x="633" y="342.9" width="1" height="40.1" fill-opacity="0.84"/><rect x="634" y="340.9" width="1" height="42.1" fill-opacity="0.88"/><rect x="635" y="339.6" width="1" height="43.4" fill-opacity="0.90"/><rect x="636" y="338.9" width="1" height="44.1" fill-opacity="0.92"/><rect x="637" y="338.2" width="1" height="44.8" fill-opacity="0.93"/><rect x="638" y="337.6" width="1" height="45.4" fill-opacity="0.95"/><rect x="639" y="337.1" width="1" height="45.9" fill-opacity="0.96"/><rect x="640" y="336.6" width="1" height="46.4" fill-opacity="0.97"/><rect x="641" y="336.3" width="1" height="46.7" fill-opacity="0.97"/><rect x="642" y="336.3" width="1" height="46.7" fill-opacity="0.97"/><rect x="643" y="336.3" width="1" height="46.7" fill-opacity="0.97"/><rect x="644" y="336.6" width="1" height="46.4" fill-opacity="0.97"/><rect x="645" y="339" width="1" height="44" fill-opacity="0.92"/><rect x="646" y="343.2" width="1" height="39.8" fill-opacity="0.83"/><rect x="647" y="348.1" width="1" height="34.9" fill-opacity="0.73"/><rect x="648" y="353.2" width="1" height="29.8" fill-opacity="0.62"/><rect x="649" y="356.5" width="1" height="26.5" fill-opacity="0.55"/><rect x="650" y="357.6" width="1" height="25.4" fill-opacity="0.53"/><rect x="651" y="358.1" width="1" height="24.9" fill-opacity="0.52"/><rect x="652" y="358.6" width="1" height="24.4" fill-opacity="0.51"/><rect x="653" y="358.9" width="1" height="24.1" fill-opacity="0.50"/><rect x="654" y="359.3" width="1" height="23.7" fill-opacity="0.49"/><rect x="655" y="359.7" width="1" height="23.3" fill-opacity="0.49"/><rect x="656" y="360.1" width="1" height="22.9" fill-opacity="0.48"/><rect x="657" y="360.4" width="1" height="22.6" fill-opacity="0.47"/><rect x="658" y="360.5" width="1" height="22.5" fill-opacity="0.47"/><rect x="659" y="360.6" width="1" height="22.4" fill-opacity="0.47"/><rect x="660" y="361" width="1" height="22" fill-opacity="0.46"/><rect x="661" y="361.8" width="1" height="21.2" fill-opacity="0.44"/><rect x="662" y="362.8" width="1" height="20.2" fill-opacity="0.42"/><rect x="663" y="364.1" width="1" height="18.9" fill-opacity="0.39"/><rect x="664" y="365.4" width="1" height="17.6" fill-opacity="0.37"/><rect x="665" y="366.5" width="1" height="16.5" fill-opacity="0.34"/><rect x="666" y="367.6" width="1" height="15.4" fill-opacity="0.32"/><rect x="667" y="368.7" width="1" height="14.3" fill-opacity="0.30"/><rect x="668" y="369.9" width="1" height="13.1" fill-opacity="0.27"/><rect x="669" y="371.4" width="1" height="11.6" fill-opacity="0.24"/><rect x="670" y="372.8" width="1" height="10.2" fill-opacity="0.21"/><rect x="671" y="374.2" width="1" height="8.8" fill-opacity="0.18"/><rect x="672" y="375.6" width="1" height="7.4" fill-opacity="0.15"/><rect x="673" y="377.1" width="1" height="5.9" fill-opacity="0.12"/><rect x="674" y="378.4" width="1" height="4.6" fill-opacity="0.10"/><rect x="675" y="379.4" width="1" height="3.6" fill-opacity="0.07"/><rect x="676" y="379.8" width="1" height="3.2" fill-opacity="0.07"/><rect x="677" y="378.4" width="1" height="4.6" fill-opacity="0.10"/><rect x="678" y="376.2" width="1" height="6.8" fill-opacity="0.14"/><rect x="679" y="373.8" width="1" height="9.2" fill-opacity="0.19"/><rect x="680" y="372.3" width="1" height="10.7" fill-opacity="0.22"/><rect x="681" y="372" width="1" height="11" fill-opacity="0.23"/><rect x="682" y="372.2" width="1" height="10.8" fill-opacity="0.23"/><rect x="683" y="372.7" width="1" height="10.3" fill-opacity="0.21"/><rect x="684" y="373.2" width="1" height="9.8" fill-opacity="0.20"/><rect x="685" y="373.5" width="1" height="9.5" fill-opacity="0.20"/><rect x="686" y="373.6" width="1" height="9.4" fill-opacity="0.20"/><rect x="687" y="373.6" width="1" height="9.4" fill-opacity="0.20"/><rect x="688" y="373.6" width="1" height="9.4" fill-opacity="0.20"/><rect x="689" y="373.6" width="1" height="9.4" fill-opacity="0.19"/><rect x="690" y="373.7" width="1" height="9.3" fill-opacity="0.19"/><rect x="691" y="373.7" width="1" height="9.3" fill-opacity="0.19"/><rect x="692" y="373.8" width="1" height="9.2" fill-opacity="0.19"/><rect x="693" y="373.8" width="1" height="9.2" fill-opacity="0.19"/><rect x="694" y="373.8" width="1" height="9.2" fill-opacity="0.19"/><rect x="695" y="373.9" width="1" height="9.1" fill-opacity="0.19"/><rect x="696" y="373.9" width="1" height="9.1" fill-opacity="0.19"/><rect x="697" y="373.9" width="1" height="9.1" fill-opacity="0.19"/><rect x="698" y="373.9" width="1" height="9.1" fill-opacity="0.19"/><rect x="699" y="374" width="1" height="9" fill-opacity="0.19"/><rect x="700" y="374" width="1" height="9" fill-opacity="0.19"/><rect x="701" y="374" width="1" height="9" fill-opacity="0.19"/><rect x="702" y="374.1" width="1" height="8.9" fill-opacity="0.19"/><rect x="703" y="374.1" width="1" height="8.9" fill-opacity="0.19"/><rect x="704" y="374.1" width="1" height="8.9" fill-opacity="0.18"/><rect x="705" y="374.2" width="1" height="8.8" fill-opacity="0.18"/><rect x="706" y="374.2" width="1" height="8.8" fill-opacity="0.18"/><rect x="707" y="374.2" width="1" height="8.8" fill-opacity="0.18"/><rect x="708" y="374.3" width="1" height="8.7" fill-opacity="0.18"/><rect x="709" y="374.3" width="1" height="8.7" fill-opacity="0.18"/><rect x="710" y="374.3" width="1" height="8.7" fill-opacity="0.18"/><rect x="711" y="374.3" width="1" height="8.7" fill-opacity="0.18"/><rect x="712" y="374.4" width="1" height="8.6" fill-opacity="0.18"/><rect x="713" y="374.4" width="1" height="8.6" fill-opacity="0.18"/><rect x="714" y="374.4" width="1" height="8.6" fill-opacity="0.18"/><rect x="715" y="374.5" width="1" height="8.5" fill-opacity="0.18"/><rect x="716" y="374.5" width="1" height="8.5" fill-opacity="0.18"/><rect x="717" y="374.5" width="1" height="8.5" fill-opacity="0.18"/><rect x="718" y="374.6" width="1" height="8.4" fill-opacity="0.18"/><rect x="719" y="374.6" width="1" height="8.4" fill-opacity="0.18"/><rect x="720" y="373.2" width="1" height="9.8" fill-opacity="0.20"/><rect x="721" y="370.6" width="1" height="12.4" fill-opacity="0.26"/><rect x="722" y="368.1" width="1" height="14.9" fill-opacity="0.31"/><rect x="723" y="366" width="1" height="17" fill-opacity="0.35"/><rect x="724" y="364.3" width="1" height="18.7" fill-opacity="0.39"/><rect x="725" y="363.2" width="1" height="19.8" fill-opacity="0.41"/><rect x="726" y="362.2" width="1" height="20.8" fill-opacity="0.43"/><rect x="727" y="361.3" width="1" height="21.7" fill-opacity="0.45"/><rect x="728" y="360.8" width="1" height="22.2" fill-opacity="0.46"/><rect x="729" y="360.3" width="1" height="22.7" fill-opacity="0.47"/><rect x="730" y="359.8" width="1" height="23.2" fill-opacity="0.48"/><rect x="731" y="359.4" width="1" height="23.6" fill-opacity="0.49"/><rect x="732" y="359.1" width="1" height="23.9" fill-opacity="0.50"/><rect x="733" y="359.2" width="1" height="23.8" fill-opacity="0.49"/><rect x="734" y="359.9" width="1" height="23.1" fill-opacity="0.48"/><rect x="735" y="360" width="1" height="23" fill-opacity="0.48"/><rect x="736" y="359.5" width="1" height="23.5" fill-opacity="0.49"/><rect x="737" y="358.9" width="1" height="24.1" fill-opacity="0.50"/><rect x="738" y="358.9" width="1" height="24.1" fill-opacity="0.50"/><rect x="739" y="359.4" width="1" height="23.6" fill-opacity="0.49"/><rect x="740" y="360.2" width="1" height="22.8" fill-opacity="0.48"/><rect x="741" y="361.1" width="1" height="21.9" fill-opacity="0.46"/><rect x="742" y="362.1" width="1" height="20.9" fill-opacity="0.44"/><rect x="743" y="363" width="1" height="20" fill-opacity="0.42"/><rect x="744" y="363.9" width="1" height="19.1" fill-opacity="0.40"/><rect x="745" y="364.7" width="1" height="18.3" fill-opacity="0.38"/><rect x="746" y="365.6" width="1" height="17.4" fill-opacity="0.36"/><rect x="747" y="365.7" width="1" height="17.3" fill-opacity="0.36"/><rect x="748" y="365.1" width="1" height="17.9" fill-opacity="0.37"/><rect x="749" y="364.5" width="1" height="18.5" fill-opacity="0.39"/><rect x="750" y="363.8" width="1" height="19.2" fill-opacity="0.40"/><rect x="751" y="363.2" width="1" height="19.8" fill-opacity="0.41"/><rect x="752" y="362.6" width="1" height="20.4" fill-opacity="0.42"/><rect x="753" y="363.2" width="1" height="19.8" fill-opacity="0.41"/><rect x="754" y="363.8" width="1" height="19.2" fill-opacity="0.40"/><rect x="755" y="364.5" width="1" height="18.5" fill-opacity="0.39"/><rect x="756" y="365.1" width="1" height="17.9" fill-opacity="0.37"/><rect x="757" y="365.6" width="1" height="17.4" fill-opacity="0.36"/><rect x="758" y="366" width="1" height="17" fill-opacity="0.35"/><rect x="759" y="366.4" width="1" height="16.6" fill-opacity="0.35"/><rect x="760" y="366.6" width="1" height="16.4" fill-opacity="0.34"/><rect x="761" y="366.6" width="1" height="16.4" fill-opacity="0.34"/><rect x="762" y="366.6" width="1" height="16.4" fill-opacity="0.34"/><rect x="763" y="366.6" width="1" height="16.4" fill-opacity="0.34"/><rect x="764" y="367" width="1" height="16" fill-opacity="0.33"/><rect x="765" y="367.8" width="1" height="15.2" fill-opacity="0.32"/><rect x="766" y="368.5" width="1" height="14.5" fill-opacity="0.30"/><rect x="767" y="369.3" width="1" height="13.7" fill-opacity="0.29"/><rect x="768" y="370" width="1" height="13" fill-opacity="0.27"/><rect x="769" y="370.7" width="1" height="12.3" fill-opacity="0.26"/><rect x="770" y="371.4" width="1" height="11.6" fill-opacity="0.24"/><rect x="771" y="372" width="1" height="11" fill-opacity="0.23"/><rect x="772" y="372.5" width="1" height="10.5" fill-opacity="0.22"/><rect x="773" y="373.1" width="1" height="9.9" fill-opacity="0.21"/><rect x="774" y="373.1" width="1" height="9.9" fill-opacity="0.21"/><rect x="775" y="372.5" width="1" height="10.5" fill-opacity="0.22"/><rect x="776" y="372" width="1" height="11" fill-opacity="0.23"/><rect x="777" y="371" width="1" height="12" fill-opacity="0.25"/><rect x="778" y="369.6" width="1" height="13.4" fill-opacity="0.28"/><rect x="779" y="370.2" width="1" height="12.8" fill-opacity="0.27"/><rect x="780" y="372.7" width="1" height="10.3" fill-opacity="0.21"/><rect x="781" y="375.3" width="1" height="7.7" fill-opacity="0.16"/><rect x="782" y="378" width="1" height="5" fill-opacity="0.10"/><rect x="783" y="380.7" width="1" height="2.3" fill-opacity="0.05"/><rect x="848" y="380.3" width="1" height="2.7" fill-opacity="0.06"/><rect x="849" y="377.3" width="1" height="5.7" fill-opacity="0.12"/><rect x="850" y="374.7" width="1" height="8.3" fill-opacity="0.17"/><rect x="851" y="373.6" width="1" height="9.4" fill-opacity="0.20"/><rect x="852" y="374" width="1" height="9" fill-opacity="0.19"/><rect x="853" y="374.4" width="1" height="8.6" fill-opacity="0.18"/><rect x="854" y="374.7" width="1" height="8.3" fill-opacity="0.17"/><rect x="855" y="375" width="1" height="8" fill-opacity="0.17"/><rect x="856" y="374.2" width="1" height="8.8" fill-opacity="0.18"/><rect x="857" y="372.6" width="1" height="10.4" fill-opacity="0.22"/><rect x="858" y="370.9" width="1" height="12.1" fill-opacity="0.25"/><rect x="859" y="369.4" width="1" height="13.6" fill-opacity="0.28"/></g>
</g>
<line x1="36.5" y1="329" x2="36.5" y2="398" stroke="#79838d" stroke-width="1" stroke-dasharray="3,3"/>
<line x1="63.5" y1="329" x2="63.5" y2="398" stroke="#79838d" stroke-width="1" stroke-dasharray="3,3"/>
<line x1="90.5" y1="329" x2="90.5" y2="398" stroke="#79838d" stroke-width="1" stroke-dasharray="3,3"/>
<line x1="117.5" y1="329" x2="117.5" y2="398" stroke="#79838d" stroke-width="1" stroke-dasharray="3,3"/>
<line x1="144.5" y1="329" x2="144.5" y2="398" stroke="#8796a5" stroke-width="1"/>
<line x1="170.5" y1="329" x2="170.5" y2="398" stroke="#79838d" stroke-width="1" stroke-dasharray="3,3"/>
<line x1="197.5" y1="329" x2="197.5" y2="398" stroke="#79838d" stroke-width="1" stroke-dasharray="3,3"/>
<line x1="224.5" y1="329" x2="224.5" y2="398" stroke="#79838d" stroke-width="1" stroke-dasharray="3,3"/>
<line x1="251.5" y1="329" x2="251.5" y2="398" stroke="#79838d" stroke-width="1" stroke-dasharray="3,3"/>
<line x1="278.5" y1="329" x2="278.5" y2="398" stroke="#79838d" stroke-width="1" stroke-dasharray="3,3"/>
<line x1="304.5" y1="329" x2="304.5" y2="398" stroke="#79838d" stroke-width="1" stroke-dasharray="3,3"/>
<line x1="331.5" y1="329" x2="331.5" y2="398" stroke="#79838d" stroke-width="1" stroke-dasharray="3,3"/>
<line x1="358.5" y1="329" x2="358.5" y2="398" stroke="#79838d" stroke-width="1" stroke-dasharray="3,3"/>
<line x1="385.5" y1="329" x2="385.5" y2="398" stroke="#79838d" stroke-width="1" stroke-dasharray="3,3"/>
<line x1="412.5" y1="329" x2="412.5" y2="398" stroke="#79838d" stroke-width="1" stroke-dasharray="3,3"/>
<line x1="439.5" y1="329" x2="439.5" y2="398" stroke="#79838d" stroke-width="1" stroke-dasharray="3,3"/>
<line x1="465.5" y1="329" x2="465.5" y2="398" stroke="#79838d" stroke-width="1" stroke-dasharray="3,3"/>
<line x1="492.5" y1="329" x2="492.5" y2="398" stroke="#79838d" stroke-width="1" stroke-dasharray="3,3"/>
<line x1="519.5" y1="329" x2="519.5" y2="398" stroke="#79838d" stroke-width="1" stroke-dasharray="3,3"/>
<line x1="546.5" y1="329" x2="546.5" y2="398" stroke="#79838d" stroke-width="1" stroke-dasharray="3,3"/>
<line x1="573.5" y1="329" x2="573.5" y2="398" stroke="#79838d" stroke-width="1" stroke-dasharray="3,3"/>
<line x1="600.5" y1="329" x2="600.5" y2="398" stroke="#79838d" stroke-width="1" stroke-dasharray="3,3"/>
<line x1="626.5" y1="329" x2="626.5" y2="398" stroke="#79838d" stroke-width="1" stroke-dasharray="3,3"/>
<line x1="653.5" y1="329" x2="653.5" y2="398" stroke="#79838d" stroke-width="1" stroke-dasharray="3,3"/>
<line x1="680.5" y1="329" x2="680.5" y2="398" stroke="#8796a5" stroke-width="1"/>
<line x1="707.5" y1="329" x2="707.5" y2="398" stroke="#79838d" stroke-width="1" stroke-dasharray="3,3"/>
<line x1="734.5" y1="329" x2="734.5" y2="398" stroke="#79838d" stroke-width="1" stroke-dasharray="3,3"/>
<line x1="761.5" y1="329" x2="761.5" y2="398" stroke="#79838d" stroke-width="1" stroke-dasharray="3,3"/>
<line x1="787.5" y1="329" x2="787.5" y2="398" stroke="#79838d" stroke-width="1" stroke-dasharray="3,3"/>
<line x1="814.5" y1="329" x2="814.5" y2="398" stroke="#79838d" stroke-width="1" stroke-dasharray="3,3"/>
<line x1="841.5" y1="329" x2="841.5" y2="398" stroke="#79838d" stroke-width="1" stroke-dasharray="3,3"/>
<line x1="868.5" y1="329" x2="868.5" y2="398" stroke="#79838d" stroke-width="1" stroke-dasharray="3,3"/>
<line x1="11" y1="358.5" x2="887" y2="358.5" stroke="#79838d" stroke-width="1" stroke-dasharray="3,3"/>
<g clip-path="url(#crsi)">
<rect x="12" y="334.5" width="847" height="1.8" fill="#1414a8"/>
<rect x="12" y="382" width="847" height="1.8" fill="#1414a8"/>
<line x1="11.5" y1="348.7" x2="14" y2="347" stroke="#f0882c" stroke-width="1" stroke-linecap="round"/>
<line x1="14" y1="347" x2="17" y2="347" stroke="#f0882c" stroke-width="1" stroke-linecap="round"/>
<line x1="17" y1="347" x2="19" y2="348.7" stroke="#f0882c" stroke-width="1" stroke-linecap="round"/>
<line x1="19" y1="348.7" x2="22" y2="355.2" stroke="#f0882c" stroke-width="1" stroke-linecap="round"/>
<line x1="22" y1="355.2" x2="25" y2="361.6" stroke="#f0882c" stroke-width="1" stroke-linecap="round"/>
<line x1="25" y1="361.6" x2="27" y2="364.3" stroke="#f0882c" stroke-width="1" stroke-linecap="round"/>
<line x1="27" y1="364.3" x2="32" y2="362.2" stroke="#f0882c" stroke-width="1" stroke-linecap="round"/>
<line x1="32" y1="362.2" x2="36" y2="364.3" stroke="#f0882c" stroke-width="1" stroke-linecap="round"/>
<line x1="36" y1="364.3" x2="40" y2="366.5" stroke="#f0882c" stroke-width="1" stroke-linecap="round"/>
<line x1="40" y1="366.5" x2="45" y2="361.6" stroke="#f0882c" stroke-width="1" stroke-linecap="round"/>
<line x1="45" y1="361.6" x2="50" y2="358.9" stroke="#f0882c" stroke-width="1" stroke-linecap="round"/>
<line x1="50" y1="358.9" x2="55" y2="357.9" stroke="#f0882c" stroke-width="1" stroke-linecap="round"/>
<line x1="55" y1="357.9" x2="60" y2="350.8" stroke="#f0882c" stroke-width="1" stroke-linecap="round"/>
<line x1="60" y1="350.8" x2="62" y2="350.3" stroke="#f0882c" stroke-width="1" stroke-linecap="round"/>
<line x1="62" y1="350.3" x2="65" y2="353" stroke="#f0882c" stroke-width="1" stroke-linecap="round"/>
<line x1="65" y1="353" x2="69" y2="355.7" stroke="#f0882c" stroke-width="1" stroke-linecap="round"/>
<line x1="69" y1="355.7" x2="72" y2="359.5" stroke="#f0882c" stroke-width="1" stroke-linecap="round"/>
<line x1="72" y1="359.5" x2="75" y2="372.4" stroke="#f0882c" stroke-width="1" stroke-linecap="round"/>
<line x1="75" y1="372.4" x2="80" y2="376.2" stroke="#f0882c" stroke-width="1" stroke-linecap="round"/>
<line x1="80" y1="376.2" x2="84" y2="375.1" stroke="#f0882c" stroke-width="1" stroke-linecap="round"/>
<line x1="84" y1="375.1" x2="88" y2="377.3" stroke="#f0882c" stroke-width="1" stroke-linecap="round"/>
<line x1="88" y1="377.3" x2="90" y2="378.9" stroke="#f0882c" stroke-width="1" stroke-linecap="round"/>
<line x1="90" y1="378.9" x2="95" y2="376.8" stroke="#f0882c" stroke-width="1" stroke-linecap="round"/>
<line x1="95" y1="376.8" x2="99" y2="377.3" stroke="#f0882c" stroke-width="1" stroke-linecap="round"/>
<line x1="99" y1="377.3" x2="102" y2="374" stroke="#f0882c" stroke-width="1" stroke-linecap="round"/>
<line x1="102" y1="374" x2="107" y2="363.8" stroke="#f0882c" stroke-width="1" stroke-linecap="round"/>
<line x1="107" y1="363.8" x2="111" y2="360.6" stroke="#f0882c" stroke-width="1" stroke-linecap="round"/>
<line x1="111" y1="360.6" x2="116" y2="366" stroke="#f0882c" stroke-width="1" stroke-linecap="round"/>
<line x1="116" y1="366" x2="121" y2="369.2" stroke="#f0882c" stroke-width="1" stroke-linecap="round"/>
<line x1="121" y1="369.2" x2="127" y2="362.2" stroke="#f0882c" stroke-width="1" stroke-linecap="round"/>
<line x1="127" y1="362.2" x2="130" y2="357.3" stroke="#f0882c" stroke-width="1" stroke-linecap="round"/>
<line x1="130" y1="357.3" x2="135" y2="354.6" stroke="#f0882c" stroke-width="1" stroke-linecap="round"/>
<line x1="135" y1="354.6" x2="137" y2="354.3" stroke="#f0882c" stroke-width="1" stroke-linecap="round"/>
<line x1="137" y1="354.3" x2="140" y2="357.3" stroke="#f0882c" stroke-width="1" stroke-linecap="round"/>
<line x1="140" y1="357.3" x2="142" y2="358.4" stroke="#f0882c" stroke-width="1" stroke-linecap="round"/>
<line x1="142" y1="358.4" x2="145" y2="357.3" stroke="#f0882c" stroke-width="1" stroke-linecap="round"/>
<line x1="145" y1="357.3" x2="148" y2="357.9" stroke="#f0882c" stroke-width="1" stroke-linecap="round"/>
<line x1="148" y1="357.9" x2="150" y2="361.6" stroke="#f0882c" stroke-width="1" stroke-linecap="round"/>
<line x1="150" y1="361.6" x2="151" y2="368.1" stroke="#f0882c" stroke-width="1" stroke-linecap="round"/>
<line x1="151" y1="368.1" x2="153" y2="372.4" stroke="#f0882c" stroke-width="1" stroke-linecap="round"/>
<line x1="153" y1="372.4" x2="155" y2="374.6" stroke="#f0882c" stroke-width="1" stroke-linecap="round"/>
<line x1="155" y1="374.6" x2="165" y2="376" stroke="#f0882c" stroke-width="1" stroke-linecap="round"/>
<line x1="165" y1="376" x2="172" y2="374.6" stroke="#f0882c" stroke-width="1" stroke-linecap="round"/>
<line x1="172" y1="374.6" x2="178" y2="367" stroke="#f0882c" stroke-width="1" stroke-linecap="round"/>
<line x1="178" y1="367" x2="180" y2="369.2" stroke="#f0882c" stroke-width="1" stroke-linecap="round"/>
<line x1="180" y1="369.2" x2="182" y2="374.6" stroke="#f0882c" stroke-width="1" stroke-linecap="round"/>
<line x1="182" y1="374.6" x2="195" y2="372.4" stroke="#f0882c" stroke-width="1" stroke-linecap="round"/>
<line x1="195" y1="372.4" x2="200" y2="373" stroke="#f0882c" stroke-width="1" stroke-linecap="round"/>
<line x1="200" y1="373" x2="205" y2="376.8" stroke="#f0882c" stroke-width="1" stroke-linecap="round"/>
<line x1="205" y1="376.8" x2="211" y2="381.1" stroke="#f0882c" stroke-width="1" stroke-linecap="round"/>
<line x1="211" y1="381.1" x2="215" y2="376.8" stroke="#f0882c" stroke-width="1" stroke-linecap="round"/>
<line x1="215" y1="376.8" x2="220" y2="372.4" stroke="#f0882c" stroke-width="1" stroke-linecap="round"/>
<line x1="220" y1="372.4" x2="224" y2="370.3" stroke="#f0882c" stroke-width="1" stroke-linecap="round"/>
<line x1="224" y1="370.3" x2="228" y2="373.5" stroke="#f0882c" stroke-width="1" stroke-linecap="round"/>
<line x1="228" y1="373.5" x2="232" y2="378.9" stroke="#f0882c" stroke-width="1" stroke-linecap="round"/>
<line x1="232" y1="378.9" x2="234" y2="380" stroke="#f0882c" stroke-width="1" stroke-linecap="round"/>
<line x1="234" y1="380" x2="238" y2="380.5" stroke="#f0882c" stroke-width="1" stroke-linecap="round"/>
<line x1="238" y1="380.5" x2="240" y2="381.6" stroke="#f0882c" stroke-width="1" stroke-linecap="round"/>
<line x1="240" y1="381.6" x2="242" y2="382.7" stroke="#f0882c" stroke-width="1" stroke-linecap="round"/>
<line x1="242" y1="382.7" x2="243" y2="384.3" stroke="#22dd22" stroke-width="1" stroke-linecap="round"/>
<line x1="243" y1="384.3" x2="247" y2="386.5" stroke="#22dd22" stroke-width="1" stroke-linecap="round"/>
<line x1="247" y1="386.5" x2="249" y2="385.2" stroke="#22dd22" stroke-width="1" stroke-linecap="round"/>
<line x1="249" y1="385.2" x2="252" y2="384.3" stroke="#22dd22" stroke-width="1" stroke-linecap="round"/>
<line x1="252" y1="384.3" x2="255" y2="385.2" stroke="#22dd22" stroke-width="1" stroke-linecap="round"/>
<line x1="255" y1="385.2" x2="256" y2="386.5" stroke="#22dd22" stroke-width="1" stroke-linecap="round"/>
<line x1="256" y1="386.5" x2="257" y2="383.2" stroke="#22dd22" stroke-width="1" stroke-linecap="round"/>
<line x1="257" y1="383.2" x2="258" y2="380" stroke="#f0882c" stroke-width="1" stroke-linecap="round"/>
<line x1="258" y1="380" x2="260" y2="375.7" stroke="#f0882c" stroke-width="1" stroke-linecap="round"/>
<line x1="260" y1="375.7" x2="262" y2="373.5" stroke="#f0882c" stroke-width="1" stroke-linecap="round"/>
<line x1="262" y1="373.5" x2="265" y2="371.4" stroke="#f0882c" stroke-width="1" stroke-linecap="round"/>
<line x1="265" y1="371.4" x2="268" y2="367" stroke="#f0882c" stroke-width="1" stroke-linecap="round"/>
<line x1="268" y1="367" x2="269" y2="362.7" stroke="#f0882c" stroke-width="1" stroke-linecap="round"/>
<line x1="269" y1="362.7" x2="270" y2="358.4" stroke="#f0882c" stroke-width="1" stroke-linecap="round"/>
<line x1="270" y1="358.4" x2="272" y2="355.2" stroke="#f0882c" stroke-width="1" stroke-linecap="round"/>
<line x1="272" y1="355.2" x2="273.5" y2="352.5" stroke="#f0882c" stroke-width="1" stroke-linecap="round"/>
<line x1="273.5" y1="352.5" x2="275" y2="354.6" stroke="#f0882c" stroke-width="1" stroke-linecap="round"/>
<line x1="275" y1="354.6" x2="277" y2="357.9" stroke="#f0882c" stroke-width="1" stroke-linecap="round"/>
<line x1="277" y1="357.9" x2="278" y2="358.4" stroke="#f0882c" stroke-width="1" stroke-linecap="round"/>
<line x1="278" y1="358.4" x2="281" y2="357.3" stroke="#f0882c" stroke-width="1" stroke-linecap="round"/>
<line x1="281" y1="357.3" x2="284" y2="357.3" stroke="#f0882c" stroke-width="1" stroke-linecap="round"/>
<line x1="284" y1="357.3" x2="287" y2="358.4" stroke="#f0882c" stroke-width="1" stroke-linecap="round"/>
<line x1="287" y1="358.4" x2="290" y2="358.9" stroke="#f0882c" stroke-width="1" stroke-linecap="round"/>
<line x1="290" y1="358.9" x2="291.5" y2="360.6" stroke="#f0882c" stroke-width="1" stroke-linecap="round"/>
<line x1="291.5" y1="360.6" x2="294" y2="357.9" stroke="#f0882c" stroke-width="1" stroke-linecap="round"/>
<line x1="294" y1="357.9" x2="297" y2="354.1" stroke="#f0882c" stroke-width="1" stroke-linecap="round"/>
<line x1="297" y1="354.1" x2="300" y2="352.5" stroke="#f0882c" stroke-width="1" stroke-linecap="round"/>
<line x1="300" y1="352.5" x2="304" y2="350.8" stroke="#f0882c" stroke-width="1" stroke-linecap="round"/>
<line x1="304" y1="350.8" x2="307" y2="349.8" stroke="#f0882c" stroke-width="1" stroke-linecap="round"/>
<line x1="307" y1="349.8" x2="313" y2="340.6" stroke="#f0882c" stroke-width="1" stroke-linecap="round"/>
<line x1="313" y1="340.6" x2="316" y2="339.5" stroke="#f0882c" stroke-width="1" stroke-linecap="round"/>
<line x1="316" y1="339.5" x2="320" y2="339" stroke="#f0882c" stroke-width="1" stroke-linecap="round"/>
<line x1="320" y1="339" x2="323" y2="338.4" stroke="#f0882c" stroke-width="1" stroke-linecap="round"/>
<line x1="323" y1="338.4" x2="327" y2="336.8" stroke="#f0882c" stroke-width="1" stroke-linecap="round"/>
<line x1="327" y1="336.8" x2="331" y2="336.3" stroke="#f0882c" stroke-width="1" stroke-linecap="round"/>
<line x1="331" y1="336.3" x2="334" y2="334.6" stroke="#f0882c" stroke-width="1" stroke-linecap="round"/>
<line x1="334" y1="334.6" x2="337" y2="333" stroke="#d030e0" stroke-width="1" stroke-linecap="round"/>
<line x1="337" y1="333" x2="340" y2="330.9" stroke="#d030e0" stroke-width="1" stroke-linecap="round"/>
<line x1="340" y1="330.9" x2="341" y2="330.9" stroke="#d030e0" stroke-width="1" stroke-linecap="round"/>
<line x1="341" y1="330.9" x2="342" y2="334.1" stroke="#d030e0" stroke-width="1" stroke-linecap="round"/>
<line x1="342" y1="334.1" x2="343" y2="336.3" stroke="#f0882c" stroke-width="1" stroke-linecap="round"/>
<line x1="343" y1="336.3" x2="345" y2="340" stroke="#f0882c" stroke-width="1" stroke-linecap="round"/>
<line x1="345" y1="340" x2="346" y2="342.2" stroke="#f0882c" stroke-width="1" stroke-linecap="round"/>
<line x1="346" y1="342.2" x2="349" y2="339.5" stroke="#f0882c" stroke-width="1" stroke-linecap="round"/>
<line x1="349" y1="339.5" x2="353" y2="342.7" stroke="#f0882c" stroke-width="1" stroke-linecap="round"/>
<line x1="353" y1="342.7" x2="356" y2="346" stroke="#f0882c" stroke-width="1" stroke-linecap="round"/>
<line x1="356" y1="346" x2="358.5" y2="347.6" stroke="#f0882c" stroke-width="1" stroke-linecap="round"/>
<line x1="358.5" y1="347.6" x2="362" y2="345.4" stroke="#f0882c" stroke-width="1" stroke-linecap="round"/>
<line x1="362" y1="345.4" x2="366" y2="344.4" stroke="#f0882c" stroke-width="1" stroke-linecap="round"/>
<line x1="366" y1="344.4" x2="369" y2="343.8" stroke="#f0882c" stroke-width="1" stroke-linecap="round"/>
<line x1="369" y1="343.8" x2="372" y2="342.2" stroke="#f0882c" stroke-width="1" stroke-linecap="round"/>
<line x1="372" y1="342.2" x2="373" y2="341.1" stroke="#f0882c" stroke-width="1" stroke-linecap="round"/>
<line x1="373" y1="341.1" x2="376" y2="346" stroke="#f0882c" stroke-width="1" stroke-linecap="round"/>
<line x1="376" y1="346" x2="378" y2="344.9" stroke="#f0882c" stroke-width="1" stroke-linecap="round"/>
<line x1="378" y1="344.9" x2="381" y2="344.4" stroke="#f0882c" stroke-width="1" stroke-linecap="round"/>
<line x1="381" y1="344.4" x2="384" y2="345.4" stroke="#f0882c" stroke-width="1" stroke-linecap="round"/>
<line x1="384" y1="345.4" x2="387" y2="347.6" stroke="#f0882c" stroke-width="1" stroke-linecap="round"/>
<line x1="387" y1="347.6" x2="390" y2="350.8" stroke="#f0882c" stroke-width="1" stroke-linecap="round"/>
<line x1="390" y1="350.8" x2="394" y2="357.3" stroke="#f0882c" stroke-width="1" stroke-linecap="round"/>
<line x1="394" y1="357.3" x2="398" y2="354.6" stroke="#f0882c" stroke-width="1" stroke-linecap="round"/>
<line x1="398" y1="354.6" x2="403" y2="349.2" stroke="#f0882c" stroke-width="1" stroke-linecap="round"/>
<line x1="403" y1="349.2" x2="407" y2="354.6" stroke="#f0882c" stroke-width="1" stroke-linecap="round"/>
<line x1="407" y1="354.6" x2="410" y2="353.5" stroke="#f0882c" stroke-width="1" stroke-linecap="round"/>
<line x1="410" y1="353.5" x2="413" y2="350.3" stroke="#f0882c" stroke-width="1" stroke-linecap="round"/>
<line x1="413" y1="350.3" x2="417" y2="347.1" stroke="#f0882c" stroke-width="1" stroke-linecap="round"/>
<line x1="417" y1="347.1" x2="421" y2="345.4" stroke="#f0882c" stroke-width="1" stroke-linecap="round"/>
<line x1="421" y1="345.4" x2="425" y2="350.3" stroke="#f0882c" stroke-width="1" stroke-linecap="round"/>
<line x1="425" y1="350.3" x2="430" y2="348.7" stroke="#f0882c" stroke-width="1" stroke-linecap="round"/>
<line x1="430" y1="348.7" x2="434" y2="351.4" stroke="#f0882c" stroke-width="1" stroke-linecap="round"/>
<line x1="434" y1="351.4" x2="439" y2="348.7" stroke="#f0882c" stroke-width="1" stroke-linecap="round"/>
<line x1="439" y1="348.7" x2="444" y2="348.1" stroke="#f0882c" stroke-width="1" stroke-linecap="round"/>
<line x1="444" y1="348.1" x2="447" y2="344.9" stroke="#f0882c" stroke-width="1" stroke-linecap="round"/>
<line x1="447" y1="344.9" x2="449" y2="342.7" stroke="#f0882c" stroke-width="1" stroke-linecap="round"/>
<line x1="449" y1="342.7" x2="451" y2="342.7" stroke="#f0882c" stroke-width="1" stroke-linecap="round"/>
<line x1="451" y1="342.7" x2="452" y2="343.3" stroke="#f0882c" stroke-width="1" stroke-linecap="round"/>
<line x1="452" y1="343.3" x2="454" y2="348.7" stroke="#f0882c" stroke-width="1" stroke-linecap="round"/>
<line x1="454" y1="348.7" x2="455" y2="351.9" stroke="#f0882c" stroke-width="1" stroke-linecap="round"/>
<line x1="455" y1="351.9" x2="456" y2="357.3" stroke="#f0882c" stroke-width="1" stroke-linecap="round"/>
<line x1="456" y1="357.3" x2="457" y2="362.7" stroke="#f0882c" stroke-width="1" stroke-linecap="round"/>
<line x1="457" y1="362.7" x2="458" y2="364.9" stroke="#f0882c" stroke-width="1" stroke-linecap="round"/>
<line x1="458" y1="364.9" x2="460" y2="363.3" stroke="#f0882c" stroke-width="1" stroke-linecap="round"/>
<line x1="460" y1="363.3" x2="463" y2="367.6" stroke="#f0882c" stroke-width="1" stroke-linecap="round"/>
<line x1="463" y1="367.6" x2="465" y2="370.8" stroke="#f0882c" stroke-width="1" stroke-linecap="round"/>
<line x1="465" y1="370.8" x2="467" y2="369.7" stroke="#f0882c" stroke-width="1" stroke-linecap="round"/>
<line x1="467" y1="369.7" x2="470" y2="369.2" stroke="#f0882c" stroke-width="1" stroke-linecap="round"/>
<line x1="470" y1="369.2" x2="473" y2="371.9" stroke="#f0882c" stroke-width="1" stroke-linecap="round"/>
<line x1="473" y1="371.9" x2="476" y2="374.6" stroke="#f0882c" stroke-width="1" stroke-linecap="round"/>
<line x1="476" y1="374.6" x2="479" y2="377.3" stroke="#f0882c" stroke-width="1" stroke-linecap="round"/>
<line x1="479" y1="377.3" x2="482" y2="380.5" stroke="#f0882c" stroke-width="1" stroke-linecap="round"/>
<line x1="482" y1="380.5" x2="484" y2="382.2" stroke="#f0882c" stroke-width="1" stroke-linecap="round"/>
<line x1="484" y1="382.2" x2="487" y2="382.2" stroke="#f0882c" stroke-width="1" stroke-linecap="round"/>
<line x1="487" y1="382.2" x2="489" y2="380.5" stroke="#f0882c" stroke-width="1" stroke-linecap="round"/>
<line x1="489" y1="380.5" x2="492" y2="378.9" stroke="#f0882c" stroke-width="1" stroke-linecap="round"/>
<line x1="492" y1="378.9" x2="494" y2="379.5" stroke="#f0882c" stroke-width="1" stroke-linecap="round"/>
<line x1="494" y1="379.5" x2="497" y2="381.1" stroke="#f0882c" stroke-width="1" stroke-linecap="round"/>
<line x1="497" y1="381.1" x2="498" y2="375.7" stroke="#f0882c" stroke-width="1" stroke-linecap="round"/>
<line x1="498" y1="375.7" x2="500" y2="369.2" stroke="#f0882c" stroke-width="1" stroke-linecap="round"/>
<line x1="500" y1="369.2" x2="502" y2="366.5" stroke="#f0882c" stroke-width="1" stroke-linecap="round"/>
<line x1="502" y1="366.5" x2="506" y2="363.8" stroke="#f0882c" stroke-width="1" stroke-linecap="round"/>
<line x1="506" y1="363.8" x2="508" y2="363.3" stroke="#f0882c" stroke-width="1" stroke-linecap="round"/>
<line x1="508" y1="363.3" x2="510" y2="364.3" stroke="#f0882c" stroke-width="1" stroke-linecap="round"/>
<line x1="510" y1="364.3" x2="513" y2="361.1" stroke="#f0882c" stroke-width="1" stroke-linecap="round"/>
<line x1="513" y1="361.1" x2="515" y2="358.4" stroke="#f0882c" stroke-width="1" stroke-linecap="round"/>
<line x1="515" y1="358.4" x2="517" y2="356.8" stroke="#f0882c" stroke-width="1" stroke-linecap="round"/>
<line x1="517" y1="356.8" x2="520" y2="357.3" stroke="#f0882c" stroke-width="1" stroke-linecap="round"/>
<line x1="520" y1="357.3" x2="523" y2="358.4" stroke="#f0882c" stroke-width="1" stroke-linecap="round"/>
<line x1="523" y1="358.4" x2="525" y2="355.2" stroke="#f0882c" stroke-width="1" stroke-linecap="round"/>
<line x1="525" y1="355.2" x2="526" y2="348.7" stroke="#f0882c" stroke-width="1" stroke-linecap="round"/>
<line x1="526" y1="348.7" x2="528" y2="346" stroke="#f0882c" stroke-width="1" stroke-linecap="round"/>
<line x1="528" y1="346" x2="530" y2="344.9" stroke="#f0882c" stroke-width="1" stroke-linecap="round"/>
<line x1="530" y1="344.9" x2="533" y2="344.4" stroke="#f0882c" stroke-width="1" stroke-linecap="round"/>
<line x1="533" y1="344.4" x2="536" y2="344.4" stroke="#f0882c" stroke-width="1" stroke-linecap="round"/>
<line x1="536" y1="344.4" x2="538" y2="345.4" stroke="#f0882c" stroke-width="1" stroke-linecap="round"/>
<line x1="538" y1="345.4" x2="540" y2="350.3" stroke="#f0882c" stroke-width="1" stroke-linecap="round"/>
<line x1="540" y1="350.3" x2="541" y2="355.2" stroke="#f0882c" stroke-width="1" stroke-linecap="round"/>
<line x1="541" y1="355.2" x2="543" y2="354.1" stroke="#f0882c" stroke-width="1" stroke-linecap="round"/>
<line x1="543" y1="354.1" x2="546" y2="351.4" stroke="#f0882c" stroke-width="1" stroke-linecap="round"/>
<line x1="546" y1="351.4" x2="547" y2="350.8" stroke="#f0882c" stroke-width="1" stroke-linecap="round"/>
<line x1="547" y1="350.8" x2="550" y2="353" stroke="#f0882c" stroke-width="1" stroke-linecap="round"/>
<line x1="550" y1="353" x2="553" y2="357.3" stroke="#f0882c" stroke-width="1" stroke-linecap="round"/>
<line x1="553" y1="357.3" x2="555.5" y2="360" stroke="#f0882c" stroke-width="1" stroke-linecap="round"/>
<line x1="555.5" y1="360" x2="557" y2="355.2" stroke="#f0882c" stroke-width="1" stroke-linecap="round"/>
<line x1="557" y1="355.2" x2="559" y2="349.2" stroke="#f0882c" stroke-width="1" stroke-linecap="round"/>
<line x1="559" y1="349.2" x2="562" y2="347.1" stroke="#f0882c" stroke-width="1" stroke-linecap="round"/>
<line x1="562" y1="347.1" x2="565" y2="345.4" stroke="#f0882c" stroke-width="1" stroke-linecap="round"/>
<line x1="565" y1="345.4" x2="568" y2="346" stroke="#f0882c" stroke-width="1" stroke-linecap="round"/>
<line x1="568" y1="346" x2="572" y2="343.3" stroke="#f0882c" stroke-width="1" stroke-linecap="round"/>
<line x1="572" y1="343.3" x2="575" y2="341.1" stroke="#f0882c" stroke-width="1" stroke-linecap="round"/>
<line x1="575" y1="341.1" x2="578" y2="341.1" stroke="#f0882c" stroke-width="1" stroke-linecap="round"/>
<line x1="578" y1="341.1" x2="580" y2="342.7" stroke="#f0882c" stroke-width="1" stroke-linecap="round"/>
<line x1="580" y1="342.7" x2="583" y2="346.5" stroke="#f0882c" stroke-width="1" stroke-linecap="round"/>
<line x1="583" y1="346.5" x2="586" y2="353" stroke="#f0882c" stroke-width="1" stroke-linecap="round"/>
<line x1="586" y1="353" x2="590" y2="353.5" stroke="#f0882c" stroke-width="1" stroke-linecap="round"/>
<line x1="590" y1="353.5" x2="594" y2="353.5" stroke="#f0882c" stroke-width="1" stroke-linecap="round"/>
<line x1="594" y1="353.5" x2="598" y2="351.9" stroke="#f0882c" stroke-width="1" stroke-linecap="round"/>
<line x1="598" y1="351.9" x2="601" y2="350.3" stroke="#f0882c" stroke-width="1" stroke-linecap="round"/>
<line x1="601" y1="350.3" x2="603" y2="349.8" stroke="#f0882c" stroke-width="1" stroke-linecap="round"/>
<line x1="603" y1="349.8" x2="605" y2="350.8" stroke="#f0882c" stroke-width="1" stroke-linecap="round"/>
<line x1="605" y1="350.8" x2="607" y2="352.5" stroke="#f0882c" stroke-width="1" stroke-linecap="round"/>
<line x1="607" y1="352.5" x2="609.2" y2="346" stroke="#f0882c" stroke-width="1" stroke-linecap="round"/>
<line x1="609.2" y1="346" x2="614" y2="351.9" stroke="#f0882c" stroke-width="1" stroke-linecap="round"/>
<line x1="614" y1="351.9" x2="617" y2="356.2" stroke="#f0882c" stroke-width="1" stroke-linecap="round"/>
<line x1="617" y1="356.2" x2="618" y2="357.9" stroke="#f0882c" stroke-width="1" stroke-linecap="round"/>
<line x1="618" y1="357.9" x2="621" y2="353" stroke="#f0882c" stroke-width="1" stroke-linecap="round"/>
<line x1="621" y1="353" x2="623" y2="349.8" stroke="#f0882c" stroke-width="1" stroke-linecap="round"/>
<line x1="623" y1="349.8" x2="627" y2="350.3" stroke="#f0882c" stroke-width="1" stroke-linecap="round"/>
<line x1="627" y1="350.3" x2="630" y2="348.7" stroke="#f0882c" stroke-width="1" stroke-linecap="round"/>
<line x1="630" y1="348.7" x2="633" y2="343.8" stroke="#f0882c" stroke-width="1" stroke-linecap="round"/>
<line x1="633" y1="343.8" x2="635" y2="340" stroke="#f0882c" stroke-width="1" stroke-linecap="round"/>
<line x1="635" y1="340" x2="638" y2="337.9" stroke="#f0882c" stroke-width="1" stroke-linecap="round"/>
<line x1="638" y1="337.9" x2="640" y2="336.8" stroke="#f0882c" stroke-width="1" stroke-linecap="round"/>
<line x1="640" y1="336.8" x2="641" y2="336.3" stroke="#f0882c" stroke-width="1" stroke-linecap="round"/>
<line x1="641" y1="336.3" x2="644" y2="336.3" stroke="#f0882c" stroke-width="1" stroke-linecap="round"/>
<line x1="644" y1="336.3" x2="645" y2="336.8" stroke="#f0882c" stroke-width="1" stroke-linecap="round"/>
<line x1="645" y1="336.8" x2="646" y2="341.1" stroke="#f0882c" stroke-width="1" stroke-linecap="round"/>
<line x1="646" y1="341.1" x2="647" y2="345.4" stroke="#f0882c" stroke-width="1" stroke-linecap="round"/>
<line x1="647" y1="345.4" x2="648" y2="350.8" stroke="#f0882c" stroke-width="1" stroke-linecap="round"/>
<line x1="648" y1="350.8" x2="649" y2="355.7" stroke="#f0882c" stroke-width="1" stroke-linecap="round"/>
<line x1="649" y1="355.7" x2="650" y2="357.3" stroke="#f0882c" stroke-width="1" stroke-linecap="round"/>
<line x1="650" y1="357.3" x2="652" y2="358.4" stroke="#f0882c" stroke-width="1" stroke-linecap="round"/>
<line x1="652" y1="358.4" x2="655" y2="359.5" stroke="#f0882c" stroke-width="1" stroke-linecap="round"/>
<line x1="655" y1="359.5" x2="657" y2="360.3" stroke="#f0882c" stroke-width="1" stroke-linecap="round"/>
<line x1="657" y1="360.3" x2="660" y2="360.6" stroke="#f0882c" stroke-width="1" stroke-linecap="round"/>
<line x1="660" y1="360.6" x2="662" y2="362.2" stroke="#f0882c" stroke-width="1" stroke-linecap="round"/>
<line x1="662" y1="362.2" x2="665" y2="366" stroke="#f0882c" stroke-width="1" stroke-linecap="round"/>
<line x1="665" y1="366" x2="668" y2="369.2" stroke="#f0882c" stroke-width="1" stroke-linecap="round"/>
<line x1="668" y1="369.2" x2="671" y2="373.5" stroke="#f0882c" stroke-width="1" stroke-linecap="round"/>
<line x1="671" y1="373.5" x2="674" y2="377.8" stroke="#f0882c" stroke-width="1" stroke-linecap="round"/>
<line x1="674" y1="377.8" x2="676" y2="380" stroke="#f0882c" stroke-width="1" stroke-linecap="round"/>
<line x1="676" y1="380" x2="677" y2="379.5" stroke="#f0882c" stroke-width="1" stroke-linecap="round"/>
<line x1="677" y1="379.5" x2="679" y2="375.1" stroke="#f0882c" stroke-width="1" stroke-linecap="round"/>
<line x1="679" y1="375.1" x2="680" y2="372.4" stroke="#f0882c" stroke-width="1" stroke-linecap="round"/>
<line x1="680" y1="372.4" x2="682" y2="371.9" stroke="#f0882c" stroke-width="1" stroke-linecap="round"/>
<line x1="682" y1="371.9" x2="685" y2="373.5" stroke="#f0882c" stroke-width="1" stroke-linecap="round"/>
<line x1="685" y1="373.5" x2="700" y2="374" stroke="#f0882c" stroke-width="1" stroke-linecap="round"/>
<line x1="700" y1="374" x2="720" y2="374.6" stroke="#f0882c" stroke-width="1" stroke-linecap="round"/>
<line x1="720" y1="374.6" x2="722" y2="369.2" stroke="#f0882c" stroke-width="1" stroke-linecap="round"/>
<line x1="722" y1="369.2" x2="724" y2="364.9" stroke="#f0882c" stroke-width="1" stroke-linecap="round"/>
<line x1="724" y1="364.9" x2="727" y2="361.6" stroke="#f0882c" stroke-width="1" stroke-linecap="round"/>
<line x1="727" y1="361.6" x2="730" y2="360" stroke="#f0882c" stroke-width="1" stroke-linecap="round"/>
<line x1="730" y1="360" x2="733" y2="358.9" stroke="#f0882c" stroke-width="1" stroke-linecap="round"/>
<line x1="733" y1="358.9" x2="735" y2="360.3" stroke="#f0882c" stroke-width="1" stroke-linecap="round"/>
<line x1="735" y1="360.3" x2="738" y2="358.6" stroke="#f0882c" stroke-width="1" stroke-linecap="round"/>
<line x1="738" y1="358.6" x2="740" y2="359.7" stroke="#f0882c" stroke-width="1" stroke-linecap="round"/>
<line x1="740" y1="359.7" x2="743" y2="362.6" stroke="#f0882c" stroke-width="1" stroke-linecap="round"/>
<line x1="743" y1="362.6" x2="747" y2="366" stroke="#f0882c" stroke-width="1" stroke-linecap="round"/>
<line x1="747" y1="366" x2="752.5" y2="362.6" stroke="#f0882c" stroke-width="1" stroke-linecap="round"/>
<line x1="752.5" y1="362.6" x2="757" y2="365.4" stroke="#f0882c" stroke-width="1" stroke-linecap="round"/>
<line x1="757" y1="365.4" x2="760" y2="366.6" stroke="#f0882c" stroke-width="1" stroke-linecap="round"/>
<line x1="760" y1="366.6" x2="764" y2="366.6" stroke="#f0882c" stroke-width="1" stroke-linecap="round"/>
<line x1="764" y1="366.6" x2="767" y2="368.9" stroke="#f0882c" stroke-width="1" stroke-linecap="round"/>
<line x1="767" y1="368.9" x2="770" y2="371.1" stroke="#f0882c" stroke-width="1" stroke-linecap="round"/>
<line x1="770" y1="371.1" x2="774" y2="373.4" stroke="#f0882c" stroke-width="1" stroke-linecap="round"/>
<line x1="774" y1="373.4" x2="777" y2="371.7" stroke="#f0882c" stroke-width="1" stroke-linecap="round"/>
<line x1="777" y1="371.7" x2="779" y2="368.9" stroke="#f0882c" stroke-width="1" stroke-linecap="round"/>
<line x1="779" y1="368.9" x2="781" y2="374" stroke="#22dd22" stroke-width="1" stroke-linecap="round"/>
<line x1="781" y1="374" x2="784" y2="382" stroke="#22dd22" stroke-width="1" stroke-linecap="round"/>
<line x1="784" y1="382" x2="786" y2="384.5" stroke="#22dd22" stroke-width="1" stroke-linecap="round"/>
<line x1="786" y1="384.5" x2="790" y2="384.5" stroke="#22dd22" stroke-width="1" stroke-linecap="round"/>
<line x1="790" y1="384.5" x2="793" y2="386.6" stroke="#22dd22" stroke-width="1" stroke-linecap="round"/>
<line x1="793" y1="386.6" x2="797" y2="389.4" stroke="#22dd22" stroke-width="1" stroke-linecap="round"/>
<line x1="797" y1="389.4" x2="800" y2="387.1" stroke="#22dd22" stroke-width="1" stroke-linecap="round"/>
<line x1="800" y1="387.1" x2="804" y2="389.4" stroke="#22dd22" stroke-width="1" stroke-linecap="round"/>
<line x1="804" y1="389.4" x2="808" y2="386" stroke="#22dd22" stroke-width="1" stroke-linecap="round"/>
<line x1="808" y1="386" x2="813" y2="384.5" stroke="#22dd22" stroke-width="1" stroke-linecap="round"/>
<line x1="813" y1="384.5" x2="817" y2="385.4" stroke="#22dd22" stroke-width="1" stroke-linecap="round"/>
<line x1="817" y1="385.4" x2="820" y2="387.7" stroke="#22dd22" stroke-width="1" stroke-linecap="round"/>
<line x1="820" y1="387.7" x2="824" y2="391.1" stroke="#22dd22" stroke-width="1" stroke-linecap="round"/>
<line x1="824" y1="391.1" x2="828" y2="393.4" stroke="#22dd22" stroke-width="1" stroke-linecap="round"/>
<line x1="828" y1="393.4" x2="833" y2="394.6" stroke="#22dd22" stroke-width="1" stroke-linecap="round"/>
<line x1="833" y1="394.6" x2="838" y2="395.1" stroke="#22dd22" stroke-width="1" stroke-linecap="round"/>
<line x1="838" y1="395.1" x2="841" y2="395.1" stroke="#22dd22" stroke-width="1" stroke-linecap="round"/>
<line x1="841" y1="395.1" x2="845" y2="390" stroke="#22dd22" stroke-width="1" stroke-linecap="round"/>
<line x1="845" y1="390" x2="847" y2="385.4" stroke="#f0882c" stroke-width="1" stroke-linecap="round"/>
<line x1="847" y1="385.4" x2="849" y2="378.6" stroke="#f0882c" stroke-width="1" stroke-linecap="round"/>
<line x1="849" y1="378.6" x2="851" y2="373.4" stroke="#f0882c" stroke-width="1" stroke-linecap="round"/>
<line x1="851" y1="373.4" x2="854" y2="374.6" stroke="#f0882c" stroke-width="1" stroke-linecap="round"/>
<line x1="854" y1="374.6" x2="856" y2="375.1" stroke="#f0882c" stroke-width="1" stroke-linecap="round"/>
<line x1="856" y1="375.1" x2="858" y2="371.7" stroke="#f0882c" stroke-width="1" stroke-linecap="round"/>
<line x1="858" y1="371.7" x2="859.5" y2="369.4" stroke="#f0882c" stroke-width="1" stroke-linecap="round"/>
</g>
<rect x="11.5" y="328.5" width="876" height="70" fill="none" stroke="#a9bac9" stroke-width="1"/>
<rect x="12" y="331" width="16" height="11" fill="#3c434c"/>
<text x="13" y="340.5" font-size="11" fill="#f08a2a" textLength="15" lengthAdjust="spacingAndGlyphs">RSI</text>
<line x1="888" y1="358.5" x2="893" y2="358.5" stroke="#a9bac9"/>
<text x="895" y="365" font-size="11" fill="#ffffff" stroke="#ffffff" stroke-width="0.25" textLength="11" lengthAdjust="spacingAndGlyphs">50</text>
<path d="M12.5 375.5 H70 Q72.5 375.5 72.5 377.5 V394.5 H12.5 Z" fill="url(#lbl)" stroke="#aabbd0" stroke-width="1"/>
<rect x="11" y="375" width="2" height="27" fill="#c8e8e4"/>
<text x="19" y="389" font-size="11" fill="#ffffff" stroke="#ffffff" stroke-width="0.25">Янв 2021</text>
<path d="M144.5 375.5 H204 Q206.5 375.5 206.5 377.5 V394.5 H144.5 Z" fill="url(#lbl)" stroke="#aabbd0" stroke-width="1"/>
<rect x="144" y="375" width="2" height="27" fill="#c8e8e4"/>
<text x="151" y="389" font-size="11" fill="#ffffff" stroke="#ffffff" stroke-width="0.25">Фев 2021</text>
<path d="M681.5 375.5 H742 Q744.5 375.5 744.5 377.5 V394.5 H681.5 Z" fill="url(#lbl)" stroke="#aabbd0" stroke-width="1"/>
<rect x="680" y="375" width="2" height="27" fill="#c8e8e4"/>
<text x="688" y="389" font-size="11" fill="#ffffff" stroke="#ffffff" stroke-width="0.25">Мар 2021</text>
<line x1="36.5" y1="398" x2="36.5" y2="402" stroke="#a9bac9"/>
<text x="30.9" y="421" font-size="11" fill="#ffffff" stroke="#ffffff" stroke-width="0.25" textLength="10.8" lengthAdjust="spacingAndGlyphs">26</text>
<line x1="63.5" y1="398" x2="63.5" y2="402" stroke="#a9bac9"/>
<text x="57.9" y="421" font-size="11" fill="#ffffff" stroke="#ffffff" stroke-width="0.25" textLength="10.8" lengthAdjust="spacingAndGlyphs">27</text>
<line x1="90.5" y1="398" x2="90.5" y2="402" stroke="#a9bac9"/>
<text x="84.9" y="421" font-size="11" fill="#ffffff" stroke="#ffffff" stroke-width="0.25" textLength="10.8" lengthAdjust="spacingAndGlyphs">28</text>
<line x1="117.5" y1="398" x2="117.5" y2="402" stroke="#a9bac9"/>
<text x="111.9" y="421" font-size="11" fill="#ffffff" stroke="#ffffff" stroke-width="0.25" textLength="10.8" lengthAdjust="spacingAndGlyphs">29</text>
<line x1="144.5" y1="398" x2="144.5" y2="402" stroke="#a9bac9"/>
<text x="141.6" y="421" font-size="11" fill="#ffffff" stroke="#ffffff" stroke-width="0.25" textLength="5.4" lengthAdjust="spacingAndGlyphs">1</text>
<line x1="170.5" y1="398" x2="170.5" y2="402" stroke="#a9bac9"/>
<text x="167.6" y="421" font-size="11" fill="#ffffff" stroke="#ffffff" stroke-width="0.25" textLength="5.4" lengthAdjust="spacingAndGlyphs">2</text>
<line x1="197.5" y1="398" x2="197.5" y2="402" stroke="#a9bac9"/>
<text x="194.6" y="421" font-size="11" fill="#ffffff" stroke="#ffffff" stroke-width="0.25" textLength="5.4" lengthAdjust="spacingAndGlyphs">3</text>
<line x1="224.5" y1="398" x2="224.5" y2="402" stroke="#a9bac9"/>
<text x="221.6" y="421" font-size="11" fill="#ffffff" stroke="#ffffff" stroke-width="0.25" textLength="5.4" lengthAdjust="spacingAndGlyphs">4</text>
<line x1="251.5" y1="398" x2="251.5" y2="402" stroke="#a9bac9"/>
<text x="248.6" y="421" font-size="11" fill="#ffffff" stroke="#ffffff" stroke-width="0.25" textLength="5.4" lengthAdjust="spacingAndGlyphs">5</text>
<line x1="278.5" y1="398" x2="278.5" y2="402" stroke="#a9bac9"/>
<text x="275.6" y="421" font-size="11" fill="#ffffff" stroke="#ffffff" stroke-width="0.25" textLength="5.4" lengthAdjust="spacingAndGlyphs">8</text>
<line x1="304.5" y1="398" x2="304.5" y2="402" stroke="#a9bac9"/>
<text x="301.6" y="421" font-size="11" fill="#ffffff" stroke="#ffffff" stroke-width="0.25" textLength="5.4" lengthAdjust="spacingAndGlyphs">9</text>
<line x1="331.5" y1="398" x2="331.5" y2="402" stroke="#a9bac9"/>
<text x="325.9" y="421" font-size="11" fill="#ffffff" stroke="#ffffff" stroke-width="0.25" textLength="10.8" lengthAdjust="spacingAndGlyphs">10</text>
<line x1="358.5" y1="398" x2="358.5" y2="402" stroke="#a9bac9"/>
<text x="352.9" y="421" font-size="11" fill="#ffffff" stroke="#ffffff" stroke-width="0.25" textLength="10.8" lengthAdjust="spacingAndGlyphs">11</text>
<line x1="385.5" y1="398" x2="385.5" y2="402" stroke="#a9bac9"/>
<text x="379.9" y="421" font-size="11" fill="#ffffff" stroke="#ffffff" stroke-width="0.25" textLength="10.8" lengthAdjust="spacingAndGlyphs">12</text>
<line x1="412.5" y1="398" x2="412.5" y2="402" stroke="#a9bac9"/>
<text x="406.9" y="421" font-size="11" fill="#ffffff" stroke="#ffffff" stroke-width="0.25" textLength="10.8" lengthAdjust="spacingAndGlyphs">15</text>
<line x1="439.5" y1="398" x2="439.5" y2="402" stroke="#a9bac9"/>
<text x="433.9" y="421" font-size="11" fill="#ffffff" stroke="#ffffff" stroke-width="0.25" textLength="10.8" lengthAdjust="spacingAndGlyphs">16</text>
<line x1="465.5" y1="398" x2="465.5" y2="402" stroke="#a9bac9"/>
<text x="459.9" y="421" font-size="11" fill="#ffffff" stroke="#ffffff" stroke-width="0.25" textLength="10.8" lengthAdjust="spacingAndGlyphs">17</text>
<line x1="492.5" y1="398" x2="492.5" y2="402" stroke="#a9bac9"/>
<text x="486.9" y="421" font-size="11" fill="#ffffff" stroke="#ffffff" stroke-width="0.25" textLength="10.8" lengthAdjust="spacingAndGlyphs">18</text>
<line x1="519.5" y1="398" x2="519.5" y2="402" stroke="#a9bac9"/>
<text x="513.9" y="421" font-size="11" fill="#ffffff" stroke="#ffffff" stroke-width="0.25" textLength="10.8" lengthAdjust="spacingAndGlyphs">19</text>
<line x1="546.5" y1="398" x2="546.5" y2="402" stroke="#a9bac9"/>
<text x="540.9" y="421" font-size="11" fill="#ffffff" stroke="#ffffff" stroke-width="0.25" textLength="10.8" lengthAdjust="spacingAndGlyphs">22</text>
<line x1="573.5" y1="398" x2="573.5" y2="402" stroke="#a9bac9"/>
<text x="567.9" y="421" font-size="11" fill="#ffffff" stroke="#ffffff" stroke-width="0.25" textLength="10.8" lengthAdjust="spacingAndGlyphs">23</text>
<line x1="600.5" y1="398" x2="600.5" y2="402" stroke="#a9bac9"/>
<text x="594.9" y="421" font-size="11" fill="#ffffff" stroke="#ffffff" stroke-width="0.25" textLength="10.8" lengthAdjust="spacingAndGlyphs">24</text>
<line x1="626.5" y1="398" x2="626.5" y2="402" stroke="#a9bac9"/>
<text x="620.9" y="421" font-size="11" fill="#ffffff" stroke="#ffffff" stroke-width="0.25" textLength="10.8" lengthAdjust="spacingAndGlyphs">25</text>
<line x1="653.5" y1="398" x2="653.5" y2="402" stroke="#a9bac9"/>
<text x="647.9" y="421" font-size="11" fill="#ffffff" stroke="#ffffff" stroke-width="0.25" textLength="10.8" lengthAdjust="spacingAndGlyphs">26</text>
<line x1="680.5" y1="398" x2="680.5" y2="402" stroke="#a9bac9"/>
<text x="677.6" y="421" font-size="11" fill="#ffffff" stroke="#ffffff" stroke-width="0.25" textLength="5.4" lengthAdjust="spacingAndGlyphs">1</text>
<line x1="707.5" y1="398" x2="707.5" y2="402" stroke="#a9bac9"/>
<text x="704.6" y="421" font-size="11" fill="#ffffff" stroke="#ffffff" stroke-width="0.25" textLength="5.4" lengthAdjust="spacingAndGlyphs">2</text>
<line x1="734.5" y1="398" x2="734.5" y2="402" stroke="#a9bac9"/>
<text x="731.6" y="421" font-size="11" fill="#ffffff" stroke="#ffffff" stroke-width="0.25" textLength="5.4" lengthAdjust="spacingAndGlyphs">3</text>
<line x1="761.5" y1="398" x2="761.5" y2="402" stroke="#a9bac9"/>
<text x="758.6" y="421" font-size="11" fill="#ffffff" stroke="#ffffff" stroke-width="0.25" textLength="5.4" lengthAdjust="spacingAndGlyphs">4</text>
<line x1="787.5" y1="398" x2="787.5" y2="402" stroke="#a9bac9"/>
<text x="784.6" y="421" font-size="11" fill="#ffffff" stroke="#ffffff" stroke-width="0.25" textLength="5.4" lengthAdjust="spacingAndGlyphs">5</text>
<line x1="814.5" y1="398" x2="814.5" y2="402" stroke="#a9bac9"/>
<text x="811.6" y="421" font-size="11" fill="#ffffff" stroke="#ffffff" stroke-width="0.25" textLength="5.4" lengthAdjust="spacingAndGlyphs">8</text>
<line x1="841.5" y1="398" x2="841.5" y2="402" stroke="#a9bac9"/>
<text x="838.6" y="421" font-size="11" fill="#ffffff" stroke="#ffffff" stroke-width="0.25" textLength="5.4" lengthAdjust="spacingAndGlyphs">9</text>
<line x1="868.5" y1="398" x2="868.5" y2="402" stroke="#a9bac9"/>
<text x="862.9" y="421" font-size="11" fill="#ffffff" stroke="#ffffff" stroke-width="0.25" textLength="10.8" lengthAdjust="spacingAndGlyphs">10</text>
</svg>
</body></html>
